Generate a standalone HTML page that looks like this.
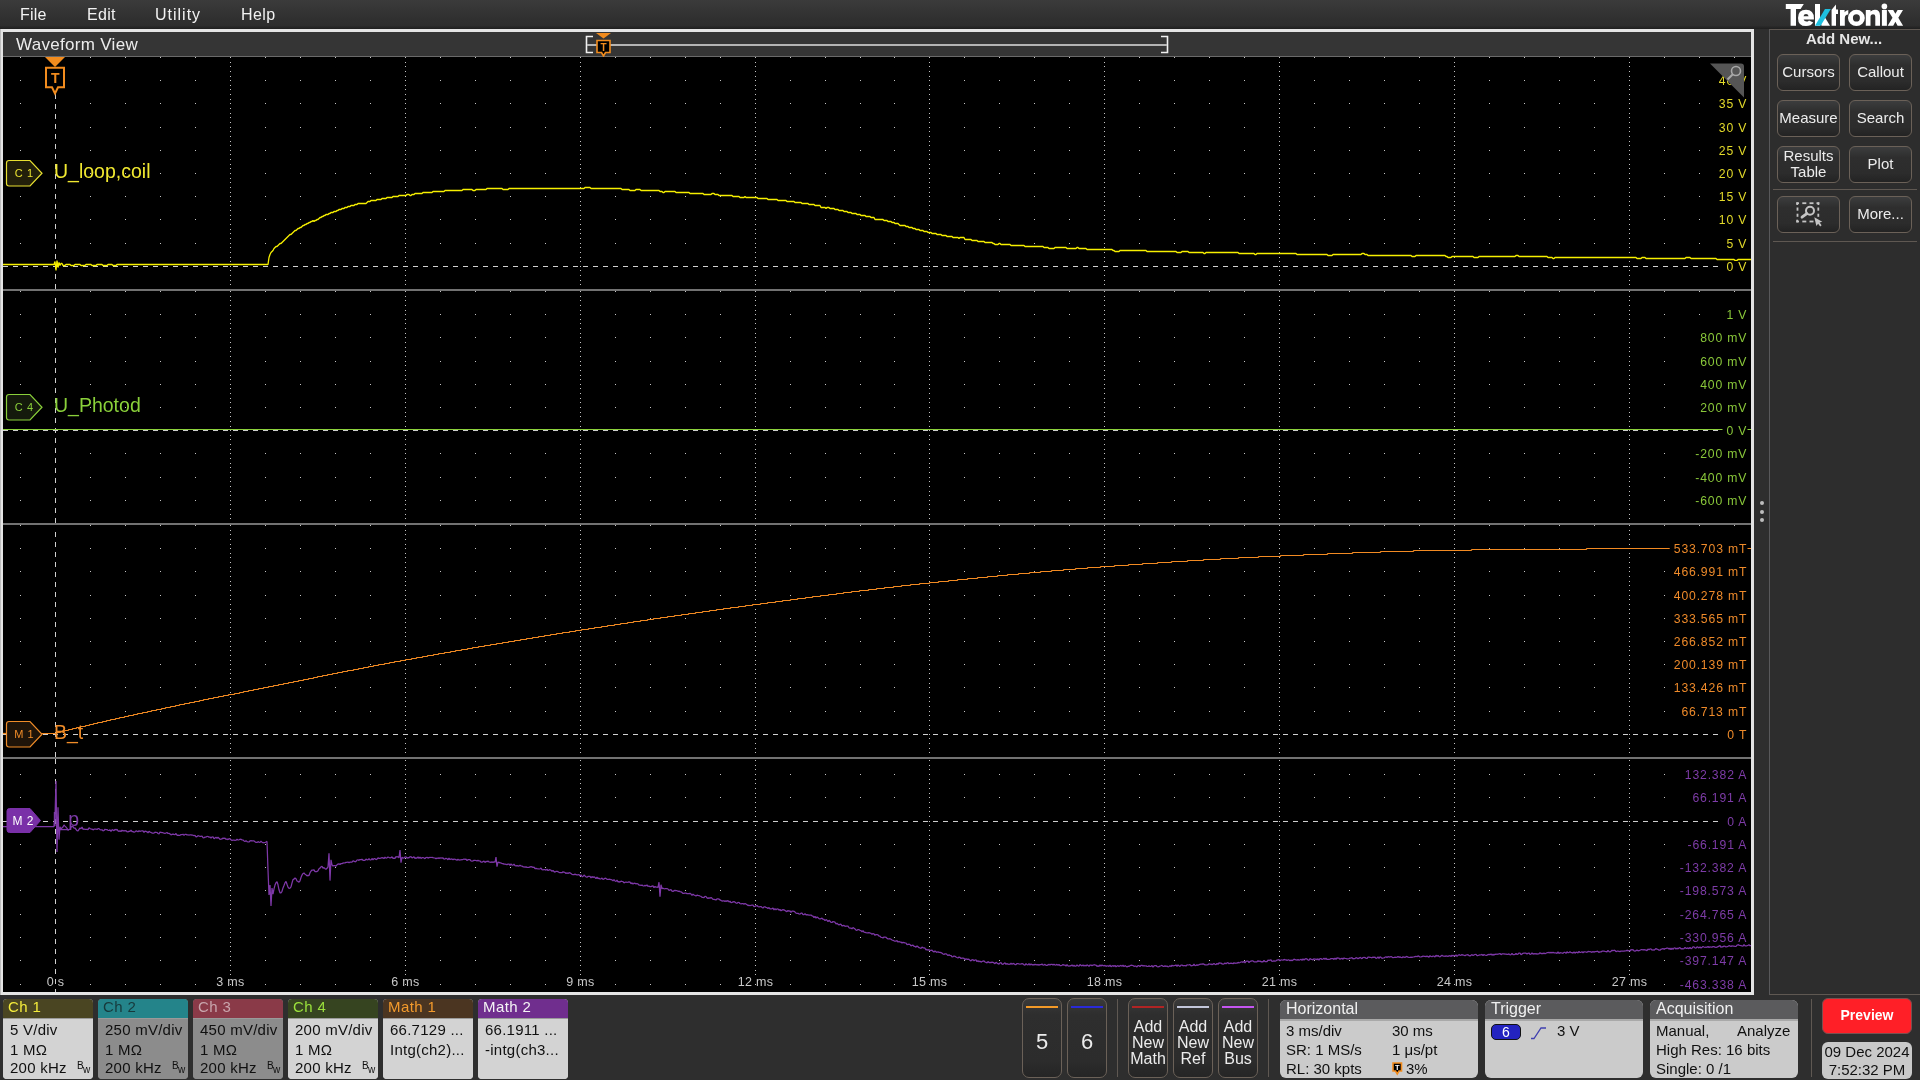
<!DOCTYPE html><html><head><meta charset="utf-8"><title>Waveform View</title><style>
*{margin:0;padding:0;box-sizing:border-box;-webkit-font-smoothing:antialiased}
html,body{width:1920px;height:1080px;overflow:hidden;background:#2e2e2e;font-family:"Liberation Sans", sans-serif;}
#root{position:absolute;left:0;top:0;width:1920px;height:1080px;will-change:transform}
.a{position:absolute;white-space:pre}
#menu{position:absolute;left:0;top:0;width:1920px;height:29px;background:linear-gradient(#3b3b3b,#2f2f2f 70%,#2d2d2d 88%,#1e1e1e);}
#menu span{position:absolute;top:6px;font-size:16px;color:#f2f2f2;}
#frame{position:absolute;left:0;top:29px;width:1754px;height:966px;background:#e4e4e4;border-left:1px solid #bdbdbd}
#hdr{position:absolute;left:3px;top:32px;width:1748px;height:25px;background:#353535;border-bottom:1px solid #6a6a6a}
#hdr .t{position:absolute;left:13px;top:3px;font-size:17px;color:#ececec;letter-spacing:0.3px}
#plot{position:absolute;left:3px;top:57px;width:1748px;height:935px;background:#000;overflow:hidden}
#rp{position:absolute;left:1769px;top:29px;width:151px;height:966px;border:1px solid #5f5852;border-left-color:#58585a;border-right:none;background:#2d2d2d}
.btn{position:absolute;width:63px;height:37px;border:1px solid #6b6158;border-radius:6px;
 background:linear-gradient(#3c3d3e,#2e2e2e 30%,#2c2c2c 75%,#232323);color:#ececec;font-size:15px;text-align:center;}
.btn span{position:absolute;left:0;right:0;}
.sep{position:absolute;height:1px;background:#5f5852}
.bb{position:absolute;top:999px;height:80px;border-radius:4px;overflow:hidden}
.bb .h{position:absolute;left:0;top:0;right:0;height:19px;font-size:15px;padding-left:5px;line-height:15px;letter-spacing:0.4px}
.bb .b{position:absolute;left:0;top:19px;right:0;bottom:0;background:#cfcfcf;border-top:1px solid #9a9a9a}
.bb .l{position:absolute;left:7px;font-size:15px;color:#101010;letter-spacing:0.25px}
.bw{position:absolute;font-size:10px;color:#101010}
.kb{position:absolute;top:998px;width:40px;height:80px;border:1px solid #6b6158;border-radius:7px;
 background:linear-gradient(#3a3a3a,#2e2e2e 20%,#2c2c2c 80%,#252525);color:#ececec;text-align:center}
.kb i{position:absolute;left:3px;right:3px;top:7px;height:2px}
.kb span{position:absolute;left:0;right:0;}
.vsep{position:absolute;width:1px;background:#5f5852}
.ib{position:absolute;top:1000px;height:78px;border-radius:6px;overflow:hidden;background:#cbcbcb}
.ib .h{position:absolute;left:0;top:0;right:0;height:21px;background:#5b5b5d;color:#f0f0f0;font-size:16px;line-height:17px;padding-left:6px;border-bottom:2px solid #a9a9a9}
.ib .l{position:absolute;font-size:15px;color:#101010}
</style></head><body><div id="root"><div id="menu"><span style="left:20px;letter-spacing:0.2px">File</span><span style="left:87px;letter-spacing:0.3px">Edit</span><span style="left:155px;letter-spacing:1.0px">Utility</span><span style="left:241px;letter-spacing:0.4px">Help</span><svg class="a" style="left:1780px;top:0" width="130" height="29" viewBox="1780 0 130 29"><g fill="#fff"><path d="M1785.8 4H1803.8L1800.6 9H1796V25.8H1790.6V9H1785.8z"/><path fill-rule="evenodd" d="M1813.9 19.6H1803.6Q1804.3 21.6 1806.4 21.6Q1808 21.6 1809 20.4L1813.2 22.6Q1811.2 26.1 1806 26.1Q1798 26.1 1798 17.9Q1798 9.7 1806 9.7Q1813.9 9.7 1813.9 18.2zM1803.5 16.2H1808.6Q1808.2 13.9 1806 13.9Q1803.9 13.9 1803.5 16.2z"/><rect x="1815" y="4" width="5" height="21.8"/><path d="M1821.5 25.8H1830L1825 17.6L1820.8 23z"/><path d="M1831.6 25.8H1836V14H1838V9.4H1836V4.6L1831.6 9.8z"/><path d="M1840 25.8V10H1844.6V12.2Q1846 10 1848.3 9.9V14.6Q1844.8 14.6 1844.8 18.2V25.8z"/><path fill-rule="evenodd" d="M1856.4 9.8A8.4 8.1 0 1 1 1856.4 26A8.4 8.1 0 1 1 1856.4 9.8zM1856.4 14.2A3.5 3.7 0 1 0 1856.4 21.6A3.5 3.7 0 1 0 1856.4 14.2z"/><path d="M1865.8 25.8V10H1870.5V11.6Q1872.2 9.7 1874.9 9.7Q1880 9.7 1880 15.5V25.8H1875.3V16.4Q1875.3 14.3 1873.1 14.3Q1870.5 14.3 1870.5 16.8V25.8z"/><rect x="1881.9" y="10" width="5" height="15.8"/><circle cx="1884.4" cy="6.4" r="2.8"/><path d="M1887.7 10H1893.2L1895.4 13.8L1897.6 10H1903L1898.3 17.8L1903.1 25.8H1897.6L1895.4 21.8L1893.2 25.8H1887.7L1892.5 17.8z"/></g><path d="M1815 25.8H1820.6L1830.8 9H1825z" fill="#1ec0e0"/></svg></div><div id="frame"></div><div id="hdr"><span class="t">Waveform View</span></div><svg class="a" style="left:580px;top:29px" width="600" height="30" viewBox="580 29 600 30"><path d="M593 36.5h-6.5v16h6.5" fill="none" stroke="#f0f0f0" stroke-width="1.6"/><path d="M1161 36.5h6.5v16h-6.5" fill="none" stroke="#f0f0f0" stroke-width="1.6"/><rect x="587" y="44" width="580" height="2" fill="#b4b4b4"/><polygon points="596,33 611,33 603.5,38.5" fill="#f28c1e"/><path d="M597 40.5h13v12h-4.5l-2,3.5l-2,-3.5h-4.5z" fill="#000" stroke="#f28c1e" stroke-width="1.6"/><text x="603.5" y="51" font-family="Liberation Sans" font-weight="bold" font-size="10" fill="#f28c1e" text-anchor="middle">T</text></svg><div id="plot"><svg width="1748" height="935" viewBox="3 57 1748 935" style="position:absolute;left:0;top:0" font-family="Liberation Sans"><path d="M20 57h1v1h-1zM90 57h1v1h-1zM125 57h1v1h-1zM160 57h1v1h-1zM195 57h1v1h-1zM265 57h1v1h-1zM300 57h1v1h-1zM335 57h1v1h-1zM370 57h1v1h-1zM440 57h1v1h-1zM475 57h1v1h-1zM510 57h1v1h-1zM545 57h1v1h-1zM615 57h1v1h-1zM650 57h1v1h-1zM685 57h1v1h-1zM720 57h1v1h-1zM790 57h1v1h-1zM825 57h1v1h-1zM860 57h1v1h-1zM894 57h1v1h-1zM964 57h1v1h-1zM999 57h1v1h-1zM1034 57h1v1h-1zM1069 57h1v1h-1zM1139 57h1v1h-1zM1174 57h1v1h-1zM1209 57h1v1h-1zM1244 57h1v1h-1zM1314 57h1v1h-1zM1349 57h1v1h-1zM1384 57h1v1h-1zM1419 57h1v1h-1zM1489 57h1v1h-1zM1524 57h1v1h-1zM1559 57h1v1h-1zM1594 57h1v1h-1zM1664 57h1v1h-1zM1699 57h1v1h-1zM1734 57h1v1h-1zM20 80h1v1h-1zM90 80h1v1h-1zM125 80h1v1h-1zM160 80h1v1h-1zM195 80h1v1h-1zM265 80h1v1h-1zM300 80h1v1h-1zM335 80h1v1h-1zM370 80h1v1h-1zM440 80h1v1h-1zM475 80h1v1h-1zM510 80h1v1h-1zM545 80h1v1h-1zM615 80h1v1h-1zM650 80h1v1h-1zM685 80h1v1h-1zM720 80h1v1h-1zM790 80h1v1h-1zM825 80h1v1h-1zM860 80h1v1h-1zM894 80h1v1h-1zM964 80h1v1h-1zM999 80h1v1h-1zM1034 80h1v1h-1zM1069 80h1v1h-1zM1139 80h1v1h-1zM1174 80h1v1h-1zM1209 80h1v1h-1zM1244 80h1v1h-1zM1314 80h1v1h-1zM1349 80h1v1h-1zM1384 80h1v1h-1zM1419 80h1v1h-1zM1489 80h1v1h-1zM1524 80h1v1h-1zM1559 80h1v1h-1zM1594 80h1v1h-1zM1664 80h1v1h-1zM1699 80h1v1h-1zM1734 80h1v1h-1zM20 103h1v1h-1zM90 103h1v1h-1zM125 103h1v1h-1zM160 103h1v1h-1zM195 103h1v1h-1zM265 103h1v1h-1zM300 103h1v1h-1zM335 103h1v1h-1zM370 103h1v1h-1zM440 103h1v1h-1zM475 103h1v1h-1zM510 103h1v1h-1zM545 103h1v1h-1zM615 103h1v1h-1zM650 103h1v1h-1zM685 103h1v1h-1zM720 103h1v1h-1zM790 103h1v1h-1zM825 103h1v1h-1zM860 103h1v1h-1zM894 103h1v1h-1zM964 103h1v1h-1zM999 103h1v1h-1zM1034 103h1v1h-1zM1069 103h1v1h-1zM1139 103h1v1h-1zM1174 103h1v1h-1zM1209 103h1v1h-1zM1244 103h1v1h-1zM1314 103h1v1h-1zM1349 103h1v1h-1zM1384 103h1v1h-1zM1419 103h1v1h-1zM1489 103h1v1h-1zM1524 103h1v1h-1zM1559 103h1v1h-1zM1594 103h1v1h-1zM1664 103h1v1h-1zM1699 103h1v1h-1zM1734 103h1v1h-1zM20 127h1v1h-1zM90 127h1v1h-1zM125 127h1v1h-1zM160 127h1v1h-1zM195 127h1v1h-1zM265 127h1v1h-1zM300 127h1v1h-1zM335 127h1v1h-1zM370 127h1v1h-1zM440 127h1v1h-1zM475 127h1v1h-1zM510 127h1v1h-1zM545 127h1v1h-1zM615 127h1v1h-1zM650 127h1v1h-1zM685 127h1v1h-1zM720 127h1v1h-1zM790 127h1v1h-1zM825 127h1v1h-1zM860 127h1v1h-1zM894 127h1v1h-1zM964 127h1v1h-1zM999 127h1v1h-1zM1034 127h1v1h-1zM1069 127h1v1h-1zM1139 127h1v1h-1zM1174 127h1v1h-1zM1209 127h1v1h-1zM1244 127h1v1h-1zM1314 127h1v1h-1zM1349 127h1v1h-1zM1384 127h1v1h-1zM1419 127h1v1h-1zM1489 127h1v1h-1zM1524 127h1v1h-1zM1559 127h1v1h-1zM1594 127h1v1h-1zM1664 127h1v1h-1zM1699 127h1v1h-1zM1734 127h1v1h-1zM20 150h1v1h-1zM90 150h1v1h-1zM125 150h1v1h-1zM160 150h1v1h-1zM195 150h1v1h-1zM265 150h1v1h-1zM300 150h1v1h-1zM335 150h1v1h-1zM370 150h1v1h-1zM440 150h1v1h-1zM475 150h1v1h-1zM510 150h1v1h-1zM545 150h1v1h-1zM615 150h1v1h-1zM650 150h1v1h-1zM685 150h1v1h-1zM720 150h1v1h-1zM790 150h1v1h-1zM825 150h1v1h-1zM860 150h1v1h-1zM894 150h1v1h-1zM964 150h1v1h-1zM999 150h1v1h-1zM1034 150h1v1h-1zM1069 150h1v1h-1zM1139 150h1v1h-1zM1174 150h1v1h-1zM1209 150h1v1h-1zM1244 150h1v1h-1zM1314 150h1v1h-1zM1349 150h1v1h-1zM1384 150h1v1h-1zM1419 150h1v1h-1zM1489 150h1v1h-1zM1524 150h1v1h-1zM1559 150h1v1h-1zM1594 150h1v1h-1zM1664 150h1v1h-1zM1699 150h1v1h-1zM1734 150h1v1h-1zM20 173h1v1h-1zM90 173h1v1h-1zM125 173h1v1h-1zM160 173h1v1h-1zM195 173h1v1h-1zM265 173h1v1h-1zM300 173h1v1h-1zM335 173h1v1h-1zM370 173h1v1h-1zM440 173h1v1h-1zM475 173h1v1h-1zM510 173h1v1h-1zM545 173h1v1h-1zM615 173h1v1h-1zM650 173h1v1h-1zM685 173h1v1h-1zM720 173h1v1h-1zM790 173h1v1h-1zM825 173h1v1h-1zM860 173h1v1h-1zM894 173h1v1h-1zM964 173h1v1h-1zM999 173h1v1h-1zM1034 173h1v1h-1zM1069 173h1v1h-1zM1139 173h1v1h-1zM1174 173h1v1h-1zM1209 173h1v1h-1zM1244 173h1v1h-1zM1314 173h1v1h-1zM1349 173h1v1h-1zM1384 173h1v1h-1zM1419 173h1v1h-1zM1489 173h1v1h-1zM1524 173h1v1h-1zM1559 173h1v1h-1zM1594 173h1v1h-1zM1664 173h1v1h-1zM1699 173h1v1h-1zM1734 173h1v1h-1zM20 196h1v1h-1zM90 196h1v1h-1zM125 196h1v1h-1zM160 196h1v1h-1zM195 196h1v1h-1zM265 196h1v1h-1zM300 196h1v1h-1zM335 196h1v1h-1zM370 196h1v1h-1zM440 196h1v1h-1zM475 196h1v1h-1zM510 196h1v1h-1zM545 196h1v1h-1zM615 196h1v1h-1zM650 196h1v1h-1zM685 196h1v1h-1zM720 196h1v1h-1zM790 196h1v1h-1zM825 196h1v1h-1zM860 196h1v1h-1zM894 196h1v1h-1zM964 196h1v1h-1zM999 196h1v1h-1zM1034 196h1v1h-1zM1069 196h1v1h-1zM1139 196h1v1h-1zM1174 196h1v1h-1zM1209 196h1v1h-1zM1244 196h1v1h-1zM1314 196h1v1h-1zM1349 196h1v1h-1zM1384 196h1v1h-1zM1419 196h1v1h-1zM1489 196h1v1h-1zM1524 196h1v1h-1zM1559 196h1v1h-1zM1594 196h1v1h-1zM1664 196h1v1h-1zM1699 196h1v1h-1zM1734 196h1v1h-1zM20 219h1v1h-1zM90 219h1v1h-1zM125 219h1v1h-1zM160 219h1v1h-1zM195 219h1v1h-1zM265 219h1v1h-1zM300 219h1v1h-1zM335 219h1v1h-1zM370 219h1v1h-1zM440 219h1v1h-1zM475 219h1v1h-1zM510 219h1v1h-1zM545 219h1v1h-1zM615 219h1v1h-1zM650 219h1v1h-1zM685 219h1v1h-1zM720 219h1v1h-1zM790 219h1v1h-1zM825 219h1v1h-1zM860 219h1v1h-1zM894 219h1v1h-1zM964 219h1v1h-1zM999 219h1v1h-1zM1034 219h1v1h-1zM1069 219h1v1h-1zM1139 219h1v1h-1zM1174 219h1v1h-1zM1209 219h1v1h-1zM1244 219h1v1h-1zM1314 219h1v1h-1zM1349 219h1v1h-1zM1384 219h1v1h-1zM1419 219h1v1h-1zM1489 219h1v1h-1zM1524 219h1v1h-1zM1559 219h1v1h-1zM1594 219h1v1h-1zM1664 219h1v1h-1zM1699 219h1v1h-1zM1734 219h1v1h-1zM20 243h1v1h-1zM90 243h1v1h-1zM125 243h1v1h-1zM160 243h1v1h-1zM195 243h1v1h-1zM265 243h1v1h-1zM300 243h1v1h-1zM335 243h1v1h-1zM370 243h1v1h-1zM440 243h1v1h-1zM475 243h1v1h-1zM510 243h1v1h-1zM545 243h1v1h-1zM615 243h1v1h-1zM650 243h1v1h-1zM685 243h1v1h-1zM720 243h1v1h-1zM790 243h1v1h-1zM825 243h1v1h-1zM860 243h1v1h-1zM894 243h1v1h-1zM964 243h1v1h-1zM999 243h1v1h-1zM1034 243h1v1h-1zM1069 243h1v1h-1zM1139 243h1v1h-1zM1174 243h1v1h-1zM1209 243h1v1h-1zM1244 243h1v1h-1zM1314 243h1v1h-1zM1349 243h1v1h-1zM1384 243h1v1h-1zM1419 243h1v1h-1zM1489 243h1v1h-1zM1524 243h1v1h-1zM1559 243h1v1h-1zM1594 243h1v1h-1zM1664 243h1v1h-1zM1699 243h1v1h-1zM1734 243h1v1h-1zM230 57h1v1h-1zM230 62h1v1h-1zM230 66h1v1h-1zM230 71h1v1h-1zM230 76h1v1h-1zM230 80h1v1h-1zM230 85h1v1h-1zM230 89h1v1h-1zM230 94h1v1h-1zM230 99h1v1h-1zM230 103h1v1h-1zM230 108h1v1h-1zM230 113h1v1h-1zM230 117h1v1h-1zM230 122h1v1h-1zM230 127h1v1h-1zM230 131h1v1h-1zM230 136h1v1h-1zM230 141h1v1h-1zM230 145h1v1h-1zM230 150h1v1h-1zM230 154h1v1h-1zM230 159h1v1h-1zM230 164h1v1h-1zM230 168h1v1h-1zM230 173h1v1h-1zM230 178h1v1h-1zM230 182h1v1h-1zM230 187h1v1h-1zM230 192h1v1h-1zM230 196h1v1h-1zM230 201h1v1h-1zM230 205h1v1h-1zM230 210h1v1h-1zM230 215h1v1h-1zM230 219h1v1h-1zM230 224h1v1h-1zM230 229h1v1h-1zM230 233h1v1h-1zM230 238h1v1h-1zM230 243h1v1h-1zM230 247h1v1h-1zM230 252h1v1h-1zM230 257h1v1h-1zM230 261h1v1h-1zM230 266h1v1h-1zM230 270h1v1h-1zM230 275h1v1h-1zM230 280h1v1h-1zM230 284h1v1h-1zM405 57h1v1h-1zM405 62h1v1h-1zM405 66h1v1h-1zM405 71h1v1h-1zM405 76h1v1h-1zM405 80h1v1h-1zM405 85h1v1h-1zM405 89h1v1h-1zM405 94h1v1h-1zM405 99h1v1h-1zM405 103h1v1h-1zM405 108h1v1h-1zM405 113h1v1h-1zM405 117h1v1h-1zM405 122h1v1h-1zM405 127h1v1h-1zM405 131h1v1h-1zM405 136h1v1h-1zM405 141h1v1h-1zM405 145h1v1h-1zM405 150h1v1h-1zM405 154h1v1h-1zM405 159h1v1h-1zM405 164h1v1h-1zM405 168h1v1h-1zM405 173h1v1h-1zM405 178h1v1h-1zM405 182h1v1h-1zM405 187h1v1h-1zM405 192h1v1h-1zM405 196h1v1h-1zM405 201h1v1h-1zM405 205h1v1h-1zM405 210h1v1h-1zM405 215h1v1h-1zM405 219h1v1h-1zM405 224h1v1h-1zM405 229h1v1h-1zM405 233h1v1h-1zM405 238h1v1h-1zM405 243h1v1h-1zM405 247h1v1h-1zM405 252h1v1h-1zM405 257h1v1h-1zM405 261h1v1h-1zM405 266h1v1h-1zM405 270h1v1h-1zM405 275h1v1h-1zM405 280h1v1h-1zM405 284h1v1h-1zM580 57h1v1h-1zM580 62h1v1h-1zM580 66h1v1h-1zM580 71h1v1h-1zM580 76h1v1h-1zM580 80h1v1h-1zM580 85h1v1h-1zM580 89h1v1h-1zM580 94h1v1h-1zM580 99h1v1h-1zM580 103h1v1h-1zM580 108h1v1h-1zM580 113h1v1h-1zM580 117h1v1h-1zM580 122h1v1h-1zM580 127h1v1h-1zM580 131h1v1h-1zM580 136h1v1h-1zM580 141h1v1h-1zM580 145h1v1h-1zM580 150h1v1h-1zM580 154h1v1h-1zM580 159h1v1h-1zM580 164h1v1h-1zM580 168h1v1h-1zM580 173h1v1h-1zM580 178h1v1h-1zM580 182h1v1h-1zM580 187h1v1h-1zM580 192h1v1h-1zM580 196h1v1h-1zM580 201h1v1h-1zM580 205h1v1h-1zM580 210h1v1h-1zM580 215h1v1h-1zM580 219h1v1h-1zM580 224h1v1h-1zM580 229h1v1h-1zM580 233h1v1h-1zM580 238h1v1h-1zM580 243h1v1h-1zM580 247h1v1h-1zM580 252h1v1h-1zM580 257h1v1h-1zM580 261h1v1h-1zM580 266h1v1h-1zM580 270h1v1h-1zM580 275h1v1h-1zM580 280h1v1h-1zM580 284h1v1h-1zM755 57h1v1h-1zM755 62h1v1h-1zM755 66h1v1h-1zM755 71h1v1h-1zM755 76h1v1h-1zM755 80h1v1h-1zM755 85h1v1h-1zM755 89h1v1h-1zM755 94h1v1h-1zM755 99h1v1h-1zM755 103h1v1h-1zM755 108h1v1h-1zM755 113h1v1h-1zM755 117h1v1h-1zM755 122h1v1h-1zM755 127h1v1h-1zM755 131h1v1h-1zM755 136h1v1h-1zM755 141h1v1h-1zM755 145h1v1h-1zM755 150h1v1h-1zM755 154h1v1h-1zM755 159h1v1h-1zM755 164h1v1h-1zM755 168h1v1h-1zM755 173h1v1h-1zM755 178h1v1h-1zM755 182h1v1h-1zM755 187h1v1h-1zM755 192h1v1h-1zM755 196h1v1h-1zM755 201h1v1h-1zM755 205h1v1h-1zM755 210h1v1h-1zM755 215h1v1h-1zM755 219h1v1h-1zM755 224h1v1h-1zM755 229h1v1h-1zM755 233h1v1h-1zM755 238h1v1h-1zM755 243h1v1h-1zM755 247h1v1h-1zM755 252h1v1h-1zM755 257h1v1h-1zM755 261h1v1h-1zM755 266h1v1h-1zM755 270h1v1h-1zM755 275h1v1h-1zM755 280h1v1h-1zM755 284h1v1h-1zM929 57h1v1h-1zM929 62h1v1h-1zM929 66h1v1h-1zM929 71h1v1h-1zM929 76h1v1h-1zM929 80h1v1h-1zM929 85h1v1h-1zM929 89h1v1h-1zM929 94h1v1h-1zM929 99h1v1h-1zM929 103h1v1h-1zM929 108h1v1h-1zM929 113h1v1h-1zM929 117h1v1h-1zM929 122h1v1h-1zM929 127h1v1h-1zM929 131h1v1h-1zM929 136h1v1h-1zM929 141h1v1h-1zM929 145h1v1h-1zM929 150h1v1h-1zM929 154h1v1h-1zM929 159h1v1h-1zM929 164h1v1h-1zM929 168h1v1h-1zM929 173h1v1h-1zM929 178h1v1h-1zM929 182h1v1h-1zM929 187h1v1h-1zM929 192h1v1h-1zM929 196h1v1h-1zM929 201h1v1h-1zM929 205h1v1h-1zM929 210h1v1h-1zM929 215h1v1h-1zM929 219h1v1h-1zM929 224h1v1h-1zM929 229h1v1h-1zM929 233h1v1h-1zM929 238h1v1h-1zM929 243h1v1h-1zM929 247h1v1h-1zM929 252h1v1h-1zM929 257h1v1h-1zM929 261h1v1h-1zM929 266h1v1h-1zM929 270h1v1h-1zM929 275h1v1h-1zM929 280h1v1h-1zM929 284h1v1h-1zM1104 57h1v1h-1zM1104 62h1v1h-1zM1104 66h1v1h-1zM1104 71h1v1h-1zM1104 76h1v1h-1zM1104 80h1v1h-1zM1104 85h1v1h-1zM1104 89h1v1h-1zM1104 94h1v1h-1zM1104 99h1v1h-1zM1104 103h1v1h-1zM1104 108h1v1h-1zM1104 113h1v1h-1zM1104 117h1v1h-1zM1104 122h1v1h-1zM1104 127h1v1h-1zM1104 131h1v1h-1zM1104 136h1v1h-1zM1104 141h1v1h-1zM1104 145h1v1h-1zM1104 150h1v1h-1zM1104 154h1v1h-1zM1104 159h1v1h-1zM1104 164h1v1h-1zM1104 168h1v1h-1zM1104 173h1v1h-1zM1104 178h1v1h-1zM1104 182h1v1h-1zM1104 187h1v1h-1zM1104 192h1v1h-1zM1104 196h1v1h-1zM1104 201h1v1h-1zM1104 205h1v1h-1zM1104 210h1v1h-1zM1104 215h1v1h-1zM1104 219h1v1h-1zM1104 224h1v1h-1zM1104 229h1v1h-1zM1104 233h1v1h-1zM1104 238h1v1h-1zM1104 243h1v1h-1zM1104 247h1v1h-1zM1104 252h1v1h-1zM1104 257h1v1h-1zM1104 261h1v1h-1zM1104 266h1v1h-1zM1104 270h1v1h-1zM1104 275h1v1h-1zM1104 280h1v1h-1zM1104 284h1v1h-1zM1279 57h1v1h-1zM1279 62h1v1h-1zM1279 66h1v1h-1zM1279 71h1v1h-1zM1279 76h1v1h-1zM1279 80h1v1h-1zM1279 85h1v1h-1zM1279 89h1v1h-1zM1279 94h1v1h-1zM1279 99h1v1h-1zM1279 103h1v1h-1zM1279 108h1v1h-1zM1279 113h1v1h-1zM1279 117h1v1h-1zM1279 122h1v1h-1zM1279 127h1v1h-1zM1279 131h1v1h-1zM1279 136h1v1h-1zM1279 141h1v1h-1zM1279 145h1v1h-1zM1279 150h1v1h-1zM1279 154h1v1h-1zM1279 159h1v1h-1zM1279 164h1v1h-1zM1279 168h1v1h-1zM1279 173h1v1h-1zM1279 178h1v1h-1zM1279 182h1v1h-1zM1279 187h1v1h-1zM1279 192h1v1h-1zM1279 196h1v1h-1zM1279 201h1v1h-1zM1279 205h1v1h-1zM1279 210h1v1h-1zM1279 215h1v1h-1zM1279 219h1v1h-1zM1279 224h1v1h-1zM1279 229h1v1h-1zM1279 233h1v1h-1zM1279 238h1v1h-1zM1279 243h1v1h-1zM1279 247h1v1h-1zM1279 252h1v1h-1zM1279 257h1v1h-1zM1279 261h1v1h-1zM1279 266h1v1h-1zM1279 270h1v1h-1zM1279 275h1v1h-1zM1279 280h1v1h-1zM1279 284h1v1h-1zM1454 57h1v1h-1zM1454 62h1v1h-1zM1454 66h1v1h-1zM1454 71h1v1h-1zM1454 76h1v1h-1zM1454 80h1v1h-1zM1454 85h1v1h-1zM1454 89h1v1h-1zM1454 94h1v1h-1zM1454 99h1v1h-1zM1454 103h1v1h-1zM1454 108h1v1h-1zM1454 113h1v1h-1zM1454 117h1v1h-1zM1454 122h1v1h-1zM1454 127h1v1h-1zM1454 131h1v1h-1zM1454 136h1v1h-1zM1454 141h1v1h-1zM1454 145h1v1h-1zM1454 150h1v1h-1zM1454 154h1v1h-1zM1454 159h1v1h-1zM1454 164h1v1h-1zM1454 168h1v1h-1zM1454 173h1v1h-1zM1454 178h1v1h-1zM1454 182h1v1h-1zM1454 187h1v1h-1zM1454 192h1v1h-1zM1454 196h1v1h-1zM1454 201h1v1h-1zM1454 205h1v1h-1zM1454 210h1v1h-1zM1454 215h1v1h-1zM1454 219h1v1h-1zM1454 224h1v1h-1zM1454 229h1v1h-1zM1454 233h1v1h-1zM1454 238h1v1h-1zM1454 243h1v1h-1zM1454 247h1v1h-1zM1454 252h1v1h-1zM1454 257h1v1h-1zM1454 261h1v1h-1zM1454 266h1v1h-1zM1454 270h1v1h-1zM1454 275h1v1h-1zM1454 280h1v1h-1zM1454 284h1v1h-1zM1629 57h1v1h-1zM1629 62h1v1h-1zM1629 66h1v1h-1zM1629 71h1v1h-1zM1629 76h1v1h-1zM1629 80h1v1h-1zM1629 85h1v1h-1zM1629 89h1v1h-1zM1629 94h1v1h-1zM1629 99h1v1h-1zM1629 103h1v1h-1zM1629 108h1v1h-1zM1629 113h1v1h-1zM1629 117h1v1h-1zM1629 122h1v1h-1zM1629 127h1v1h-1zM1629 131h1v1h-1zM1629 136h1v1h-1zM1629 141h1v1h-1zM1629 145h1v1h-1zM1629 150h1v1h-1zM1629 154h1v1h-1zM1629 159h1v1h-1zM1629 164h1v1h-1zM1629 168h1v1h-1zM1629 173h1v1h-1zM1629 178h1v1h-1zM1629 182h1v1h-1zM1629 187h1v1h-1zM1629 192h1v1h-1zM1629 196h1v1h-1zM1629 201h1v1h-1zM1629 205h1v1h-1zM1629 210h1v1h-1zM1629 215h1v1h-1zM1629 219h1v1h-1zM1629 224h1v1h-1zM1629 229h1v1h-1zM1629 233h1v1h-1zM1629 238h1v1h-1zM1629 243h1v1h-1zM1629 247h1v1h-1zM1629 252h1v1h-1zM1629 257h1v1h-1zM1629 261h1v1h-1zM1629 266h1v1h-1zM1629 270h1v1h-1zM1629 275h1v1h-1zM1629 280h1v1h-1zM1629 284h1v1h-1zM20 291h1v1h-1zM90 291h1v1h-1zM125 291h1v1h-1zM160 291h1v1h-1zM195 291h1v1h-1zM265 291h1v1h-1zM300 291h1v1h-1zM335 291h1v1h-1zM370 291h1v1h-1zM440 291h1v1h-1zM475 291h1v1h-1zM510 291h1v1h-1zM545 291h1v1h-1zM615 291h1v1h-1zM650 291h1v1h-1zM685 291h1v1h-1zM720 291h1v1h-1zM790 291h1v1h-1zM825 291h1v1h-1zM860 291h1v1h-1zM894 291h1v1h-1zM964 291h1v1h-1zM999 291h1v1h-1zM1034 291h1v1h-1zM1069 291h1v1h-1zM1139 291h1v1h-1zM1174 291h1v1h-1zM1209 291h1v1h-1zM1244 291h1v1h-1zM1314 291h1v1h-1zM1349 291h1v1h-1zM1384 291h1v1h-1zM1419 291h1v1h-1zM1489 291h1v1h-1zM1524 291h1v1h-1zM1559 291h1v1h-1zM1594 291h1v1h-1zM1664 291h1v1h-1zM1699 291h1v1h-1zM1734 291h1v1h-1zM20 314h1v1h-1zM90 314h1v1h-1zM125 314h1v1h-1zM160 314h1v1h-1zM195 314h1v1h-1zM265 314h1v1h-1zM300 314h1v1h-1zM335 314h1v1h-1zM370 314h1v1h-1zM440 314h1v1h-1zM475 314h1v1h-1zM510 314h1v1h-1zM545 314h1v1h-1zM615 314h1v1h-1zM650 314h1v1h-1zM685 314h1v1h-1zM720 314h1v1h-1zM790 314h1v1h-1zM825 314h1v1h-1zM860 314h1v1h-1zM894 314h1v1h-1zM964 314h1v1h-1zM999 314h1v1h-1zM1034 314h1v1h-1zM1069 314h1v1h-1zM1139 314h1v1h-1zM1174 314h1v1h-1zM1209 314h1v1h-1zM1244 314h1v1h-1zM1314 314h1v1h-1zM1349 314h1v1h-1zM1384 314h1v1h-1zM1419 314h1v1h-1zM1489 314h1v1h-1zM1524 314h1v1h-1zM1559 314h1v1h-1zM1594 314h1v1h-1zM1664 314h1v1h-1zM1699 314h1v1h-1zM1734 314h1v1h-1zM20 337h1v1h-1zM90 337h1v1h-1zM125 337h1v1h-1zM160 337h1v1h-1zM195 337h1v1h-1zM265 337h1v1h-1zM300 337h1v1h-1zM335 337h1v1h-1zM370 337h1v1h-1zM440 337h1v1h-1zM475 337h1v1h-1zM510 337h1v1h-1zM545 337h1v1h-1zM615 337h1v1h-1zM650 337h1v1h-1zM685 337h1v1h-1zM720 337h1v1h-1zM790 337h1v1h-1zM825 337h1v1h-1zM860 337h1v1h-1zM894 337h1v1h-1zM964 337h1v1h-1zM999 337h1v1h-1zM1034 337h1v1h-1zM1069 337h1v1h-1zM1139 337h1v1h-1zM1174 337h1v1h-1zM1209 337h1v1h-1zM1244 337h1v1h-1zM1314 337h1v1h-1zM1349 337h1v1h-1zM1384 337h1v1h-1zM1419 337h1v1h-1zM1489 337h1v1h-1zM1524 337h1v1h-1zM1559 337h1v1h-1zM1594 337h1v1h-1zM1664 337h1v1h-1zM1699 337h1v1h-1zM1734 337h1v1h-1zM20 361h1v1h-1zM90 361h1v1h-1zM125 361h1v1h-1zM160 361h1v1h-1zM195 361h1v1h-1zM265 361h1v1h-1zM300 361h1v1h-1zM335 361h1v1h-1zM370 361h1v1h-1zM440 361h1v1h-1zM475 361h1v1h-1zM510 361h1v1h-1zM545 361h1v1h-1zM615 361h1v1h-1zM650 361h1v1h-1zM685 361h1v1h-1zM720 361h1v1h-1zM790 361h1v1h-1zM825 361h1v1h-1zM860 361h1v1h-1zM894 361h1v1h-1zM964 361h1v1h-1zM999 361h1v1h-1zM1034 361h1v1h-1zM1069 361h1v1h-1zM1139 361h1v1h-1zM1174 361h1v1h-1zM1209 361h1v1h-1zM1244 361h1v1h-1zM1314 361h1v1h-1zM1349 361h1v1h-1zM1384 361h1v1h-1zM1419 361h1v1h-1zM1489 361h1v1h-1zM1524 361h1v1h-1zM1559 361h1v1h-1zM1594 361h1v1h-1zM1664 361h1v1h-1zM1699 361h1v1h-1zM1734 361h1v1h-1zM20 384h1v1h-1zM90 384h1v1h-1zM125 384h1v1h-1zM160 384h1v1h-1zM195 384h1v1h-1zM265 384h1v1h-1zM300 384h1v1h-1zM335 384h1v1h-1zM370 384h1v1h-1zM440 384h1v1h-1zM475 384h1v1h-1zM510 384h1v1h-1zM545 384h1v1h-1zM615 384h1v1h-1zM650 384h1v1h-1zM685 384h1v1h-1zM720 384h1v1h-1zM790 384h1v1h-1zM825 384h1v1h-1zM860 384h1v1h-1zM894 384h1v1h-1zM964 384h1v1h-1zM999 384h1v1h-1zM1034 384h1v1h-1zM1069 384h1v1h-1zM1139 384h1v1h-1zM1174 384h1v1h-1zM1209 384h1v1h-1zM1244 384h1v1h-1zM1314 384h1v1h-1zM1349 384h1v1h-1zM1384 384h1v1h-1zM1419 384h1v1h-1zM1489 384h1v1h-1zM1524 384h1v1h-1zM1559 384h1v1h-1zM1594 384h1v1h-1zM1664 384h1v1h-1zM1699 384h1v1h-1zM1734 384h1v1h-1zM20 407h1v1h-1zM90 407h1v1h-1zM125 407h1v1h-1zM160 407h1v1h-1zM195 407h1v1h-1zM265 407h1v1h-1zM300 407h1v1h-1zM335 407h1v1h-1zM370 407h1v1h-1zM440 407h1v1h-1zM475 407h1v1h-1zM510 407h1v1h-1zM545 407h1v1h-1zM615 407h1v1h-1zM650 407h1v1h-1zM685 407h1v1h-1zM720 407h1v1h-1zM790 407h1v1h-1zM825 407h1v1h-1zM860 407h1v1h-1zM894 407h1v1h-1zM964 407h1v1h-1zM999 407h1v1h-1zM1034 407h1v1h-1zM1069 407h1v1h-1zM1139 407h1v1h-1zM1174 407h1v1h-1zM1209 407h1v1h-1zM1244 407h1v1h-1zM1314 407h1v1h-1zM1349 407h1v1h-1zM1384 407h1v1h-1zM1419 407h1v1h-1zM1489 407h1v1h-1zM1524 407h1v1h-1zM1559 407h1v1h-1zM1594 407h1v1h-1zM1664 407h1v1h-1zM1699 407h1v1h-1zM1734 407h1v1h-1zM20 453h1v1h-1zM90 453h1v1h-1zM125 453h1v1h-1zM160 453h1v1h-1zM195 453h1v1h-1zM265 453h1v1h-1zM300 453h1v1h-1zM335 453h1v1h-1zM370 453h1v1h-1zM440 453h1v1h-1zM475 453h1v1h-1zM510 453h1v1h-1zM545 453h1v1h-1zM615 453h1v1h-1zM650 453h1v1h-1zM685 453h1v1h-1zM720 453h1v1h-1zM790 453h1v1h-1zM825 453h1v1h-1zM860 453h1v1h-1zM894 453h1v1h-1zM964 453h1v1h-1zM999 453h1v1h-1zM1034 453h1v1h-1zM1069 453h1v1h-1zM1139 453h1v1h-1zM1174 453h1v1h-1zM1209 453h1v1h-1zM1244 453h1v1h-1zM1314 453h1v1h-1zM1349 453h1v1h-1zM1384 453h1v1h-1zM1419 453h1v1h-1zM1489 453h1v1h-1zM1524 453h1v1h-1zM1559 453h1v1h-1zM1594 453h1v1h-1zM1664 453h1v1h-1zM1699 453h1v1h-1zM1734 453h1v1h-1zM20 477h1v1h-1zM90 477h1v1h-1zM125 477h1v1h-1zM160 477h1v1h-1zM195 477h1v1h-1zM265 477h1v1h-1zM300 477h1v1h-1zM335 477h1v1h-1zM370 477h1v1h-1zM440 477h1v1h-1zM475 477h1v1h-1zM510 477h1v1h-1zM545 477h1v1h-1zM615 477h1v1h-1zM650 477h1v1h-1zM685 477h1v1h-1zM720 477h1v1h-1zM790 477h1v1h-1zM825 477h1v1h-1zM860 477h1v1h-1zM894 477h1v1h-1zM964 477h1v1h-1zM999 477h1v1h-1zM1034 477h1v1h-1zM1069 477h1v1h-1zM1139 477h1v1h-1zM1174 477h1v1h-1zM1209 477h1v1h-1zM1244 477h1v1h-1zM1314 477h1v1h-1zM1349 477h1v1h-1zM1384 477h1v1h-1zM1419 477h1v1h-1zM1489 477h1v1h-1zM1524 477h1v1h-1zM1559 477h1v1h-1zM1594 477h1v1h-1zM1664 477h1v1h-1zM1699 477h1v1h-1zM1734 477h1v1h-1zM20 500h1v1h-1zM90 500h1v1h-1zM125 500h1v1h-1zM160 500h1v1h-1zM195 500h1v1h-1zM265 500h1v1h-1zM300 500h1v1h-1zM335 500h1v1h-1zM370 500h1v1h-1zM440 500h1v1h-1zM475 500h1v1h-1zM510 500h1v1h-1zM545 500h1v1h-1zM615 500h1v1h-1zM650 500h1v1h-1zM685 500h1v1h-1zM720 500h1v1h-1zM790 500h1v1h-1zM825 500h1v1h-1zM860 500h1v1h-1zM894 500h1v1h-1zM964 500h1v1h-1zM999 500h1v1h-1zM1034 500h1v1h-1zM1069 500h1v1h-1zM1139 500h1v1h-1zM1174 500h1v1h-1zM1209 500h1v1h-1zM1244 500h1v1h-1zM1314 500h1v1h-1zM1349 500h1v1h-1zM1384 500h1v1h-1zM1419 500h1v1h-1zM1489 500h1v1h-1zM1524 500h1v1h-1zM1559 500h1v1h-1zM1594 500h1v1h-1zM1664 500h1v1h-1zM1699 500h1v1h-1zM1734 500h1v1h-1zM230 291h1v1h-1zM230 296h1v1h-1zM230 300h1v1h-1zM230 305h1v1h-1zM230 310h1v1h-1zM230 314h1v1h-1zM230 319h1v1h-1zM230 323h1v1h-1zM230 328h1v1h-1zM230 333h1v1h-1zM230 337h1v1h-1zM230 342h1v1h-1zM230 347h1v1h-1zM230 351h1v1h-1zM230 356h1v1h-1zM230 361h1v1h-1zM230 365h1v1h-1zM230 370h1v1h-1zM230 375h1v1h-1zM230 379h1v1h-1zM230 384h1v1h-1zM230 388h1v1h-1zM230 393h1v1h-1zM230 398h1v1h-1zM230 402h1v1h-1zM230 407h1v1h-1zM230 412h1v1h-1zM230 416h1v1h-1zM230 421h1v1h-1zM230 426h1v1h-1zM230 430h1v1h-1zM230 435h1v1h-1zM230 439h1v1h-1zM230 444h1v1h-1zM230 449h1v1h-1zM230 453h1v1h-1zM230 458h1v1h-1zM230 463h1v1h-1zM230 467h1v1h-1zM230 472h1v1h-1zM230 477h1v1h-1zM230 481h1v1h-1zM230 486h1v1h-1zM230 491h1v1h-1zM230 495h1v1h-1zM230 500h1v1h-1zM230 504h1v1h-1zM230 509h1v1h-1zM230 514h1v1h-1zM230 518h1v1h-1zM405 291h1v1h-1zM405 296h1v1h-1zM405 300h1v1h-1zM405 305h1v1h-1zM405 310h1v1h-1zM405 314h1v1h-1zM405 319h1v1h-1zM405 323h1v1h-1zM405 328h1v1h-1zM405 333h1v1h-1zM405 337h1v1h-1zM405 342h1v1h-1zM405 347h1v1h-1zM405 351h1v1h-1zM405 356h1v1h-1zM405 361h1v1h-1zM405 365h1v1h-1zM405 370h1v1h-1zM405 375h1v1h-1zM405 379h1v1h-1zM405 384h1v1h-1zM405 388h1v1h-1zM405 393h1v1h-1zM405 398h1v1h-1zM405 402h1v1h-1zM405 407h1v1h-1zM405 412h1v1h-1zM405 416h1v1h-1zM405 421h1v1h-1zM405 426h1v1h-1zM405 430h1v1h-1zM405 435h1v1h-1zM405 439h1v1h-1zM405 444h1v1h-1zM405 449h1v1h-1zM405 453h1v1h-1zM405 458h1v1h-1zM405 463h1v1h-1zM405 467h1v1h-1zM405 472h1v1h-1zM405 477h1v1h-1zM405 481h1v1h-1zM405 486h1v1h-1zM405 491h1v1h-1zM405 495h1v1h-1zM405 500h1v1h-1zM405 504h1v1h-1zM405 509h1v1h-1zM405 514h1v1h-1zM405 518h1v1h-1zM580 291h1v1h-1zM580 296h1v1h-1zM580 300h1v1h-1zM580 305h1v1h-1zM580 310h1v1h-1zM580 314h1v1h-1zM580 319h1v1h-1zM580 323h1v1h-1zM580 328h1v1h-1zM580 333h1v1h-1zM580 337h1v1h-1zM580 342h1v1h-1zM580 347h1v1h-1zM580 351h1v1h-1zM580 356h1v1h-1zM580 361h1v1h-1zM580 365h1v1h-1zM580 370h1v1h-1zM580 375h1v1h-1zM580 379h1v1h-1zM580 384h1v1h-1zM580 388h1v1h-1zM580 393h1v1h-1zM580 398h1v1h-1zM580 402h1v1h-1zM580 407h1v1h-1zM580 412h1v1h-1zM580 416h1v1h-1zM580 421h1v1h-1zM580 426h1v1h-1zM580 430h1v1h-1zM580 435h1v1h-1zM580 439h1v1h-1zM580 444h1v1h-1zM580 449h1v1h-1zM580 453h1v1h-1zM580 458h1v1h-1zM580 463h1v1h-1zM580 467h1v1h-1zM580 472h1v1h-1zM580 477h1v1h-1zM580 481h1v1h-1zM580 486h1v1h-1zM580 491h1v1h-1zM580 495h1v1h-1zM580 500h1v1h-1zM580 504h1v1h-1zM580 509h1v1h-1zM580 514h1v1h-1zM580 518h1v1h-1zM755 291h1v1h-1zM755 296h1v1h-1zM755 300h1v1h-1zM755 305h1v1h-1zM755 310h1v1h-1zM755 314h1v1h-1zM755 319h1v1h-1zM755 323h1v1h-1zM755 328h1v1h-1zM755 333h1v1h-1zM755 337h1v1h-1zM755 342h1v1h-1zM755 347h1v1h-1zM755 351h1v1h-1zM755 356h1v1h-1zM755 361h1v1h-1zM755 365h1v1h-1zM755 370h1v1h-1zM755 375h1v1h-1zM755 379h1v1h-1zM755 384h1v1h-1zM755 388h1v1h-1zM755 393h1v1h-1zM755 398h1v1h-1zM755 402h1v1h-1zM755 407h1v1h-1zM755 412h1v1h-1zM755 416h1v1h-1zM755 421h1v1h-1zM755 426h1v1h-1zM755 430h1v1h-1zM755 435h1v1h-1zM755 439h1v1h-1zM755 444h1v1h-1zM755 449h1v1h-1zM755 453h1v1h-1zM755 458h1v1h-1zM755 463h1v1h-1zM755 467h1v1h-1zM755 472h1v1h-1zM755 477h1v1h-1zM755 481h1v1h-1zM755 486h1v1h-1zM755 491h1v1h-1zM755 495h1v1h-1zM755 500h1v1h-1zM755 504h1v1h-1zM755 509h1v1h-1zM755 514h1v1h-1zM755 518h1v1h-1zM929 291h1v1h-1zM929 296h1v1h-1zM929 300h1v1h-1zM929 305h1v1h-1zM929 310h1v1h-1zM929 314h1v1h-1zM929 319h1v1h-1zM929 323h1v1h-1zM929 328h1v1h-1zM929 333h1v1h-1zM929 337h1v1h-1zM929 342h1v1h-1zM929 347h1v1h-1zM929 351h1v1h-1zM929 356h1v1h-1zM929 361h1v1h-1zM929 365h1v1h-1zM929 370h1v1h-1zM929 375h1v1h-1zM929 379h1v1h-1zM929 384h1v1h-1zM929 388h1v1h-1zM929 393h1v1h-1zM929 398h1v1h-1zM929 402h1v1h-1zM929 407h1v1h-1zM929 412h1v1h-1zM929 416h1v1h-1zM929 421h1v1h-1zM929 426h1v1h-1zM929 430h1v1h-1zM929 435h1v1h-1zM929 439h1v1h-1zM929 444h1v1h-1zM929 449h1v1h-1zM929 453h1v1h-1zM929 458h1v1h-1zM929 463h1v1h-1zM929 467h1v1h-1zM929 472h1v1h-1zM929 477h1v1h-1zM929 481h1v1h-1zM929 486h1v1h-1zM929 491h1v1h-1zM929 495h1v1h-1zM929 500h1v1h-1zM929 504h1v1h-1zM929 509h1v1h-1zM929 514h1v1h-1zM929 518h1v1h-1zM1104 291h1v1h-1zM1104 296h1v1h-1zM1104 300h1v1h-1zM1104 305h1v1h-1zM1104 310h1v1h-1zM1104 314h1v1h-1zM1104 319h1v1h-1zM1104 323h1v1h-1zM1104 328h1v1h-1zM1104 333h1v1h-1zM1104 337h1v1h-1zM1104 342h1v1h-1zM1104 347h1v1h-1zM1104 351h1v1h-1zM1104 356h1v1h-1zM1104 361h1v1h-1zM1104 365h1v1h-1zM1104 370h1v1h-1zM1104 375h1v1h-1zM1104 379h1v1h-1zM1104 384h1v1h-1zM1104 388h1v1h-1zM1104 393h1v1h-1zM1104 398h1v1h-1zM1104 402h1v1h-1zM1104 407h1v1h-1zM1104 412h1v1h-1zM1104 416h1v1h-1zM1104 421h1v1h-1zM1104 426h1v1h-1zM1104 430h1v1h-1zM1104 435h1v1h-1zM1104 439h1v1h-1zM1104 444h1v1h-1zM1104 449h1v1h-1zM1104 453h1v1h-1zM1104 458h1v1h-1zM1104 463h1v1h-1zM1104 467h1v1h-1zM1104 472h1v1h-1zM1104 477h1v1h-1zM1104 481h1v1h-1zM1104 486h1v1h-1zM1104 491h1v1h-1zM1104 495h1v1h-1zM1104 500h1v1h-1zM1104 504h1v1h-1zM1104 509h1v1h-1zM1104 514h1v1h-1zM1104 518h1v1h-1zM1279 291h1v1h-1zM1279 296h1v1h-1zM1279 300h1v1h-1zM1279 305h1v1h-1zM1279 310h1v1h-1zM1279 314h1v1h-1zM1279 319h1v1h-1zM1279 323h1v1h-1zM1279 328h1v1h-1zM1279 333h1v1h-1zM1279 337h1v1h-1zM1279 342h1v1h-1zM1279 347h1v1h-1zM1279 351h1v1h-1zM1279 356h1v1h-1zM1279 361h1v1h-1zM1279 365h1v1h-1zM1279 370h1v1h-1zM1279 375h1v1h-1zM1279 379h1v1h-1zM1279 384h1v1h-1zM1279 388h1v1h-1zM1279 393h1v1h-1zM1279 398h1v1h-1zM1279 402h1v1h-1zM1279 407h1v1h-1zM1279 412h1v1h-1zM1279 416h1v1h-1zM1279 421h1v1h-1zM1279 426h1v1h-1zM1279 430h1v1h-1zM1279 435h1v1h-1zM1279 439h1v1h-1zM1279 444h1v1h-1zM1279 449h1v1h-1zM1279 453h1v1h-1zM1279 458h1v1h-1zM1279 463h1v1h-1zM1279 467h1v1h-1zM1279 472h1v1h-1zM1279 477h1v1h-1zM1279 481h1v1h-1zM1279 486h1v1h-1zM1279 491h1v1h-1zM1279 495h1v1h-1zM1279 500h1v1h-1zM1279 504h1v1h-1zM1279 509h1v1h-1zM1279 514h1v1h-1zM1279 518h1v1h-1zM1454 291h1v1h-1zM1454 296h1v1h-1zM1454 300h1v1h-1zM1454 305h1v1h-1zM1454 310h1v1h-1zM1454 314h1v1h-1zM1454 319h1v1h-1zM1454 323h1v1h-1zM1454 328h1v1h-1zM1454 333h1v1h-1zM1454 337h1v1h-1zM1454 342h1v1h-1zM1454 347h1v1h-1zM1454 351h1v1h-1zM1454 356h1v1h-1zM1454 361h1v1h-1zM1454 365h1v1h-1zM1454 370h1v1h-1zM1454 375h1v1h-1zM1454 379h1v1h-1zM1454 384h1v1h-1zM1454 388h1v1h-1zM1454 393h1v1h-1zM1454 398h1v1h-1zM1454 402h1v1h-1zM1454 407h1v1h-1zM1454 412h1v1h-1zM1454 416h1v1h-1zM1454 421h1v1h-1zM1454 426h1v1h-1zM1454 430h1v1h-1zM1454 435h1v1h-1zM1454 439h1v1h-1zM1454 444h1v1h-1zM1454 449h1v1h-1zM1454 453h1v1h-1zM1454 458h1v1h-1zM1454 463h1v1h-1zM1454 467h1v1h-1zM1454 472h1v1h-1zM1454 477h1v1h-1zM1454 481h1v1h-1zM1454 486h1v1h-1zM1454 491h1v1h-1zM1454 495h1v1h-1zM1454 500h1v1h-1zM1454 504h1v1h-1zM1454 509h1v1h-1zM1454 514h1v1h-1zM1454 518h1v1h-1zM1629 291h1v1h-1zM1629 296h1v1h-1zM1629 300h1v1h-1zM1629 305h1v1h-1zM1629 310h1v1h-1zM1629 314h1v1h-1zM1629 319h1v1h-1zM1629 323h1v1h-1zM1629 328h1v1h-1zM1629 333h1v1h-1zM1629 337h1v1h-1zM1629 342h1v1h-1zM1629 347h1v1h-1zM1629 351h1v1h-1zM1629 356h1v1h-1zM1629 361h1v1h-1zM1629 365h1v1h-1zM1629 370h1v1h-1zM1629 375h1v1h-1zM1629 379h1v1h-1zM1629 384h1v1h-1zM1629 388h1v1h-1zM1629 393h1v1h-1zM1629 398h1v1h-1zM1629 402h1v1h-1zM1629 407h1v1h-1zM1629 412h1v1h-1zM1629 416h1v1h-1zM1629 421h1v1h-1zM1629 426h1v1h-1zM1629 430h1v1h-1zM1629 435h1v1h-1zM1629 439h1v1h-1zM1629 444h1v1h-1zM1629 449h1v1h-1zM1629 453h1v1h-1zM1629 458h1v1h-1zM1629 463h1v1h-1zM1629 467h1v1h-1zM1629 472h1v1h-1zM1629 477h1v1h-1zM1629 481h1v1h-1zM1629 486h1v1h-1zM1629 491h1v1h-1zM1629 495h1v1h-1zM1629 500h1v1h-1zM1629 504h1v1h-1zM1629 509h1v1h-1zM1629 514h1v1h-1zM1629 518h1v1h-1zM20 525h1v1h-1zM90 525h1v1h-1zM125 525h1v1h-1zM160 525h1v1h-1zM195 525h1v1h-1zM265 525h1v1h-1zM300 525h1v1h-1zM335 525h1v1h-1zM370 525h1v1h-1zM440 525h1v1h-1zM475 525h1v1h-1zM510 525h1v1h-1zM545 525h1v1h-1zM615 525h1v1h-1zM650 525h1v1h-1zM685 525h1v1h-1zM720 525h1v1h-1zM790 525h1v1h-1zM825 525h1v1h-1zM860 525h1v1h-1zM894 525h1v1h-1zM964 525h1v1h-1zM999 525h1v1h-1zM1034 525h1v1h-1zM1069 525h1v1h-1zM1139 525h1v1h-1zM1174 525h1v1h-1zM1209 525h1v1h-1zM1244 525h1v1h-1zM1314 525h1v1h-1zM1349 525h1v1h-1zM1384 525h1v1h-1zM1419 525h1v1h-1zM1489 525h1v1h-1zM1524 525h1v1h-1zM1559 525h1v1h-1zM1594 525h1v1h-1zM1664 525h1v1h-1zM1699 525h1v1h-1zM1734 525h1v1h-1zM20 548h1v1h-1zM90 548h1v1h-1zM125 548h1v1h-1zM160 548h1v1h-1zM195 548h1v1h-1zM265 548h1v1h-1zM300 548h1v1h-1zM335 548h1v1h-1zM370 548h1v1h-1zM440 548h1v1h-1zM475 548h1v1h-1zM510 548h1v1h-1zM545 548h1v1h-1zM615 548h1v1h-1zM650 548h1v1h-1zM685 548h1v1h-1zM720 548h1v1h-1zM790 548h1v1h-1zM825 548h1v1h-1zM860 548h1v1h-1zM894 548h1v1h-1zM964 548h1v1h-1zM999 548h1v1h-1zM1034 548h1v1h-1zM1069 548h1v1h-1zM1139 548h1v1h-1zM1174 548h1v1h-1zM1209 548h1v1h-1zM1244 548h1v1h-1zM1314 548h1v1h-1zM1349 548h1v1h-1zM1384 548h1v1h-1zM1419 548h1v1h-1zM1489 548h1v1h-1zM1524 548h1v1h-1zM1559 548h1v1h-1zM1594 548h1v1h-1zM1664 548h1v1h-1zM1699 548h1v1h-1zM1734 548h1v1h-1zM20 571h1v1h-1zM90 571h1v1h-1zM125 571h1v1h-1zM160 571h1v1h-1zM195 571h1v1h-1zM265 571h1v1h-1zM300 571h1v1h-1zM335 571h1v1h-1zM370 571h1v1h-1zM440 571h1v1h-1zM475 571h1v1h-1zM510 571h1v1h-1zM545 571h1v1h-1zM615 571h1v1h-1zM650 571h1v1h-1zM685 571h1v1h-1zM720 571h1v1h-1zM790 571h1v1h-1zM825 571h1v1h-1zM860 571h1v1h-1zM894 571h1v1h-1zM964 571h1v1h-1zM999 571h1v1h-1zM1034 571h1v1h-1zM1069 571h1v1h-1zM1139 571h1v1h-1zM1174 571h1v1h-1zM1209 571h1v1h-1zM1244 571h1v1h-1zM1314 571h1v1h-1zM1349 571h1v1h-1zM1384 571h1v1h-1zM1419 571h1v1h-1zM1489 571h1v1h-1zM1524 571h1v1h-1zM1559 571h1v1h-1zM1594 571h1v1h-1zM1664 571h1v1h-1zM1699 571h1v1h-1zM1734 571h1v1h-1zM20 595h1v1h-1zM90 595h1v1h-1zM125 595h1v1h-1zM160 595h1v1h-1zM195 595h1v1h-1zM265 595h1v1h-1zM300 595h1v1h-1zM335 595h1v1h-1zM370 595h1v1h-1zM440 595h1v1h-1zM475 595h1v1h-1zM510 595h1v1h-1zM545 595h1v1h-1zM615 595h1v1h-1zM650 595h1v1h-1zM685 595h1v1h-1zM720 595h1v1h-1zM790 595h1v1h-1zM825 595h1v1h-1zM860 595h1v1h-1zM894 595h1v1h-1zM964 595h1v1h-1zM999 595h1v1h-1zM1034 595h1v1h-1zM1069 595h1v1h-1zM1139 595h1v1h-1zM1174 595h1v1h-1zM1209 595h1v1h-1zM1244 595h1v1h-1zM1314 595h1v1h-1zM1349 595h1v1h-1zM1384 595h1v1h-1zM1419 595h1v1h-1zM1489 595h1v1h-1zM1524 595h1v1h-1zM1559 595h1v1h-1zM1594 595h1v1h-1zM1664 595h1v1h-1zM1699 595h1v1h-1zM1734 595h1v1h-1zM20 618h1v1h-1zM90 618h1v1h-1zM125 618h1v1h-1zM160 618h1v1h-1zM195 618h1v1h-1zM265 618h1v1h-1zM300 618h1v1h-1zM335 618h1v1h-1zM370 618h1v1h-1zM440 618h1v1h-1zM475 618h1v1h-1zM510 618h1v1h-1zM545 618h1v1h-1zM615 618h1v1h-1zM650 618h1v1h-1zM685 618h1v1h-1zM720 618h1v1h-1zM790 618h1v1h-1zM825 618h1v1h-1zM860 618h1v1h-1zM894 618h1v1h-1zM964 618h1v1h-1zM999 618h1v1h-1zM1034 618h1v1h-1zM1069 618h1v1h-1zM1139 618h1v1h-1zM1174 618h1v1h-1zM1209 618h1v1h-1zM1244 618h1v1h-1zM1314 618h1v1h-1zM1349 618h1v1h-1zM1384 618h1v1h-1zM1419 618h1v1h-1zM1489 618h1v1h-1zM1524 618h1v1h-1zM1559 618h1v1h-1zM1594 618h1v1h-1zM1664 618h1v1h-1zM1699 618h1v1h-1zM1734 618h1v1h-1zM20 641h1v1h-1zM90 641h1v1h-1zM125 641h1v1h-1zM160 641h1v1h-1zM195 641h1v1h-1zM265 641h1v1h-1zM300 641h1v1h-1zM335 641h1v1h-1zM370 641h1v1h-1zM440 641h1v1h-1zM475 641h1v1h-1zM510 641h1v1h-1zM545 641h1v1h-1zM615 641h1v1h-1zM650 641h1v1h-1zM685 641h1v1h-1zM720 641h1v1h-1zM790 641h1v1h-1zM825 641h1v1h-1zM860 641h1v1h-1zM894 641h1v1h-1zM964 641h1v1h-1zM999 641h1v1h-1zM1034 641h1v1h-1zM1069 641h1v1h-1zM1139 641h1v1h-1zM1174 641h1v1h-1zM1209 641h1v1h-1zM1244 641h1v1h-1zM1314 641h1v1h-1zM1349 641h1v1h-1zM1384 641h1v1h-1zM1419 641h1v1h-1zM1489 641h1v1h-1zM1524 641h1v1h-1zM1559 641h1v1h-1zM1594 641h1v1h-1zM1664 641h1v1h-1zM1699 641h1v1h-1zM1734 641h1v1h-1zM20 664h1v1h-1zM90 664h1v1h-1zM125 664h1v1h-1zM160 664h1v1h-1zM195 664h1v1h-1zM265 664h1v1h-1zM300 664h1v1h-1zM335 664h1v1h-1zM370 664h1v1h-1zM440 664h1v1h-1zM475 664h1v1h-1zM510 664h1v1h-1zM545 664h1v1h-1zM615 664h1v1h-1zM650 664h1v1h-1zM685 664h1v1h-1zM720 664h1v1h-1zM790 664h1v1h-1zM825 664h1v1h-1zM860 664h1v1h-1zM894 664h1v1h-1zM964 664h1v1h-1zM999 664h1v1h-1zM1034 664h1v1h-1zM1069 664h1v1h-1zM1139 664h1v1h-1zM1174 664h1v1h-1zM1209 664h1v1h-1zM1244 664h1v1h-1zM1314 664h1v1h-1zM1349 664h1v1h-1zM1384 664h1v1h-1zM1419 664h1v1h-1zM1489 664h1v1h-1zM1524 664h1v1h-1zM1559 664h1v1h-1zM1594 664h1v1h-1zM1664 664h1v1h-1zM1699 664h1v1h-1zM1734 664h1v1h-1zM20 687h1v1h-1zM90 687h1v1h-1zM125 687h1v1h-1zM160 687h1v1h-1zM195 687h1v1h-1zM265 687h1v1h-1zM300 687h1v1h-1zM335 687h1v1h-1zM370 687h1v1h-1zM440 687h1v1h-1zM475 687h1v1h-1zM510 687h1v1h-1zM545 687h1v1h-1zM615 687h1v1h-1zM650 687h1v1h-1zM685 687h1v1h-1zM720 687h1v1h-1zM790 687h1v1h-1zM825 687h1v1h-1zM860 687h1v1h-1zM894 687h1v1h-1zM964 687h1v1h-1zM999 687h1v1h-1zM1034 687h1v1h-1zM1069 687h1v1h-1zM1139 687h1v1h-1zM1174 687h1v1h-1zM1209 687h1v1h-1zM1244 687h1v1h-1zM1314 687h1v1h-1zM1349 687h1v1h-1zM1384 687h1v1h-1zM1419 687h1v1h-1zM1489 687h1v1h-1zM1524 687h1v1h-1zM1559 687h1v1h-1zM1594 687h1v1h-1zM1664 687h1v1h-1zM1699 687h1v1h-1zM1734 687h1v1h-1zM20 711h1v1h-1zM90 711h1v1h-1zM125 711h1v1h-1zM160 711h1v1h-1zM195 711h1v1h-1zM265 711h1v1h-1zM300 711h1v1h-1zM335 711h1v1h-1zM370 711h1v1h-1zM440 711h1v1h-1zM475 711h1v1h-1zM510 711h1v1h-1zM545 711h1v1h-1zM615 711h1v1h-1zM650 711h1v1h-1zM685 711h1v1h-1zM720 711h1v1h-1zM790 711h1v1h-1zM825 711h1v1h-1zM860 711h1v1h-1zM894 711h1v1h-1zM964 711h1v1h-1zM999 711h1v1h-1zM1034 711h1v1h-1zM1069 711h1v1h-1zM1139 711h1v1h-1zM1174 711h1v1h-1zM1209 711h1v1h-1zM1244 711h1v1h-1zM1314 711h1v1h-1zM1349 711h1v1h-1zM1384 711h1v1h-1zM1419 711h1v1h-1zM1489 711h1v1h-1zM1524 711h1v1h-1zM1559 711h1v1h-1zM1594 711h1v1h-1zM1664 711h1v1h-1zM1699 711h1v1h-1zM1734 711h1v1h-1zM230 525h1v1h-1zM230 530h1v1h-1zM230 534h1v1h-1zM230 539h1v1h-1zM230 544h1v1h-1zM230 548h1v1h-1zM230 553h1v1h-1zM230 557h1v1h-1zM230 562h1v1h-1zM230 567h1v1h-1zM230 571h1v1h-1zM230 576h1v1h-1zM230 581h1v1h-1zM230 585h1v1h-1zM230 590h1v1h-1zM230 595h1v1h-1zM230 599h1v1h-1zM230 604h1v1h-1zM230 609h1v1h-1zM230 613h1v1h-1zM230 618h1v1h-1zM230 622h1v1h-1zM230 627h1v1h-1zM230 632h1v1h-1zM230 636h1v1h-1zM230 641h1v1h-1zM230 646h1v1h-1zM230 650h1v1h-1zM230 655h1v1h-1zM230 660h1v1h-1zM230 664h1v1h-1zM230 669h1v1h-1zM230 673h1v1h-1zM230 678h1v1h-1zM230 683h1v1h-1zM230 687h1v1h-1zM230 692h1v1h-1zM230 697h1v1h-1zM230 701h1v1h-1zM230 706h1v1h-1zM230 711h1v1h-1zM230 715h1v1h-1zM230 720h1v1h-1zM230 725h1v1h-1zM230 729h1v1h-1zM230 734h1v1h-1zM230 738h1v1h-1zM230 743h1v1h-1zM230 748h1v1h-1zM230 752h1v1h-1zM405 525h1v1h-1zM405 530h1v1h-1zM405 534h1v1h-1zM405 539h1v1h-1zM405 544h1v1h-1zM405 548h1v1h-1zM405 553h1v1h-1zM405 557h1v1h-1zM405 562h1v1h-1zM405 567h1v1h-1zM405 571h1v1h-1zM405 576h1v1h-1zM405 581h1v1h-1zM405 585h1v1h-1zM405 590h1v1h-1zM405 595h1v1h-1zM405 599h1v1h-1zM405 604h1v1h-1zM405 609h1v1h-1zM405 613h1v1h-1zM405 618h1v1h-1zM405 622h1v1h-1zM405 627h1v1h-1zM405 632h1v1h-1zM405 636h1v1h-1zM405 641h1v1h-1zM405 646h1v1h-1zM405 650h1v1h-1zM405 655h1v1h-1zM405 660h1v1h-1zM405 664h1v1h-1zM405 669h1v1h-1zM405 673h1v1h-1zM405 678h1v1h-1zM405 683h1v1h-1zM405 687h1v1h-1zM405 692h1v1h-1zM405 697h1v1h-1zM405 701h1v1h-1zM405 706h1v1h-1zM405 711h1v1h-1zM405 715h1v1h-1zM405 720h1v1h-1zM405 725h1v1h-1zM405 729h1v1h-1zM405 734h1v1h-1zM405 738h1v1h-1zM405 743h1v1h-1zM405 748h1v1h-1zM405 752h1v1h-1zM580 525h1v1h-1zM580 530h1v1h-1zM580 534h1v1h-1zM580 539h1v1h-1zM580 544h1v1h-1zM580 548h1v1h-1zM580 553h1v1h-1zM580 557h1v1h-1zM580 562h1v1h-1zM580 567h1v1h-1zM580 571h1v1h-1zM580 576h1v1h-1zM580 581h1v1h-1zM580 585h1v1h-1zM580 590h1v1h-1zM580 595h1v1h-1zM580 599h1v1h-1zM580 604h1v1h-1zM580 609h1v1h-1zM580 613h1v1h-1zM580 618h1v1h-1zM580 622h1v1h-1zM580 627h1v1h-1zM580 632h1v1h-1zM580 636h1v1h-1zM580 641h1v1h-1zM580 646h1v1h-1zM580 650h1v1h-1zM580 655h1v1h-1zM580 660h1v1h-1zM580 664h1v1h-1zM580 669h1v1h-1zM580 673h1v1h-1zM580 678h1v1h-1zM580 683h1v1h-1zM580 687h1v1h-1zM580 692h1v1h-1zM580 697h1v1h-1zM580 701h1v1h-1zM580 706h1v1h-1zM580 711h1v1h-1zM580 715h1v1h-1zM580 720h1v1h-1zM580 725h1v1h-1zM580 729h1v1h-1zM580 734h1v1h-1zM580 738h1v1h-1zM580 743h1v1h-1zM580 748h1v1h-1zM580 752h1v1h-1zM755 525h1v1h-1zM755 530h1v1h-1zM755 534h1v1h-1zM755 539h1v1h-1zM755 544h1v1h-1zM755 548h1v1h-1zM755 553h1v1h-1zM755 557h1v1h-1zM755 562h1v1h-1zM755 567h1v1h-1zM755 571h1v1h-1zM755 576h1v1h-1zM755 581h1v1h-1zM755 585h1v1h-1zM755 590h1v1h-1zM755 595h1v1h-1zM755 599h1v1h-1zM755 604h1v1h-1zM755 609h1v1h-1zM755 613h1v1h-1zM755 618h1v1h-1zM755 622h1v1h-1zM755 627h1v1h-1zM755 632h1v1h-1zM755 636h1v1h-1zM755 641h1v1h-1zM755 646h1v1h-1zM755 650h1v1h-1zM755 655h1v1h-1zM755 660h1v1h-1zM755 664h1v1h-1zM755 669h1v1h-1zM755 673h1v1h-1zM755 678h1v1h-1zM755 683h1v1h-1zM755 687h1v1h-1zM755 692h1v1h-1zM755 697h1v1h-1zM755 701h1v1h-1zM755 706h1v1h-1zM755 711h1v1h-1zM755 715h1v1h-1zM755 720h1v1h-1zM755 725h1v1h-1zM755 729h1v1h-1zM755 734h1v1h-1zM755 738h1v1h-1zM755 743h1v1h-1zM755 748h1v1h-1zM755 752h1v1h-1zM929 525h1v1h-1zM929 530h1v1h-1zM929 534h1v1h-1zM929 539h1v1h-1zM929 544h1v1h-1zM929 548h1v1h-1zM929 553h1v1h-1zM929 557h1v1h-1zM929 562h1v1h-1zM929 567h1v1h-1zM929 571h1v1h-1zM929 576h1v1h-1zM929 581h1v1h-1zM929 585h1v1h-1zM929 590h1v1h-1zM929 595h1v1h-1zM929 599h1v1h-1zM929 604h1v1h-1zM929 609h1v1h-1zM929 613h1v1h-1zM929 618h1v1h-1zM929 622h1v1h-1zM929 627h1v1h-1zM929 632h1v1h-1zM929 636h1v1h-1zM929 641h1v1h-1zM929 646h1v1h-1zM929 650h1v1h-1zM929 655h1v1h-1zM929 660h1v1h-1zM929 664h1v1h-1zM929 669h1v1h-1zM929 673h1v1h-1zM929 678h1v1h-1zM929 683h1v1h-1zM929 687h1v1h-1zM929 692h1v1h-1zM929 697h1v1h-1zM929 701h1v1h-1zM929 706h1v1h-1zM929 711h1v1h-1zM929 715h1v1h-1zM929 720h1v1h-1zM929 725h1v1h-1zM929 729h1v1h-1zM929 734h1v1h-1zM929 738h1v1h-1zM929 743h1v1h-1zM929 748h1v1h-1zM929 752h1v1h-1zM1104 525h1v1h-1zM1104 530h1v1h-1zM1104 534h1v1h-1zM1104 539h1v1h-1zM1104 544h1v1h-1zM1104 548h1v1h-1zM1104 553h1v1h-1zM1104 557h1v1h-1zM1104 562h1v1h-1zM1104 567h1v1h-1zM1104 571h1v1h-1zM1104 576h1v1h-1zM1104 581h1v1h-1zM1104 585h1v1h-1zM1104 590h1v1h-1zM1104 595h1v1h-1zM1104 599h1v1h-1zM1104 604h1v1h-1zM1104 609h1v1h-1zM1104 613h1v1h-1zM1104 618h1v1h-1zM1104 622h1v1h-1zM1104 627h1v1h-1zM1104 632h1v1h-1zM1104 636h1v1h-1zM1104 641h1v1h-1zM1104 646h1v1h-1zM1104 650h1v1h-1zM1104 655h1v1h-1zM1104 660h1v1h-1zM1104 664h1v1h-1zM1104 669h1v1h-1zM1104 673h1v1h-1zM1104 678h1v1h-1zM1104 683h1v1h-1zM1104 687h1v1h-1zM1104 692h1v1h-1zM1104 697h1v1h-1zM1104 701h1v1h-1zM1104 706h1v1h-1zM1104 711h1v1h-1zM1104 715h1v1h-1zM1104 720h1v1h-1zM1104 725h1v1h-1zM1104 729h1v1h-1zM1104 734h1v1h-1zM1104 738h1v1h-1zM1104 743h1v1h-1zM1104 748h1v1h-1zM1104 752h1v1h-1zM1279 525h1v1h-1zM1279 530h1v1h-1zM1279 534h1v1h-1zM1279 539h1v1h-1zM1279 544h1v1h-1zM1279 548h1v1h-1zM1279 553h1v1h-1zM1279 557h1v1h-1zM1279 562h1v1h-1zM1279 567h1v1h-1zM1279 571h1v1h-1zM1279 576h1v1h-1zM1279 581h1v1h-1zM1279 585h1v1h-1zM1279 590h1v1h-1zM1279 595h1v1h-1zM1279 599h1v1h-1zM1279 604h1v1h-1zM1279 609h1v1h-1zM1279 613h1v1h-1zM1279 618h1v1h-1zM1279 622h1v1h-1zM1279 627h1v1h-1zM1279 632h1v1h-1zM1279 636h1v1h-1zM1279 641h1v1h-1zM1279 646h1v1h-1zM1279 650h1v1h-1zM1279 655h1v1h-1zM1279 660h1v1h-1zM1279 664h1v1h-1zM1279 669h1v1h-1zM1279 673h1v1h-1zM1279 678h1v1h-1zM1279 683h1v1h-1zM1279 687h1v1h-1zM1279 692h1v1h-1zM1279 697h1v1h-1zM1279 701h1v1h-1zM1279 706h1v1h-1zM1279 711h1v1h-1zM1279 715h1v1h-1zM1279 720h1v1h-1zM1279 725h1v1h-1zM1279 729h1v1h-1zM1279 734h1v1h-1zM1279 738h1v1h-1zM1279 743h1v1h-1zM1279 748h1v1h-1zM1279 752h1v1h-1zM1454 525h1v1h-1zM1454 530h1v1h-1zM1454 534h1v1h-1zM1454 539h1v1h-1zM1454 544h1v1h-1zM1454 548h1v1h-1zM1454 553h1v1h-1zM1454 557h1v1h-1zM1454 562h1v1h-1zM1454 567h1v1h-1zM1454 571h1v1h-1zM1454 576h1v1h-1zM1454 581h1v1h-1zM1454 585h1v1h-1zM1454 590h1v1h-1zM1454 595h1v1h-1zM1454 599h1v1h-1zM1454 604h1v1h-1zM1454 609h1v1h-1zM1454 613h1v1h-1zM1454 618h1v1h-1zM1454 622h1v1h-1zM1454 627h1v1h-1zM1454 632h1v1h-1zM1454 636h1v1h-1zM1454 641h1v1h-1zM1454 646h1v1h-1zM1454 650h1v1h-1zM1454 655h1v1h-1zM1454 660h1v1h-1zM1454 664h1v1h-1zM1454 669h1v1h-1zM1454 673h1v1h-1zM1454 678h1v1h-1zM1454 683h1v1h-1zM1454 687h1v1h-1zM1454 692h1v1h-1zM1454 697h1v1h-1zM1454 701h1v1h-1zM1454 706h1v1h-1zM1454 711h1v1h-1zM1454 715h1v1h-1zM1454 720h1v1h-1zM1454 725h1v1h-1zM1454 729h1v1h-1zM1454 734h1v1h-1zM1454 738h1v1h-1zM1454 743h1v1h-1zM1454 748h1v1h-1zM1454 752h1v1h-1zM1629 525h1v1h-1zM1629 530h1v1h-1zM1629 534h1v1h-1zM1629 539h1v1h-1zM1629 544h1v1h-1zM1629 548h1v1h-1zM1629 553h1v1h-1zM1629 557h1v1h-1zM1629 562h1v1h-1zM1629 567h1v1h-1zM1629 571h1v1h-1zM1629 576h1v1h-1zM1629 581h1v1h-1zM1629 585h1v1h-1zM1629 590h1v1h-1zM1629 595h1v1h-1zM1629 599h1v1h-1zM1629 604h1v1h-1zM1629 609h1v1h-1zM1629 613h1v1h-1zM1629 618h1v1h-1zM1629 622h1v1h-1zM1629 627h1v1h-1zM1629 632h1v1h-1zM1629 636h1v1h-1zM1629 641h1v1h-1zM1629 646h1v1h-1zM1629 650h1v1h-1zM1629 655h1v1h-1zM1629 660h1v1h-1zM1629 664h1v1h-1zM1629 669h1v1h-1zM1629 673h1v1h-1zM1629 678h1v1h-1zM1629 683h1v1h-1zM1629 687h1v1h-1zM1629 692h1v1h-1zM1629 697h1v1h-1zM1629 701h1v1h-1zM1629 706h1v1h-1zM1629 711h1v1h-1zM1629 715h1v1h-1zM1629 720h1v1h-1zM1629 725h1v1h-1zM1629 729h1v1h-1zM1629 734h1v1h-1zM1629 738h1v1h-1zM1629 743h1v1h-1zM1629 748h1v1h-1zM1629 752h1v1h-1zM20 774h1v1h-1zM90 774h1v1h-1zM125 774h1v1h-1zM160 774h1v1h-1zM195 774h1v1h-1zM265 774h1v1h-1zM300 774h1v1h-1zM335 774h1v1h-1zM370 774h1v1h-1zM440 774h1v1h-1zM475 774h1v1h-1zM510 774h1v1h-1zM545 774h1v1h-1zM615 774h1v1h-1zM650 774h1v1h-1zM685 774h1v1h-1zM720 774h1v1h-1zM790 774h1v1h-1zM825 774h1v1h-1zM860 774h1v1h-1zM894 774h1v1h-1zM964 774h1v1h-1zM999 774h1v1h-1zM1034 774h1v1h-1zM1069 774h1v1h-1zM1139 774h1v1h-1zM1174 774h1v1h-1zM1209 774h1v1h-1zM1244 774h1v1h-1zM1314 774h1v1h-1zM1349 774h1v1h-1zM1384 774h1v1h-1zM1419 774h1v1h-1zM1489 774h1v1h-1zM1524 774h1v1h-1zM1559 774h1v1h-1zM1594 774h1v1h-1zM1664 774h1v1h-1zM1699 774h1v1h-1zM1734 774h1v1h-1zM20 797h1v1h-1zM90 797h1v1h-1zM125 797h1v1h-1zM160 797h1v1h-1zM195 797h1v1h-1zM265 797h1v1h-1zM300 797h1v1h-1zM335 797h1v1h-1zM370 797h1v1h-1zM440 797h1v1h-1zM475 797h1v1h-1zM510 797h1v1h-1zM545 797h1v1h-1zM615 797h1v1h-1zM650 797h1v1h-1zM685 797h1v1h-1zM720 797h1v1h-1zM790 797h1v1h-1zM825 797h1v1h-1zM860 797h1v1h-1zM894 797h1v1h-1zM964 797h1v1h-1zM999 797h1v1h-1zM1034 797h1v1h-1zM1069 797h1v1h-1zM1139 797h1v1h-1zM1174 797h1v1h-1zM1209 797h1v1h-1zM1244 797h1v1h-1zM1314 797h1v1h-1zM1349 797h1v1h-1zM1384 797h1v1h-1zM1419 797h1v1h-1zM1489 797h1v1h-1zM1524 797h1v1h-1zM1559 797h1v1h-1zM1594 797h1v1h-1zM1664 797h1v1h-1zM1699 797h1v1h-1zM1734 797h1v1h-1zM20 844h1v1h-1zM90 844h1v1h-1zM125 844h1v1h-1zM160 844h1v1h-1zM195 844h1v1h-1zM265 844h1v1h-1zM300 844h1v1h-1zM335 844h1v1h-1zM370 844h1v1h-1zM440 844h1v1h-1zM475 844h1v1h-1zM510 844h1v1h-1zM545 844h1v1h-1zM615 844h1v1h-1zM650 844h1v1h-1zM685 844h1v1h-1zM720 844h1v1h-1zM790 844h1v1h-1zM825 844h1v1h-1zM860 844h1v1h-1zM894 844h1v1h-1zM964 844h1v1h-1zM999 844h1v1h-1zM1034 844h1v1h-1zM1069 844h1v1h-1zM1139 844h1v1h-1zM1174 844h1v1h-1zM1209 844h1v1h-1zM1244 844h1v1h-1zM1314 844h1v1h-1zM1349 844h1v1h-1zM1384 844h1v1h-1zM1419 844h1v1h-1zM1489 844h1v1h-1zM1524 844h1v1h-1zM1559 844h1v1h-1zM1594 844h1v1h-1zM1664 844h1v1h-1zM1699 844h1v1h-1zM1734 844h1v1h-1zM20 867h1v1h-1zM90 867h1v1h-1zM125 867h1v1h-1zM160 867h1v1h-1zM195 867h1v1h-1zM265 867h1v1h-1zM300 867h1v1h-1zM335 867h1v1h-1zM370 867h1v1h-1zM440 867h1v1h-1zM475 867h1v1h-1zM510 867h1v1h-1zM545 867h1v1h-1zM615 867h1v1h-1zM650 867h1v1h-1zM685 867h1v1h-1zM720 867h1v1h-1zM790 867h1v1h-1zM825 867h1v1h-1zM860 867h1v1h-1zM894 867h1v1h-1zM964 867h1v1h-1zM999 867h1v1h-1zM1034 867h1v1h-1zM1069 867h1v1h-1zM1139 867h1v1h-1zM1174 867h1v1h-1zM1209 867h1v1h-1zM1244 867h1v1h-1zM1314 867h1v1h-1zM1349 867h1v1h-1zM1384 867h1v1h-1zM1419 867h1v1h-1zM1489 867h1v1h-1zM1524 867h1v1h-1zM1559 867h1v1h-1zM1594 867h1v1h-1zM1664 867h1v1h-1zM1699 867h1v1h-1zM1734 867h1v1h-1zM20 890h1v1h-1zM90 890h1v1h-1zM125 890h1v1h-1zM160 890h1v1h-1zM195 890h1v1h-1zM265 890h1v1h-1zM300 890h1v1h-1zM335 890h1v1h-1zM370 890h1v1h-1zM440 890h1v1h-1zM475 890h1v1h-1zM510 890h1v1h-1zM545 890h1v1h-1zM615 890h1v1h-1zM650 890h1v1h-1zM685 890h1v1h-1zM720 890h1v1h-1zM790 890h1v1h-1zM825 890h1v1h-1zM860 890h1v1h-1zM894 890h1v1h-1zM964 890h1v1h-1zM999 890h1v1h-1zM1034 890h1v1h-1zM1069 890h1v1h-1zM1139 890h1v1h-1zM1174 890h1v1h-1zM1209 890h1v1h-1zM1244 890h1v1h-1zM1314 890h1v1h-1zM1349 890h1v1h-1zM1384 890h1v1h-1zM1419 890h1v1h-1zM1489 890h1v1h-1zM1524 890h1v1h-1zM1559 890h1v1h-1zM1594 890h1v1h-1zM1664 890h1v1h-1zM1699 890h1v1h-1zM1734 890h1v1h-1zM20 914h1v1h-1zM90 914h1v1h-1zM125 914h1v1h-1zM160 914h1v1h-1zM195 914h1v1h-1zM265 914h1v1h-1zM300 914h1v1h-1zM335 914h1v1h-1zM370 914h1v1h-1zM440 914h1v1h-1zM475 914h1v1h-1zM510 914h1v1h-1zM545 914h1v1h-1zM615 914h1v1h-1zM650 914h1v1h-1zM685 914h1v1h-1zM720 914h1v1h-1zM790 914h1v1h-1zM825 914h1v1h-1zM860 914h1v1h-1zM894 914h1v1h-1zM964 914h1v1h-1zM999 914h1v1h-1zM1034 914h1v1h-1zM1069 914h1v1h-1zM1139 914h1v1h-1zM1174 914h1v1h-1zM1209 914h1v1h-1zM1244 914h1v1h-1zM1314 914h1v1h-1zM1349 914h1v1h-1zM1384 914h1v1h-1zM1419 914h1v1h-1zM1489 914h1v1h-1zM1524 914h1v1h-1zM1559 914h1v1h-1zM1594 914h1v1h-1zM1664 914h1v1h-1zM1699 914h1v1h-1zM1734 914h1v1h-1zM20 937h1v1h-1zM90 937h1v1h-1zM125 937h1v1h-1zM160 937h1v1h-1zM195 937h1v1h-1zM265 937h1v1h-1zM300 937h1v1h-1zM335 937h1v1h-1zM370 937h1v1h-1zM440 937h1v1h-1zM475 937h1v1h-1zM510 937h1v1h-1zM545 937h1v1h-1zM615 937h1v1h-1zM650 937h1v1h-1zM685 937h1v1h-1zM720 937h1v1h-1zM790 937h1v1h-1zM825 937h1v1h-1zM860 937h1v1h-1zM894 937h1v1h-1zM964 937h1v1h-1zM999 937h1v1h-1zM1034 937h1v1h-1zM1069 937h1v1h-1zM1139 937h1v1h-1zM1174 937h1v1h-1zM1209 937h1v1h-1zM1244 937h1v1h-1zM1314 937h1v1h-1zM1349 937h1v1h-1zM1384 937h1v1h-1zM1419 937h1v1h-1zM1489 937h1v1h-1zM1524 937h1v1h-1zM1559 937h1v1h-1zM1594 937h1v1h-1zM1664 937h1v1h-1zM1699 937h1v1h-1zM1734 937h1v1h-1zM20 960h1v1h-1zM90 960h1v1h-1zM125 960h1v1h-1zM160 960h1v1h-1zM195 960h1v1h-1zM265 960h1v1h-1zM300 960h1v1h-1zM335 960h1v1h-1zM370 960h1v1h-1zM440 960h1v1h-1zM475 960h1v1h-1zM510 960h1v1h-1zM545 960h1v1h-1zM615 960h1v1h-1zM650 960h1v1h-1zM685 960h1v1h-1zM720 960h1v1h-1zM790 960h1v1h-1zM825 960h1v1h-1zM860 960h1v1h-1zM894 960h1v1h-1zM964 960h1v1h-1zM999 960h1v1h-1zM1034 960h1v1h-1zM1069 960h1v1h-1zM1139 960h1v1h-1zM1174 960h1v1h-1zM1209 960h1v1h-1zM1244 960h1v1h-1zM1314 960h1v1h-1zM1349 960h1v1h-1zM1384 960h1v1h-1zM1419 960h1v1h-1zM1489 960h1v1h-1zM1524 960h1v1h-1zM1559 960h1v1h-1zM1594 960h1v1h-1zM1664 960h1v1h-1zM1699 960h1v1h-1zM1734 960h1v1h-1zM20 984h1v1h-1zM90 984h1v1h-1zM125 984h1v1h-1zM160 984h1v1h-1zM195 984h1v1h-1zM265 984h1v1h-1zM300 984h1v1h-1zM335 984h1v1h-1zM370 984h1v1h-1zM440 984h1v1h-1zM475 984h1v1h-1zM510 984h1v1h-1zM545 984h1v1h-1zM615 984h1v1h-1zM650 984h1v1h-1zM685 984h1v1h-1zM720 984h1v1h-1zM790 984h1v1h-1zM825 984h1v1h-1zM860 984h1v1h-1zM894 984h1v1h-1zM964 984h1v1h-1zM999 984h1v1h-1zM1034 984h1v1h-1zM1069 984h1v1h-1zM1139 984h1v1h-1zM1174 984h1v1h-1zM1209 984h1v1h-1zM1244 984h1v1h-1zM1314 984h1v1h-1zM1349 984h1v1h-1zM1384 984h1v1h-1zM1419 984h1v1h-1zM1489 984h1v1h-1zM1524 984h1v1h-1zM1559 984h1v1h-1zM1594 984h1v1h-1zM1664 984h1v1h-1zM1699 984h1v1h-1zM1734 984h1v1h-1zM230 760h1v1h-1zM230 765h1v1h-1zM230 769h1v1h-1zM230 774h1v1h-1zM230 779h1v1h-1zM230 783h1v1h-1zM230 788h1v1h-1zM230 793h1v1h-1zM230 797h1v1h-1zM230 802h1v1h-1zM230 807h1v1h-1zM230 811h1v1h-1zM230 816h1v1h-1zM230 821h1v1h-1zM230 825h1v1h-1zM230 830h1v1h-1zM230 835h1v1h-1zM230 839h1v1h-1zM230 844h1v1h-1zM230 849h1v1h-1zM230 853h1v1h-1zM230 858h1v1h-1zM230 863h1v1h-1zM230 867h1v1h-1zM230 872h1v1h-1zM230 876h1v1h-1zM230 881h1v1h-1zM230 886h1v1h-1zM230 890h1v1h-1zM230 895h1v1h-1zM230 900h1v1h-1zM230 904h1v1h-1zM230 909h1v1h-1zM230 914h1v1h-1zM230 918h1v1h-1zM230 923h1v1h-1zM230 928h1v1h-1zM230 932h1v1h-1zM230 937h1v1h-1zM230 942h1v1h-1zM230 946h1v1h-1zM230 951h1v1h-1zM230 956h1v1h-1zM230 960h1v1h-1zM230 965h1v1h-1zM230 970h1v1h-1zM230 974h1v1h-1zM230 984h1v1h-1zM405 760h1v1h-1zM405 765h1v1h-1zM405 769h1v1h-1zM405 774h1v1h-1zM405 779h1v1h-1zM405 783h1v1h-1zM405 788h1v1h-1zM405 793h1v1h-1zM405 797h1v1h-1zM405 802h1v1h-1zM405 807h1v1h-1zM405 811h1v1h-1zM405 816h1v1h-1zM405 821h1v1h-1zM405 825h1v1h-1zM405 830h1v1h-1zM405 835h1v1h-1zM405 839h1v1h-1zM405 844h1v1h-1zM405 849h1v1h-1zM405 853h1v1h-1zM405 858h1v1h-1zM405 863h1v1h-1zM405 867h1v1h-1zM405 872h1v1h-1zM405 876h1v1h-1zM405 881h1v1h-1zM405 886h1v1h-1zM405 890h1v1h-1zM405 895h1v1h-1zM405 900h1v1h-1zM405 904h1v1h-1zM405 909h1v1h-1zM405 914h1v1h-1zM405 918h1v1h-1zM405 923h1v1h-1zM405 928h1v1h-1zM405 932h1v1h-1zM405 937h1v1h-1zM405 942h1v1h-1zM405 946h1v1h-1zM405 951h1v1h-1zM405 956h1v1h-1zM405 960h1v1h-1zM405 965h1v1h-1zM405 970h1v1h-1zM405 974h1v1h-1zM405 984h1v1h-1zM580 760h1v1h-1zM580 765h1v1h-1zM580 769h1v1h-1zM580 774h1v1h-1zM580 779h1v1h-1zM580 783h1v1h-1zM580 788h1v1h-1zM580 793h1v1h-1zM580 797h1v1h-1zM580 802h1v1h-1zM580 807h1v1h-1zM580 811h1v1h-1zM580 816h1v1h-1zM580 821h1v1h-1zM580 825h1v1h-1zM580 830h1v1h-1zM580 835h1v1h-1zM580 839h1v1h-1zM580 844h1v1h-1zM580 849h1v1h-1zM580 853h1v1h-1zM580 858h1v1h-1zM580 863h1v1h-1zM580 867h1v1h-1zM580 872h1v1h-1zM580 876h1v1h-1zM580 881h1v1h-1zM580 886h1v1h-1zM580 890h1v1h-1zM580 895h1v1h-1zM580 900h1v1h-1zM580 904h1v1h-1zM580 909h1v1h-1zM580 914h1v1h-1zM580 918h1v1h-1zM580 923h1v1h-1zM580 928h1v1h-1zM580 932h1v1h-1zM580 937h1v1h-1zM580 942h1v1h-1zM580 946h1v1h-1zM580 951h1v1h-1zM580 956h1v1h-1zM580 960h1v1h-1zM580 965h1v1h-1zM580 970h1v1h-1zM580 974h1v1h-1zM580 984h1v1h-1zM755 760h1v1h-1zM755 765h1v1h-1zM755 769h1v1h-1zM755 774h1v1h-1zM755 779h1v1h-1zM755 783h1v1h-1zM755 788h1v1h-1zM755 793h1v1h-1zM755 797h1v1h-1zM755 802h1v1h-1zM755 807h1v1h-1zM755 811h1v1h-1zM755 816h1v1h-1zM755 821h1v1h-1zM755 825h1v1h-1zM755 830h1v1h-1zM755 835h1v1h-1zM755 839h1v1h-1zM755 844h1v1h-1zM755 849h1v1h-1zM755 853h1v1h-1zM755 858h1v1h-1zM755 863h1v1h-1zM755 867h1v1h-1zM755 872h1v1h-1zM755 876h1v1h-1zM755 881h1v1h-1zM755 886h1v1h-1zM755 890h1v1h-1zM755 895h1v1h-1zM755 900h1v1h-1zM755 904h1v1h-1zM755 909h1v1h-1zM755 914h1v1h-1zM755 918h1v1h-1zM755 923h1v1h-1zM755 928h1v1h-1zM755 932h1v1h-1zM755 937h1v1h-1zM755 942h1v1h-1zM755 946h1v1h-1zM755 951h1v1h-1zM755 956h1v1h-1zM755 960h1v1h-1zM755 965h1v1h-1zM755 970h1v1h-1zM755 974h1v1h-1zM755 984h1v1h-1zM929 760h1v1h-1zM929 765h1v1h-1zM929 769h1v1h-1zM929 774h1v1h-1zM929 779h1v1h-1zM929 783h1v1h-1zM929 788h1v1h-1zM929 793h1v1h-1zM929 797h1v1h-1zM929 802h1v1h-1zM929 807h1v1h-1zM929 811h1v1h-1zM929 816h1v1h-1zM929 821h1v1h-1zM929 825h1v1h-1zM929 830h1v1h-1zM929 835h1v1h-1zM929 839h1v1h-1zM929 844h1v1h-1zM929 849h1v1h-1zM929 853h1v1h-1zM929 858h1v1h-1zM929 863h1v1h-1zM929 867h1v1h-1zM929 872h1v1h-1zM929 876h1v1h-1zM929 881h1v1h-1zM929 886h1v1h-1zM929 890h1v1h-1zM929 895h1v1h-1zM929 900h1v1h-1zM929 904h1v1h-1zM929 909h1v1h-1zM929 914h1v1h-1zM929 918h1v1h-1zM929 923h1v1h-1zM929 928h1v1h-1zM929 932h1v1h-1zM929 937h1v1h-1zM929 942h1v1h-1zM929 946h1v1h-1zM929 951h1v1h-1zM929 956h1v1h-1zM929 960h1v1h-1zM929 965h1v1h-1zM929 970h1v1h-1zM929 974h1v1h-1zM929 984h1v1h-1zM1104 760h1v1h-1zM1104 765h1v1h-1zM1104 769h1v1h-1zM1104 774h1v1h-1zM1104 779h1v1h-1zM1104 783h1v1h-1zM1104 788h1v1h-1zM1104 793h1v1h-1zM1104 797h1v1h-1zM1104 802h1v1h-1zM1104 807h1v1h-1zM1104 811h1v1h-1zM1104 816h1v1h-1zM1104 821h1v1h-1zM1104 825h1v1h-1zM1104 830h1v1h-1zM1104 835h1v1h-1zM1104 839h1v1h-1zM1104 844h1v1h-1zM1104 849h1v1h-1zM1104 853h1v1h-1zM1104 858h1v1h-1zM1104 863h1v1h-1zM1104 867h1v1h-1zM1104 872h1v1h-1zM1104 876h1v1h-1zM1104 881h1v1h-1zM1104 886h1v1h-1zM1104 890h1v1h-1zM1104 895h1v1h-1zM1104 900h1v1h-1zM1104 904h1v1h-1zM1104 909h1v1h-1zM1104 914h1v1h-1zM1104 918h1v1h-1zM1104 923h1v1h-1zM1104 928h1v1h-1zM1104 932h1v1h-1zM1104 937h1v1h-1zM1104 942h1v1h-1zM1104 946h1v1h-1zM1104 951h1v1h-1zM1104 956h1v1h-1zM1104 960h1v1h-1zM1104 965h1v1h-1zM1104 970h1v1h-1zM1104 974h1v1h-1zM1104 984h1v1h-1zM1279 760h1v1h-1zM1279 765h1v1h-1zM1279 769h1v1h-1zM1279 774h1v1h-1zM1279 779h1v1h-1zM1279 783h1v1h-1zM1279 788h1v1h-1zM1279 793h1v1h-1zM1279 797h1v1h-1zM1279 802h1v1h-1zM1279 807h1v1h-1zM1279 811h1v1h-1zM1279 816h1v1h-1zM1279 821h1v1h-1zM1279 825h1v1h-1zM1279 830h1v1h-1zM1279 835h1v1h-1zM1279 839h1v1h-1zM1279 844h1v1h-1zM1279 849h1v1h-1zM1279 853h1v1h-1zM1279 858h1v1h-1zM1279 863h1v1h-1zM1279 867h1v1h-1zM1279 872h1v1h-1zM1279 876h1v1h-1zM1279 881h1v1h-1zM1279 886h1v1h-1zM1279 890h1v1h-1zM1279 895h1v1h-1zM1279 900h1v1h-1zM1279 904h1v1h-1zM1279 909h1v1h-1zM1279 914h1v1h-1zM1279 918h1v1h-1zM1279 923h1v1h-1zM1279 928h1v1h-1zM1279 932h1v1h-1zM1279 937h1v1h-1zM1279 942h1v1h-1zM1279 946h1v1h-1zM1279 951h1v1h-1zM1279 956h1v1h-1zM1279 960h1v1h-1zM1279 965h1v1h-1zM1279 970h1v1h-1zM1279 974h1v1h-1zM1279 984h1v1h-1zM1454 760h1v1h-1zM1454 765h1v1h-1zM1454 769h1v1h-1zM1454 774h1v1h-1zM1454 779h1v1h-1zM1454 783h1v1h-1zM1454 788h1v1h-1zM1454 793h1v1h-1zM1454 797h1v1h-1zM1454 802h1v1h-1zM1454 807h1v1h-1zM1454 811h1v1h-1zM1454 816h1v1h-1zM1454 821h1v1h-1zM1454 825h1v1h-1zM1454 830h1v1h-1zM1454 835h1v1h-1zM1454 839h1v1h-1zM1454 844h1v1h-1zM1454 849h1v1h-1zM1454 853h1v1h-1zM1454 858h1v1h-1zM1454 863h1v1h-1zM1454 867h1v1h-1zM1454 872h1v1h-1zM1454 876h1v1h-1zM1454 881h1v1h-1zM1454 886h1v1h-1zM1454 890h1v1h-1zM1454 895h1v1h-1zM1454 900h1v1h-1zM1454 904h1v1h-1zM1454 909h1v1h-1zM1454 914h1v1h-1zM1454 918h1v1h-1zM1454 923h1v1h-1zM1454 928h1v1h-1zM1454 932h1v1h-1zM1454 937h1v1h-1zM1454 942h1v1h-1zM1454 946h1v1h-1zM1454 951h1v1h-1zM1454 956h1v1h-1zM1454 960h1v1h-1zM1454 965h1v1h-1zM1454 970h1v1h-1zM1454 974h1v1h-1zM1454 984h1v1h-1zM1629 760h1v1h-1zM1629 765h1v1h-1zM1629 769h1v1h-1zM1629 774h1v1h-1zM1629 779h1v1h-1zM1629 783h1v1h-1zM1629 788h1v1h-1zM1629 793h1v1h-1zM1629 797h1v1h-1zM1629 802h1v1h-1zM1629 807h1v1h-1zM1629 811h1v1h-1zM1629 816h1v1h-1zM1629 821h1v1h-1zM1629 825h1v1h-1zM1629 830h1v1h-1zM1629 835h1v1h-1zM1629 839h1v1h-1zM1629 844h1v1h-1zM1629 849h1v1h-1zM1629 853h1v1h-1zM1629 858h1v1h-1zM1629 863h1v1h-1zM1629 867h1v1h-1zM1629 872h1v1h-1zM1629 876h1v1h-1zM1629 881h1v1h-1zM1629 886h1v1h-1zM1629 890h1v1h-1zM1629 895h1v1h-1zM1629 900h1v1h-1zM1629 904h1v1h-1zM1629 909h1v1h-1zM1629 914h1v1h-1zM1629 918h1v1h-1zM1629 923h1v1h-1zM1629 928h1v1h-1zM1629 932h1v1h-1zM1629 937h1v1h-1zM1629 942h1v1h-1zM1629 946h1v1h-1zM1629 951h1v1h-1zM1629 956h1v1h-1zM1629 960h1v1h-1zM1629 965h1v1h-1zM1629 970h1v1h-1zM1629 974h1v1h-1zM1629 984h1v1h-1z" fill="#c4c4c4"/><rect x="3" y="289" width="1748" height="2" fill="#727272"/><rect x="3" y="523" width="1748" height="2" fill="#727272"/><rect x="3" y="757" width="1748" height="2" fill="#727272"/><g stroke="#d0d0d0" stroke-width="1" stroke-dasharray="5 5" fill="none"><path d="M3 266.5H1718"/><path d="M3 430.5H1718"/><path d="M3 734.5H1718"/><path d="M3 821.5H1718"/><path d="M55.5 94V289M55.5 298V523M55.5 532V757M55.5 759V992"/></g><path d="M3 429.5H1751" stroke="#8ad03a" stroke-width="1.1"/><path d="M3 733.5L4 733.5L5 733.5L6 733.5L7 733.5L8 733.5L9 733.5L10 733.5L11 733.5L12 733.5L13 733.5L14 733.5L15 733.5L16 733.5L17 733.5L18 733.5L19 733.5L20 733.5L21 733.5L22 733.5L23 733.5L24 733.5L25 733.5L26 733.5L27 733.5L28 733.5L29 733.5L30 733.5L31 733.5L32 733.5L33 733.5L34 733.5L35 733.5L36 733.5L37 733.5L38 733.5L39 733.5L40 733.5L41 733.5L42 733.5L43 733.5L44 733.5L45 733.5L46 733.5L47 733.5L48 733.5L49 733.5L50 733.5L51 733.5L52 733.5L53 733.5L54 733.5L55 733.5L56 733.5L57 732.5L58 732.5L59 732.5L60 732.5L61 731.5L62 731.5L63 731.5L64 731.5L65 730.5L66 730.5L67 730.5L68 730.5L69 729.5L70 729.5L71 729.5L72 729.5L73 728.5L74 728.5L75 728.5L76 728.5L77 727.5L78 727.5L79 727.5L80 727.5L81 726.5L82 726.5L83 726.5L84 726.5L85 726.5L86 725.5L87 725.5L88 725.5L89 725.5L90 724.5L91 724.5L92 724.5L93 724.5L94 723.5L95 723.5L96 723.5L97 723.5L98 722.5L99 722.5L100 722.5L101 722.5L102 722.5L103 721.5L104 721.5L105 721.5L106 721.5L107 720.5L108 720.5L109 720.5L110 720.5L111 719.5L112 719.5L113 719.5L114 719.5L115 719.5L116 718.5L117 718.5L118 718.5L119 718.5L120 717.5L121 717.5L122 717.5L123 717.5L124 717.5L125 716.5L126 716.5L127 716.5L128 716.5L129 715.5L130 715.5L131 715.5L132 715.5L133 715.5L134 714.5L135 714.5L136 714.5L137 714.5L138 713.5L139 713.5L140 713.5L141 713.5L142 713.5L143 712.5L144 712.5L145 712.5L146 712.5L147 712.5L148 711.5L149 711.5L150 711.5L151 711.5L152 710.5L153 710.5L154 710.5L155 710.5L156 710.5L157 709.5L158 709.5L159 709.5L160 709.5L161 709.5L162 708.5L163 708.5L164 708.5L165 708.5L166 707.5L167 707.5L168 707.5L169 707.5L170 707.5L171 706.5L172 706.5L173 706.5L174 706.5L175 706.5L176 705.5L177 705.5L178 705.5L179 705.5L180 704.5L181 704.5L182 704.5L183 704.5L184 704.5L185 703.5L186 703.5L187 703.5L188 703.5L189 703.5L190 702.5L191 702.5L192 702.5L193 702.5L194 702.5L195 701.5L196 701.5L197 701.5L198 701.5L199 701.5L200 700.5L201 700.5L202 700.5L203 700.5L204 699.5L205 699.5L206 699.5L207 699.5L208 699.5L209 698.5L210 698.5L211 698.5L212 698.5L213 698.5L214 697.5L215 697.5L216 697.5L217 697.5L218 697.5L219 696.5L220 696.5L221 696.5L222 696.5L223 696.5L224 695.5L225 695.5L226 695.5L227 695.5L228 695.5L229 694.5L230 694.5L231 694.5L232 694.5L233 694.5L234 694.5L235 693.5L236 693.5L237 693.5L238 693.5L239 693.5L240 692.5L241 692.5L242 692.5L243 692.5L244 691.5L245 691.5L246 691.5L247 691.5L248 691.5L249 690.5L250 690.5L251 690.5L252 690.5L253 690.5L254 689.5L255 689.5L256 689.5L257 689.5L258 689.5L259 688.5L260 688.5L261 688.5L262 688.5L263 688.5L264 687.5L265 687.5L266 687.5L267 687.5L268 687.5L269 686.5L270 686.5L271 686.5L272 686.5L273 686.5L274 685.5L275 685.5L276 685.5L277 685.5L278 685.5L279 684.5L280 684.5L281 684.5L282 684.5L283 684.5L284 683.5L285 683.5L286 683.5L287 683.5L288 683.5L289 682.5L290 682.5L291 682.5L292 682.5L293 682.5L294 681.5L295 681.5L296 681.5L297 681.5L298 681.5L299 680.5L300 680.5L301 680.5L302 680.5L303 680.5L304 679.5L305 679.5L306 679.5L307 679.5L308 679.5L309 678.5L310 678.5L311 678.5L312 678.5L313 678.5L314 677.5L315 677.5L316 677.5L317 677.5L318 676.5L319 676.5L320 676.5L321 676.5L322 676.5L323 675.5L324 675.5L325 675.5L326 675.5L327 675.5L328 674.5L329 674.5L330 674.5L331 674.5L332 674.5L333 673.5L334 673.5L335 673.5L336 673.5L337 673.5L338 672.5L339 672.5L340 672.5L341 672.5L342 672.5L343 671.5L344 671.5L345 671.5L346 671.5L347 671.5L348 670.5L349 670.5L350 670.5L351 670.5L352 670.5L353 670.5L354 669.5L355 669.5L356 669.5L357 669.5L358 669.5L359 668.5L360 668.5L361 668.5L362 668.5L363 668.5L364 667.5L365 667.5L366 667.5L367 667.5L368 667.5L369 666.5L370 666.5L371 666.5L372 666.5L373 666.5L374 665.5L375 665.5L376 665.5L377 665.5L378 665.5L379 664.5L380 664.5L381 664.5L382 664.5L383 664.5L384 664.5L385 663.5L386 663.5L387 663.5L388 663.5L389 663.5L390 662.5L391 662.5L392 662.5L393 662.5L394 662.5L395 661.5L396 661.5L397 661.5L398 661.5L399 661.5L400 661.5L401 660.5L402 660.5L403 660.5L404 660.5L405 660.5L406 659.5L407 659.5L408 659.5L409 659.5L410 659.5L411 659.5L412 658.5L413 658.5L414 658.5L415 658.5L416 658.5L417 657.5L418 657.5L419 657.5L420 657.5L421 657.5L422 657.5L423 656.5L424 656.5L425 656.5L426 656.5L427 656.5L428 655.5L429 655.5L430 655.5L431 655.5L432 655.5L433 655.5L434 654.5L435 654.5L436 654.5L437 654.5L438 654.5L439 653.5L440 653.5L441 653.5L442 653.5L443 653.5L444 653.5L445 652.5L446 652.5L447 652.5L448 652.5L449 652.5L450 652.5L451 651.5L452 651.5L453 651.5L454 651.5L455 651.5L456 650.5L457 650.5L458 650.5L459 650.5L460 650.5L461 650.5L462 649.5L463 649.5L464 649.5L465 649.5L466 649.5L467 649.5L468 648.5L469 648.5L470 648.5L471 648.5L472 648.5L473 647.5L474 647.5L475 647.5L476 647.5L477 647.5L478 647.5L479 646.5L480 646.5L481 646.5L482 646.5L483 646.5L484 646.5L485 645.5L486 645.5L487 645.5L488 645.5L489 645.5L490 645.5L491 644.5L492 644.5L493 644.5L494 644.5L495 644.5L496 644.5L497 643.5L498 643.5L499 643.5L500 643.5L501 643.5L502 643.5L503 642.5L504 642.5L505 642.5L506 642.5L507 642.5L508 642.5L509 641.5L510 641.5L511 641.5L512 641.5L513 641.5L514 641.5L515 640.5L516 640.5L517 640.5L518 640.5L519 640.5L520 640.5L521 639.5L522 639.5L523 639.5L524 639.5L525 639.5L526 639.5L527 638.5L528 638.5L529 638.5L530 638.5L531 638.5L532 638.5L533 637.5L534 637.5L535 637.5L536 637.5L537 637.5L538 637.5L539 636.5L540 636.5L541 636.5L542 636.5L543 636.5L544 636.5L545 635.5L546 635.5L547 635.5L548 635.5L549 635.5L550 635.5L551 634.5L552 634.5L553 634.5L554 634.5L555 634.5L556 634.5L557 633.5L558 633.5L559 633.5L560 633.5L561 633.5L562 633.5L563 632.5L564 632.5L565 632.5L566 632.5L567 632.5L568 632.5L569 632.5L570 631.5L571 631.5L572 631.5L573 631.5L574 631.5L575 631.5L576 630.5L577 630.5L578 630.5L579 630.5L580 630.5L581 630.5L582 629.5L583 629.5L584 629.5L585 629.5L586 629.5L587 629.5L588 629.5L589 628.5L590 628.5L591 628.5L592 628.5L593 628.5L594 628.5L595 627.5L596 627.5L597 627.5L598 627.5L599 627.5L600 627.5L601 627.5L602 626.5L603 626.5L604 626.5L605 626.5L606 626.5L607 626.5L608 625.5L609 625.5L610 625.5L611 625.5L612 625.5L613 625.5L614 625.5L615 624.5L616 624.5L617 624.5L618 624.5L619 624.5L620 624.5L621 623.5L622 623.5L623 623.5L624 623.5L625 623.5L626 623.5L627 623.5L628 622.5L629 622.5L630 622.5L631 622.5L632 622.5L633 622.5L634 621.5L635 621.5L636 621.5L637 621.5L638 621.5L639 621.5L640 621.5L641 620.5L642 620.5L643 620.5L644 620.5L645 620.5L646 620.5L647 620.5L648 619.5L649 619.5L650 619.5L651 619.5L652 619.5L653 619.5L654 618.5L655 618.5L656 618.5L657 618.5L658 618.5L659 618.5L660 618.5L661 617.5L662 617.5L663 617.5L664 617.5L665 617.5L666 617.5L667 617.5L668 616.5L669 616.5L670 616.5L671 616.5L672 616.5L673 616.5L674 616.5L675 615.5L676 615.5L677 615.5L678 615.5L679 615.5L680 615.5L681 615.5L682 614.5L683 614.5L684 614.5L685 614.5L686 614.5L687 614.5L688 614.5L689 613.5L690 613.5L691 613.5L692 613.5L693 613.5L694 613.5L695 613.5L696 612.5L697 612.5L698 612.5L699 612.5L700 612.5L701 612.5L702 612.5L703 611.5L704 611.5L705 611.5L706 611.5L707 611.5L708 611.5L709 611.5L710 610.5L711 610.5L712 610.5L713 610.5L714 610.5L715 610.5L716 610.5L717 609.5L718 609.5L719 609.5L720 609.5L721 609.5L722 609.5L723 609.5L724 608.5L725 608.5L726 608.5L727 608.5L728 608.5L729 608.5L730 608.5L731 607.5L732 607.5L733 607.5L734 607.5L735 607.5L736 607.5L737 607.5L738 607.5L739 606.5L740 606.5L741 606.5L742 606.5L743 606.5L744 606.5L745 606.5L746 605.5L747 605.5L748 605.5L749 605.5L750 605.5L751 605.5L752 605.5L753 604.5L754 604.5L755 604.5L756 604.5L757 604.5L758 604.5L759 604.5L760 604.5L761 603.5L762 603.5L763 603.5L764 603.5L765 603.5L766 603.5L767 603.5L768 602.5L769 602.5L770 602.5L771 602.5L772 602.5L773 602.5L774 602.5L775 602.5L776 601.5L777 601.5L778 601.5L779 601.5L780 601.5L781 601.5L782 601.5L783 600.5L784 600.5L785 600.5L786 600.5L787 600.5L788 600.5L789 600.5L790 600.5L791 599.5L792 599.5L793 599.5L794 599.5L795 599.5L796 599.5L797 599.5L798 598.5L799 598.5L800 598.5L801 598.5L802 598.5L803 598.5L804 598.5L805 598.5L806 597.5L807 597.5L808 597.5L809 597.5L810 597.5L811 597.5L812 597.5L813 596.5L814 596.5L815 596.5L816 596.5L817 596.5L818 596.5L819 596.5L820 596.5L821 595.5L822 595.5L823 595.5L824 595.5L825 595.5L826 595.5L827 595.5L828 595.5L829 594.5L830 594.5L831 594.5L832 594.5L833 594.5L834 594.5L835 594.5L836 594.5L837 593.5L838 593.5L839 593.5L840 593.5L841 593.5L842 593.5L843 593.5L844 592.5L845 592.5L846 592.5L847 592.5L848 592.5L849 592.5L850 592.5L851 592.5L852 591.5L853 591.5L854 591.5L855 591.5L856 591.5L857 591.5L858 591.5L859 591.5L860 590.5L861 590.5L862 590.5L863 590.5L864 590.5L865 590.5L866 590.5L867 590.5L868 590.5L869 589.5L870 589.5L871 589.5L872 589.5L873 589.5L874 589.5L875 589.5L876 589.5L877 588.5L878 588.5L879 588.5L880 588.5L881 588.5L882 588.5L883 588.5L884 588.5L885 587.5L886 587.5L887 587.5L888 587.5L889 587.5L890 587.5L891 587.5L892 587.5L893 587.5L894 586.5L895 586.5L896 586.5L897 586.5L898 586.5L899 586.5L900 586.5L901 586.5L902 585.5L903 585.5L904 585.5L905 585.5L906 585.5L907 585.5L908 585.5L909 585.5L910 585.5L911 584.5L912 584.5L913 584.5L914 584.5L915 584.5L916 584.5L917 584.5L918 584.5L919 584.5L920 583.5L921 583.5L922 583.5L923 583.5L924 583.5L925 583.5L926 583.5L927 583.5L928 583.5L929 583.5L930 582.5L931 582.5L932 582.5L933 582.5L934 582.5L935 582.5L936 582.5L937 582.5L938 582.5L939 581.5L940 581.5L941 581.5L942 581.5L943 581.5L944 581.5L945 581.5L946 581.5L947 581.5L948 581.5L949 580.5L950 580.5L951 580.5L952 580.5L953 580.5L954 580.5L955 580.5L956 580.5L957 580.5L958 579.5L959 579.5L960 579.5L961 579.5L962 579.5L963 579.5L964 579.5L965 579.5L966 579.5L967 579.5L968 578.5L969 578.5L970 578.5L971 578.5L972 578.5L973 578.5L974 578.5L975 578.5L976 578.5L977 578.5L978 577.5L979 577.5L980 577.5L981 577.5L982 577.5L983 577.5L984 577.5L985 577.5L986 577.5L987 577.5L988 576.5L989 576.5L990 576.5L991 576.5L992 576.5L993 576.5L994 576.5L995 576.5L996 576.5L997 576.5L998 575.5L999 575.5L1000 575.5L1001 575.5L1002 575.5L1003 575.5L1004 575.5L1005 575.5L1006 575.5L1007 575.5L1008 574.5L1009 574.5L1010 574.5L1011 574.5L1012 574.5L1013 574.5L1014 574.5L1015 574.5L1016 574.5L1017 574.5L1018 574.5L1019 573.5L1020 573.5L1021 573.5L1022 573.5L1023 573.5L1024 573.5L1025 573.5L1026 573.5L1027 573.5L1028 573.5L1029 573.5L1030 572.5L1031 572.5L1032 572.5L1033 572.5L1034 572.5L1035 572.5L1036 572.5L1037 572.5L1038 572.5L1039 572.5L1040 572.5L1041 571.5L1042 571.5L1043 571.5L1044 571.5L1045 571.5L1046 571.5L1047 571.5L1048 571.5L1049 571.5L1050 571.5L1051 571.5L1052 570.5L1053 570.5L1054 570.5L1055 570.5L1056 570.5L1057 570.5L1058 570.5L1059 570.5L1060 570.5L1061 570.5L1062 570.5L1063 570.5L1064 569.5L1065 569.5L1066 569.5L1067 569.5L1068 569.5L1069 569.5L1070 569.5L1071 569.5L1072 569.5L1073 569.5L1074 569.5L1075 569.5L1076 568.5L1077 568.5L1078 568.5L1079 568.5L1080 568.5L1081 568.5L1082 568.5L1083 568.5L1084 568.5L1085 568.5L1086 568.5L1087 568.5L1088 567.5L1089 567.5L1090 567.5L1091 567.5L1092 567.5L1093 567.5L1094 567.5L1095 567.5L1096 567.5L1097 567.5L1098 567.5L1099 567.5L1100 567.5L1101 566.5L1102 566.5L1103 566.5L1104 566.5L1105 566.5L1106 566.5L1107 566.5L1108 566.5L1109 566.5L1110 566.5L1111 566.5L1112 566.5L1113 566.5L1114 566.5L1115 565.5L1116 565.5L1117 565.5L1118 565.5L1119 565.5L1120 565.5L1121 565.5L1122 565.5L1123 565.5L1124 565.5L1125 565.5L1126 565.5L1127 565.5L1128 565.5L1129 564.5L1130 564.5L1131 564.5L1132 564.5L1133 564.5L1134 564.5L1135 564.5L1136 564.5L1137 564.5L1138 564.5L1139 564.5L1140 564.5L1141 564.5L1142 564.5L1143 563.5L1144 563.5L1145 563.5L1146 563.5L1147 563.5L1148 563.5L1149 563.5L1150 563.5L1151 563.5L1152 563.5L1153 563.5L1154 563.5L1155 563.5L1156 563.5L1157 563.5L1158 562.5L1159 562.5L1160 562.5L1161 562.5L1162 562.5L1163 562.5L1164 562.5L1165 562.5L1166 562.5L1167 562.5L1168 562.5L1169 562.5L1170 562.5L1171 562.5L1172 561.5L1173 561.5L1174 561.5L1175 561.5L1176 561.5L1177 561.5L1178 561.5L1179 561.5L1180 561.5L1181 561.5L1182 561.5L1183 561.5L1184 561.5L1185 561.5L1186 561.5L1187 561.5L1188 560.5L1189 560.5L1190 560.5L1191 560.5L1192 560.5L1193 560.5L1194 560.5L1195 560.5L1196 560.5L1197 560.5L1198 560.5L1199 560.5L1200 560.5L1201 560.5L1202 560.5L1203 560.5L1204 559.5L1205 559.5L1206 559.5L1207 559.5L1208 559.5L1209 559.5L1210 559.5L1211 559.5L1212 559.5L1213 559.5L1214 559.5L1215 559.5L1216 559.5L1217 559.5L1218 559.5L1219 559.5L1220 559.5L1221 558.5L1222 558.5L1223 558.5L1224 558.5L1225 558.5L1226 558.5L1227 558.5L1228 558.5L1229 558.5L1230 558.5L1231 558.5L1232 558.5L1233 558.5L1234 558.5L1235 558.5L1236 558.5L1237 558.5L1238 558.5L1239 557.5L1240 557.5L1241 557.5L1242 557.5L1243 557.5L1244 557.5L1245 557.5L1246 557.5L1247 557.5L1248 557.5L1249 557.5L1250 557.5L1251 557.5L1252 557.5L1253 557.5L1254 557.5L1255 557.5L1256 557.5L1257 557.5L1258 557.5L1259 556.5L1260 556.5L1261 556.5L1262 556.5L1263 556.5L1264 556.5L1265 556.5L1266 556.5L1267 556.5L1268 556.5L1269 556.5L1270 556.5L1271 556.5L1272 556.5L1273 556.5L1274 556.5L1275 556.5L1276 556.5L1277 556.5L1278 556.5L1279 556.5L1280 556.5L1281 555.5L1282 555.5L1283 555.5L1284 555.5L1285 555.5L1286 555.5L1287 555.5L1288 555.5L1289 555.5L1290 555.5L1291 555.5L1292 555.5L1293 555.5L1294 555.5L1295 555.5L1296 555.5L1297 555.5L1298 555.5L1299 555.5L1300 555.5L1301 555.5L1302 555.5L1303 555.5L1304 554.5L1305 554.5L1306 554.5L1307 554.5L1308 554.5L1309 554.5L1310 554.5L1311 554.5L1312 554.5L1313 554.5L1314 554.5L1315 554.5L1316 554.5L1317 554.5L1318 554.5L1319 554.5L1320 554.5L1321 554.5L1322 554.5L1323 554.5L1324 554.5L1325 554.5L1326 554.5L1327 554.5L1328 553.5L1329 553.5L1330 553.5L1331 553.5L1332 553.5L1333 553.5L1334 553.5L1335 553.5L1336 553.5L1337 553.5L1338 553.5L1339 553.5L1340 553.5L1341 553.5L1342 553.5L1343 553.5L1344 553.5L1345 553.5L1346 553.5L1347 553.5L1348 553.5L1349 553.5L1350 553.5L1351 553.5L1352 553.5L1353 552.5L1354 552.5L1355 552.5L1356 552.5L1357 552.5L1358 552.5L1359 552.5L1360 552.5L1361 552.5L1362 552.5L1363 552.5L1364 552.5L1365 552.5L1366 552.5L1367 552.5L1368 552.5L1369 552.5L1370 552.5L1371 552.5L1372 552.5L1373 552.5L1374 552.5L1375 552.5L1376 552.5L1377 552.5L1378 552.5L1379 552.5L1380 552.5L1381 551.5L1382 551.5L1383 551.5L1384 551.5L1385 551.5L1386 551.5L1387 551.5L1388 551.5L1389 551.5L1390 551.5L1391 551.5L1392 551.5L1393 551.5L1394 551.5L1395 551.5L1396 551.5L1397 551.5L1398 551.5L1399 551.5L1400 551.5L1401 551.5L1402 551.5L1403 551.5L1404 551.5L1405 551.5L1406 551.5L1407 551.5L1408 551.5L1409 551.5L1410 551.5L1411 551.5L1412 551.5L1413 551.5L1414 550.5L1415 550.5L1416 550.5L1417 550.5L1418 550.5L1419 550.5L1420 550.5L1421 550.5L1422 550.5L1423 550.5L1424 550.5L1425 550.5L1426 550.5L1427 550.5L1428 550.5L1429 550.5L1430 550.5L1431 550.5L1432 550.5L1433 550.5L1434 550.5L1435 550.5L1436 550.5L1437 550.5L1438 550.5L1439 550.5L1440 550.5L1441 550.5L1442 550.5L1443 550.5L1444 550.5L1445 550.5L1446 550.5L1447 550.5L1448 550.5L1449 550.5L1450 550.5L1451 550.5L1452 550.5L1453 550.5L1454 550.5L1455 550.5L1456 550.5L1457 550.5L1458 550.5L1459 550.5L1460 550.5L1461 550.5L1462 550.5L1463 550.5L1464 550.5L1465 550.5L1466 550.5L1467 550.5L1468 550.5L1469 550.5L1470 550.5L1471 550.5L1472 549.5L1473 549.5L1474 549.5L1475 549.5L1476 549.5L1477 549.5L1478 549.5L1479 549.5L1480 549.5L1481 549.5L1482 549.5L1483 549.5L1484 549.5L1485 549.5L1486 549.5L1487 549.5L1488 549.5L1489 549.5L1490 549.5L1491 549.5L1492 549.5L1493 549.5L1494 549.5L1495 549.5L1496 549.5L1497 549.5L1498 549.5L1499 549.5L1500 549.5L1501 549.5L1502 549.5L1503 549.5L1504 549.5L1505 549.5L1506 549.5L1507 549.5L1508 549.5L1509 549.5L1510 549.5L1511 549.5L1512 549.5L1513 549.5L1514 549.5L1515 549.5L1516 549.5L1517 549.5L1518 549.5L1519 549.5L1520 549.5L1521 549.5L1522 549.5L1523 549.5L1524 549.5L1525 549.5L1526 549.5L1527 549.5L1528 549.5L1529 549.5L1530 549.5L1531 549.5L1532 549.5L1533 549.5L1534 549.5L1535 549.5L1536 549.5L1537 549.5L1538 549.5L1539 549.5L1540 549.5L1541 549.5L1542 549.5L1543 549.5L1544 549.5L1545 549.5L1546 549.5L1547 549.5L1548 549.5L1549 549.5L1550 549.5L1551 549.5L1552 549.5L1553 549.5L1554 549.5L1555 549.5L1556 549.5L1557 549.5L1558 549.5L1559 549.5L1560 549.5L1561 549.5L1562 549.5L1563 549.5L1564 549.5L1565 549.5L1566 549.5L1567 549.5L1568 549.5L1569 549.5L1570 549.5L1571 549.5L1572 549.5L1573 549.5L1574 549.5L1575 549.5L1576 549.5L1577 549.5L1578 549.5L1579 549.5L1580 549.5L1581 549.5L1582 549.5L1583 549.5L1584 549.5L1585 549.5L1586 549.5L1587 548.5L1588 548.5L1589 548.5L1590 548.5L1591 548.5L1592 548.5L1593 548.5L1594 548.5L1595 548.5L1596 548.5L1597 548.5L1598 548.5L1599 548.5L1600 548.5L1601 548.5L1602 548.5L1603 548.5L1604 548.5L1605 548.5L1606 548.5L1607 548.5L1608 548.5L1609 548.5L1610 548.5L1611 548.5L1612 548.5L1613 548.5L1614 548.5L1615 548.5L1616 548.5L1617 548.5L1618 548.5L1619 548.5L1620 548.5L1621 548.5L1622 548.5L1623 548.5L1624 548.5L1625 548.5L1626 548.5L1627 548.5L1628 548.5L1629 548.5L1630 548.5L1631 548.5L1632 548.5L1633 548.5L1634 548.5L1635 548.5L1636 548.5L1637 548.5L1638 548.5L1639 548.5L1640 548.5L1641 548.5L1642 548.5L1643 548.5L1644 548.5L1645 548.5L1646 548.5L1647 548.5L1648 548.5L1649 548.5L1650 548.5L1651 548.5L1652 548.5L1653 548.5L1654 548.5L1655 548.5L1656 548.5L1657 548.5L1658 548.5L1659 548.5L1660 548.5L1661 548.5L1662 548.5L1663 548.5L1664 548.5L1665 548.5L1666 548.5L1667 548.5L1668 548.5L1669 548.5L1670 548.5L1671 548.5L1672 548.5L1673 548.5L1674 548.5L1675 548.5L1676 548.5L1677 548.5L1678 548.5L1679 548.5L1680 548.5L1681 548.5L1682 548.5L1683 548.5L1684 548.5L1685 548.5L1686 548.5L1687 548.5L1688 548.5L1689 548.5L1690 548.5L1691 548.5L1692 548.5L1693 548.5L1694 548.5L1695 548.5L1696 548.5L1697 548.5L1698 548.5L1699 548.5L1700 548.5L1701 548.5L1702 548.5L1703 548.5L1704 548.5L1705 548.5L1706 548.5L1707 548.5L1708 548.5L1709 548.5L1710 548.5L1711 548.5L1712 548.5L1713 548.5L1714 548.5L1715 548.5L1716 548.5L1717 548.5L1718 548.5L1719 548.5L1720 548.5L1721 548.5L1722 548.5L1723 548.5L1724 548.5L1725 548.5L1726 548.5L1727 548.5L1728 548.5L1729 548.5L1730 548.5L1731 548.5L1732 548.5L1733 548.5L1734 548.5L1735 548.5L1736 548.5L1737 548.5L1738 548.5L1739 548.5L1740 548.5L1741 548.5L1742 548.5L1743 548.5L1744 548.5L1745 548.5L1746 548.5L1747 548.5L1748 548.5L1749 548.5L1750 548.5L1751 548.5" fill="none" stroke="#f28a22" stroke-width="1.2" stroke-linejoin="bevel"/><path d="M3 826.7L4 826.7L5 826.7L6 826.7L7 826.7L8 826.7L9 826.7L10 826.7L11 826.7L12 826.7L13 826.7L14 826.7L15 826.7L16 826.7L17 826.7L18 826.7L19 826.7L20 826.7L21 826.7L22 826.7L23 826.7L24 826.7L25 826.7L26 826.7L27 826.7L28 826.7L29 826.7L30 826.7L31 826.7L32 826.7L33 826.7L34 826.7L35 826.7L36 826.7L37 826.7L38 826.7L39 826.7L40 826.7L41 826.7L42 826.7L43 826.7L44 826.7L45 826.7L46 826.7L47 826.7L48 826.7L49 826.7L50 826.7L51 826.7L52 826.7L53 826.7L54 826.7L55 816.7L56 780.9L57 852.1L58 807.3L59 839.6L60 826.7L61 829.8L62 827.8L63 827L64 824.9L65 826.1L66 827.2L67 828.3L68 830.3L69 829.5L70 829.4L71 827.3L72 826.3L73 826.7L74 828.2L75 828L76 829.3L77 830.6L78 830.9L79 829.3L80 828L81 828.7L82 827L83 829.3L84 829L85 829.3L86 829.3L87 829.3L88 829.6L89 827.8L90 828.5L91 829L92 829L93 829.9L94 829.2L95 829.1L96 829L97 829.5L98 828.7L99 828.6L100 829.6L101 829.8L102 829.8L103 830.8L104 830.5L105 829.2L106 829.7L107 829.5L108 830.4L109 830.5L110 829.9L111 831.5L112 829.7L113 830.1L114 830.6L115 829.3L116 830L117 829.4L118 830.9L119 831.3L120 830.9L121 831.5L122 830.2L123 830.9L124 830.7L125 830.8L126 830.7L127 831.7L128 832L129 831.1L130 831.4L131 830.2L132 831.5L133 831.5L134 832.2L135 831.9L136 830.9L137 831.2L138 831.8L139 830.6L140 831.5L141 831L142 830.9L143 830.9L144 832.4L145 831.1L146 831.4L147 831.8L148 832.8L149 831.3L150 832.1L151 832.4L152 833.1L153 833L154 833.2L155 832.1L156 832.5L157 832.4L158 833.5L159 833.8L160 832.2L161 832.4L162 832.6L163 832.7L164 833.2L165 833.5L166 833L167 832.5L168 833.5L169 833.4L170 833.9L171 834.8L172 834.4L173 834.1L174 834.4L175 834.6L176 833.5L177 835.3L178 835.1L179 835.4L180 835.3L181 834.6L182 834.7L183 834.2L184 835.4L185 834.3L186 834.4L187 834.8L188 834.8L189 835.3L190 834.8L191 834.8L192 835.2L193 835.2L194 835.8L195 835.2L196 837L197 836.6L198 835.7L199 836L200 836.3L201 836.4L202 836L203 837.6L204 837.9L205 837L206 837.1L207 836.4L208 836.5L209 837.1L210 837L211 838.2L212 837L213 836.8L214 838.7L215 838L216 837.3L217 838.2L218 837.2L219 838.3L220 839.3L221 839.2L222 838.9L223 838.1L224 838.4L225 838.1L226 839.4L227 839L228 839.6L229 838.8L230 838.6L231 839.9L232 840.3L233 840.2L234 840.2L235 840.3L236 840.2L237 839.3L238 840L239 839.8L240 839.2L241 839.3L242 839.9L243 840L244 840.9L245 841.6L246 840.6L247 841.7L248 841.9L249 842L250 840.9L251 840.7L252 840.8L253 840.8L254 840.9L255 841.8L256 842.4L257 842.4L258 841.7L259 842.1L260 842.4L261 841.1L262 842.2L263 842.8L264 842.5L265 842.5L266 842L267 841.4L268 870L269 895L270 885L271 906L272 888L273 894.1L274 888.9L275 885.1L276 882.7L277 881.8L278 884.8L279 889.8L280 892.8L281 892.9L282 891.3L283 887.9L284 885.5L285 882.9L286 881.4L287 884.3L288 887.1L289 888.4L290 888.1L291 886.8L292 883L293 879.6L294 879.1L295 878L296 878.7L297 881L298 881.4L299 882.2L300 880.8L301 877.5L302 875.1L303 873.5L304 873L305 874.2L306 874.8L307 875.9L308 875.3L309 875.6L310 872.8L311 871.1L312 870L313 870.2L314 869.8L315 871.6L316 871.5L317 871.6L318 870.8L319 868.7L320 868.1L321 866.8L322 866.3L323 868.1L324 867.6L325 868.7L326 869.2L327 868.3L328 866.9L329 853.3L330 880.6L331 859.8L332 864.8L333 866L334 865.7L335 865.7L336 866.1L337 864.8L338 864.1L339 863.8L340 864.6L341 863.5L342 863.6L343 863.1L344 862.9L345 863L346 862.3L347 862.3L348 862L349 862.7L350 862.1L351 862.2L352 862.2L353 860.8L354 861.2L355 861.8L356 861.4L357 860L358 859.9L359 860.3L360 859.5L361 859.7L362 859.3L363 860.3L364 860.3L365 860.4L366 859L367 859.9L368 859.7L369 858.7L370 859.9L371 860L372 858.5L373 859.8L374 858.7L375 858.7L376 859.6L377 859.2L378 857.9L379 858.3L380 858.4L381 858L382 857.7L383 857.9L384 858.5L385 857.2L386 858.1L387 857.8L388 857L389 857.5L390 858L391 857.7L392 856.8L393 858.4L394 858.1L395 858.3L396 856.7L397 857L398 856.6L399 857.9L400 850L401 862.7L402 857.3L403 858.1L404 858L405 857L406 856.8L407 858.2L408 857.6L409 857.8L410 856.8L411 856.7L412 857.9L413 857.4L414 856.8L415 858.4L416 857.9L417 858.2L418 856.9L419 858.4L420 857L421 858.4L422 857.7L423 857.5L424 858L425 858.7L426 857.5L427 857.3L428 858.1L429 857.6L430 857.4L431 857.5L432 857.4L433 857.7L434 857.9L435 858L436 858.8L437 858L438 858.4L439 857.9L440 858.3L441 857.7L442 858.2L443 857.8L444 859.1L445 858.9L446 858.3L447 858.8L448 859.7L449 858.2L450 859.6L451 858.9L452 859.1L453 859.8L454 859L455 859.3L456 859.7L457 860.2L458 859.2L459 860.1L460 859.9L461 859.9L462 859.5L463 859.5L464 859L465 859.3L466 859.2L467 860.5L468 859.7L469 859.6L470 859.6L471 861L472 861.2L473 860.9L474 860.3L475 860.3L476 860.5L477 860.9L478 860.4L479 861L480 860.8L481 862.1L482 862.2L483 861.6L484 861.1L485 862.5L486 861.4L487 861.6L488 861.1L489 861.9L490 862.1L491 862.3L492 861.9L493 862.5L494 861.7L495 862.3L496 857.1L497 866.7L498 862.2L499 862.3L500 862.9L501 862.9L502 863.6L503 863.6L504 864.1L505 864.1L506 864.3L507 864.7L508 864L509 864L510 865.3L511 863.9L512 865.1L513 865.1L514 864.1L515 865.7L516 865.9L517 865.6L518 865.9L519 866.2L520 865.1L521 866L522 866.1L523 866.8L524 866.9L525 867.1L526 866.8L527 867.5L528 867.3L529 867.5L530 866.8L531 866.6L532 866.9L533 867.5L534 867.2L535 868.7L536 868.3L537 868.6L538 868.8L539 869L540 868.8L541 868.1L542 869.7L543 869.8L544 869.5L545 869.7L546 870.1L547 869.2L548 870.6L549 869.9L550 869.7L551 870.2L552 871.2L553 870.4L554 871.6L555 872.1L556 871.4L557 871.4L558 871.7L559 872.3L560 872.6L561 872.5L562 872.7L563 871.8L564 872.1L565 872.5L566 873.5L567 872.9L568 873.5L569 872.7L570 872.9L571 873.5L572 874.4L573 874.6L574 874.7L575 874.1L576 874.7L577 874.8L578 874.9L579 874.5L580 876L581 874.9L582 876.5L583 876.5L584 875L585 876L586 876.8L587 877.2L588 876.4L589 876.3L590 876.3L591 877.8L592 876.6L593 877.4L594 876.8L595 877.6L596 878.5L597 877.2L598 878.6L599 878.2L600 879L601 878.8L602 878.1L603 879.5L604 878.9L605 878.2L606 878.3L607 879.4L608 879.4L609 879.3L610 879.2L611 879.7L612 879.8L613 880.9L614 879.5L615 881L616 881.4L617 880.2L618 881.8L619 881.6L620 882.1L621 881.1L622 881.4L623 881.6L624 882.9L625 882.3L626 882L627 882.3L628 882.2L629 881.9L630 882.2L631 883.7L632 882.8L633 884.2L634 883.1L635 883.3L636 883.9L637 883.5L638 884L639 885.2L640 885.2L641 885.3L642 885.1L643 885.8L644 886L645 885.4L646 885.9L647 884.9L648 886.3L649 886L650 886.7L651 886.6L652 886.2L653 885.9L654 887.7L655 886.4L656 887.2L657 887.2L658 887.3L659 882.2L660 896.8L661 884.7L662 888.6L663 888.2L664 888.8L665 888.7L666 888.5L667 888.7L668 889L669 890.5L670 889.9L671 889.6L672 891.1L673 891.5L674 890.7L675 890.3L676 890.6L677 890.7L678 891.3L679 891.1L680 891.6L681 891.8L682 892.6L683 893.4L684 893.4L685 893L686 893.2L687 893.6L688 893.5L689 893.7L690 893.4L691 894L692 895.4L693 894.1L694 895L695 895.4L696 896.1L697 895.1L698 895.4L699 895.6L700 896L701 896.3L702 897.4L703 897.4L704 897.6L705 896.3L706 896.5L707 897.9L708 898.4L709 897.8L710 898.2L711 897.4L712 898.3L713 899.4L714 899.4L715 899.6L716 900L717 898.9L718 898.8L719 899.1L720 899.9L721 900.4L722 901.1L723 900.8L724 900.9L725 901.3L726 900.9L727 901.3L728 900.5L729 902L730 901.2L731 902.6L732 902.3L733 901.9L734 901.7L735 902.1L736 903L737 903.3L738 902.4L739 902.5L740 903.5L741 903.8L742 903.6L743 903.5L744 904.3L745 903.4L746 904.1L747 904.6L748 905.6L749 905.2L750 905.8L751 905.3L752 905L753 905.2L754 906.7L755 906.4L756 905.8L757 905.5L758 906.5L759 907L760 906.7L761 906.5L762 907.4L763 908.1L764 906.9L765 906.8L766 907.5L767 907.7L768 908.4L769 907.6L770 908.9L771 908.9L772 908.6L773 908.2L774 909.8L775 908.7L776 909.8L777 908.9L778 909L779 910.1L780 909.5L781 910.8L782 910.1L783 909.7L784 909.9L785 910.5L786 911.1L787 911.7L788 910.5L789 911.1L790 910.9L791 912.5L792 911.1L793 911.1L794 911.3L795 912.1L796 913.2L797 913.4L798 913.3L799 914L800 914.1L801 913.2L802 913.2L803 914.7L804 914.6L805 913.6L806 914.9L807 914.7L808 914.9L809 915.1L810 915L811 915L812 915.8L813 916.2L814 917.5L815 916.3L816 918.1L817 917L818 917.6L819 918.7L820 919L821 918.6L822 918.2L823 919.2L824 919.4L825 920.6L826 919.6L827 920.3L828 921.5L829 920.3L830 921.3L831 922.3L832 922.5L833 921.5L834 921.8L835 922.2L836 924L837 923.2L838 924.3L839 924.9L840 924.2L841 924.4L842 926L843 925.6L844 925.3L845 926.4L846 926L847 926.2L848 926L849 927.7L850 928.2L851 928L852 928.9L853 927.5L854 928.2L855 928.9L856 930.1L857 930.3L858 929.6L859 929.7L860 930.3L861 930.7L862 931.8L863 930.7L864 932.1L865 932.3L866 932.7L867 932.9L868 932.9L869 932.7L870 933L871 933.4L872 934.4L873 933.5L874 934L875 935.3L876 934.6L877 934.6L878 934.8L879 936.1L880 936L881 937.4L882 937.5L883 938L884 937L885 937L886 937.3L887 938.3L888 939L889 938.8L890 938.7L891 939.3L892 940L893 940.3L894 940.8L895 941.2L896 941.2L897 940.5L898 942.1L899 941.4L900 942.1L901 942L902 943L903 942.3L904 942.6L905 942.9L906 943L907 944.6L908 944.3L909 944.2L910 944.5L911 945.9L912 945.3L913 945.1L914 946.4L915 946.4L916 947.2L917 945.9L918 946.8L919 947.7L920 948L921 948.4L922 947.1L923 947.8L924 947.8L925 948.2L926 949.9L927 949.4L928 950.3L929 949.6L930 950.7L931 950.3L932 950.2L933 951.4L934 952L935 950.8L936 951.9L937 952.3L938 951.8L939 952.4L940 952.3L941 952.7L942 953.1L943 954L944 954.4L945 953.8L946 953.8L947 954.6L948 955.5L949 954.9L950 955.4L951 955.5L952 956.8L953 956.6L954 956L955 956.3L956 957L957 957.5L958 957.9L959 957.1L960 957.4L961 958.5L962 958.2L963 958.1L964 958.4L965 959.7L966 958.7L967 959.3L968 959.1L969 959.4L970 960.4L971 960.8L972 959.8L973 959.7L974 960.8L975 960L976 959.8L977 961.6L978 960.8L979 961.7L980 961.1L981 962.1L982 961.5L983 961.1L984 960.9L985 962L986 962.3L987 962.9L988 961.5L989 962.6L990 962.3L991 962.6L992 962.1L993 962.4L994 962.9L995 963.7L996 962.3L997 963.1L998 963.7L999 964.1L1000 962.8L1001 962.7L1002 964.2L1003 964.3L1004 963.5L1005 962.8L1006 964.4L1007 963.5L1008 964.4L1009 964L1010 964.4L1011 963.2L1012 964.4L1013 963.4L1014 963.8L1015 964.6L1016 964.6L1017 963.5L1018 963.6L1019 964L1020 964.2L1021 964L1022 963.6L1023 963.9L1024 964.8L1025 965.1L1026 963.6L1027 964.6L1028 964.9L1029 963.7L1030 965.1L1031 963.9L1032 964.8L1033 964.7L1034 964.9L1035 964.3L1036 964.6L1037 964.9L1038 964.6L1039 965.1L1040 964.7L1041 964.7L1042 964L1043 965.1L1044 964.9L1045 964.4L1046 965.4L1047 965.4L1048 964.9L1049 964.4L1050 965L1051 964.3L1052 964.4L1053 964.9L1054 964.3L1055 965L1056 965.1L1057 964.3L1058 965.4L1059 964.4L1060 965.6L1061 965.7L1062 965.2L1063 964.4L1064 965.2L1065 965L1066 966.1L1067 964.6L1068 965.9L1069 966.2L1070 965.7L1071 965.9L1072 964.8L1073 966.2L1074 965.3L1075 966.2L1076 966.1L1077 964.8L1078 965.9L1079 966.2L1080 964.6L1081 965.2L1082 965.9L1083 964.8L1084 966.2L1085 965.1L1086 966L1087 964.9L1088 965.5L1089 966.3L1090 965L1091 965.1L1092 965.6L1093 965.2L1094 964.7L1095 965L1096 965L1097 966.4L1098 965.9L1099 966.3L1100 965L1101 966.2L1102 965L1103 965.7L1104 965.9L1105 965.4L1106 966.4L1107 965.8L1108 965.9L1109 966.4L1110 965.1L1111 966.7L1112 966L1113 965.6L1114 966.4L1115 965.4L1116 966.8L1117 966L1118 965.7L1119 966.4L1120 965.8L1121 965.4L1122 966.4L1123 965.2L1124 966.6L1125 965.6L1126 966.3L1127 966.9L1128 966.2L1129 966.4L1130 965.8L1131 965.2L1132 965.3L1133 965.5L1134 966.4L1135 966.1L1136 966.2L1137 966.9L1138 965.6L1139 965.7L1140 966.5L1141 965.4L1142 965.4L1143 966L1144 965.6L1145 966L1146 965.8L1147 966.4L1148 966.5L1149 965.8L1150 966.5L1151 966.3L1152 965.6L1153 967.1L1154 965.8L1155 965.6L1156 965.5L1157 966.5L1158 966.9L1159 966.7L1160 966L1161 965.8L1162 965.3L1163 966.4L1164 966.3L1165 965.9L1166 966.4L1167 966L1168 966.9L1169 966.5L1170 965.6L1171 966.7L1172 965.1L1173 966L1174 965.7L1175 965.4L1176 965L1177 966.3L1178 964.9L1179 965.8L1180 966.5L1181 965L1182 965.1L1183 965.8L1184 965.5L1185 965.7L1186 966L1187 964.8L1188 965L1189 964.9L1190 964.5L1191 965.9L1192 965.7L1193 965.5L1194 964.2L1195 965.6L1196 965.4L1197 964.9L1198 965.3L1199 964.7L1200 964.3L1201 964L1202 964.2L1203 963.8L1204 964.2L1205 964.9L1206 964.8L1207 965L1208 964.7L1209 963.8L1210 964.3L1211 964L1212 964.6L1213 964.1L1214 963.5L1215 964.2L1216 964.7L1217 963.3L1218 964.4L1219 962.8L1220 963.2L1221 963.1L1222 963.9L1223 964.2L1224 963.8L1225 963L1226 963.9L1227 962.9L1228 962.7L1229 963.8L1230 963.2L1231 963.3L1232 963.2L1233 963.7L1234 962.7L1235 963.3L1236 963L1237 963.2L1238 962.4L1239 962.9L1240 962.5L1241 962L1242 961.8L1243 962.4L1244 961.4L1245 962.8L1246 961.4L1247 961.1L1248 961.2L1249 962.6L1250 961.5L1251 961.1L1252 960.9L1253 960.8L1254 961.9L1255 961.8L1256 961.8L1257 961.9L1258 960.6L1259 961.5L1260 961L1261 961.8L1262 961.7L1263 961.8L1264 960.3L1265 961.7L1266 961.7L1267 961.7L1268 960.2L1269 960.3L1270 960.1L1271 959.9L1272 961.3L1273 961.2L1274 960.9L1275 961.2L1276 960.8L1277 960.1L1278 959.8L1279 959.7L1280 960.9L1281 959.8L1282 960L1283 960.2L1284 959.4L1285 959.8L1286 959.8L1287 960.6L1288 959.9L1289 959.8L1290 960.9L1291 960L1292 960.6L1293 960.2L1294 959.1L1295 959.7L1296 959.8L1297 960.3L1298 959.5L1299 960.1L1300 959.8L1301 959.2L1302 960.3L1303 958.9L1304 960.2L1305 959L1306 958.7L1307 959L1308 960L1309 960.3L1310 958.5L1311 959.4L1312 959.4L1313 959.9L1314 958.7L1315 959.3L1316 959L1317 959.8L1318 958.8L1319 960L1320 958.7L1321 958.6L1322 959.4L1323 959L1324 958.3L1325 959.2L1326 958.2L1327 959.5L1328 959.3L1329 959.4L1330 959.1L1331 958.6L1332 958.6L1333 958.6L1334 959.4L1335 958L1336 959.4L1337 957.8L1338 958.1L1339 958.2L1340 959.3L1341 958.6L1342 958.3L1343 959.2L1344 958L1345 958.4L1346 958.5L1347 958.9L1348 958.8L1349 958.6L1350 958L1351 958L1352 957.6L1353 958.9L1354 958.5L1355 958.6L1356 957.6L1357 958L1358 958.6L1359 958.2L1360 957.4L1361 958L1362 958.7L1363 957.5L1364 957.4L1365 957.6L1366 958.3L1367 958.5L1368 957.2L1369 957.2L1370 957.3L1371 957.5L1372 957.8L1373 957.1L1374 957.4L1375 957.1L1376 958.5L1377 958L1378 956.9L1379 958.4L1380 956.8L1381 957.3L1382 958.4L1383 958L1384 957.9L1385 957.3L1386 956.8L1387 957.6L1388 956.6L1389 956.8L1390 957.1L1391 956.4L1392 957.1L1393 957.7L1394 957.5L1395 957.2L1396 957.4L1397 957.1L1398 956.5L1399 957.3L1400 956.9L1401 957.5L1402 957.7L1403 956.8L1404 957.1L1405 957.4L1406 956.8L1407 956.4L1408 957.2L1409 957.5L1410 957.3L1411 957.1L1412 957.4L1413 957L1414 956.9L1415 956.6L1416 956.3L1417 956.8L1418 955.9L1419 956.4L1420 957L1421 956.9L1422 956.7L1423 956L1424 956.3L1425 956.3L1426 956.6L1427 956.2L1428 956.6L1429 957.1L1430 955.7L1431 956.5L1432 956.7L1433 956L1434 956.2L1435 957L1436 955.3L1437 956.2L1438 955.5L1439 956.5L1440 956.8L1441 956L1442 955.2L1443 956.1L1444 956L1445 956.3L1446 955.9L1447 956.1L1448 956.4L1449 955.8L1450 955.6L1451 956.5L1452 955.2L1453 956L1454 955.4L1455 956.1L1456 954.9L1457 956.4L1458 955.3L1459 954.7L1460 955.1L1461 955.3L1462 954.5L1463 955.2L1464 955.2L1465 955.7L1466 955L1467 954.8L1468 954.7L1469 955.6L1470 956L1471 955.2L1472 954.6L1473 955.6L1474 954.9L1475 954.5L1476 954.4L1477 955.5L1478 955.5L1479 955.2L1480 954.9L1481 955L1482 954.4L1483 955.7L1484 954.5L1485 955L1486 955.3L1487 955.3L1488 954.6L1489 954.3L1490 954.7L1491 953.9L1492 955.2L1493 954.3L1494 955.2L1495 954.1L1496 954.3L1497 954L1498 954.3L1499 953.8L1500 953.5L1501 954.7L1502 953.9L1503 953.8L1504 953.9L1505 954.2L1506 954.1L1507 954.4L1508 954.4L1509 953.9L1510 954.9L1511 954.7L1512 953.3L1513 954.6L1514 954.7L1515 954.5L1516 953.3L1517 954.5L1518 954.1L1519 953L1520 953L1521 954.6L1522 954.1L1523 953.3L1524 953L1525 953.1L1526 953.2L1527 954.1L1528 953.3L1529 953L1530 954.3L1531 954.1L1532 952.9L1533 954.2L1534 953.6L1535 953.9L1536 953.7L1537 954.1L1538 953.9L1539 953.9L1540 952.7L1541 953.6L1542 953.3L1543 953.6L1544 953.1L1545 953.8L1546 953.2L1547 952.7L1548 952.6L1549 952.4L1550 953L1551 952.2L1552 952.9L1553 952.3L1554 952.9L1555 952.9L1556 952.9L1557 953.5L1558 951.9L1559 953.4L1560 952.7L1561 952.8L1562 953L1563 953.3L1564 952.4L1565 952.4L1566 953.4L1567 951.8L1568 952.7L1569 952.7L1570 951.6L1571 952.6L1572 952.7L1573 953.1L1574 952L1575 953.2L1576 952.3L1577 952.2L1578 952.9L1579 951.3L1580 952.5L1581 952.3L1582 951.8L1583 952.7L1584 951.8L1585 951.9L1586 952L1587 952.4L1588 951.4L1589 951.7L1590 951.7L1591 951.9L1592 952.4L1593 951.4L1594 952.3L1595 951.5L1596 951.7L1597 951.2L1598 951.6L1599 952.4L1600 951.8L1601 952L1602 951.2L1603 951.1L1604 951L1605 951.5L1606 951.6L1607 951.8L1608 950.4L1609 951.6L1610 951.9L1611 951.2L1612 950.3L1613 950.7L1614 950.2L1615 950.5L1616 951.7L1617 951.2L1618 951.2L1619 951.4L1620 951.6L1621 951L1622 951L1623 951L1624 951.1L1625 950.9L1626 951L1627 950.1L1628 950.9L1629 950.5L1630 951L1631 949.7L1632 949.9L1633 949.6L1634 950.8L1635 951.1L1636 950.6L1637 950L1638 950.8L1639 950.7L1640 950.2L1641 949.7L1642 949.7L1643 949.9L1644 949.6L1645 949.8L1646 950.1L1647 950.6L1648 949L1649 949.9L1650 948.9L1651 949L1652 950.2L1653 949.7L1654 950.3L1655 949.4L1656 948.6L1657 949.2L1658 949.5L1659 950.1L1660 950.2L1661 949.2L1662 949.1L1663 948.4L1664 949.4L1665 948.6L1666 948.4L1667 948.1L1668 948.1L1669 949.2L1670 948.2L1671 949.6L1672 948L1673 949.4L1674 948L1675 947.8L1676 949L1677 948.1L1678 948.9L1679 947.9L1680 947.6L1681 948.8L1682 948.7L1683 948.9L1684 948.6L1685 947.4L1686 948.3L1687 948.4L1688 947.9L1689 948.7L1690 947.5L1691 948.7L1692 948.2L1693 946.9L1694 946.9L1695 947.9L1696 948.2L1697 946.8L1698 947.2L1699 947.9L1700 946.8L1701 948L1702 947.3L1703 946.5L1704 947L1705 947.3L1706 947L1707 947.4L1708 946.4L1709 947.5L1710 946.7L1711 947.2L1712 947.1L1713 946.7L1714 946.6L1715 947.2L1716 947.5L1717 947.1L1718 946.7L1719 946.1L1720 945.7L1721 947.3L1722 946.7L1723 946.9L1724 946L1725 946.4L1726 947L1727 946.7L1728 946.3L1729 945.7L1730 945.9L1731 946.6L1732 945.7L1733 946.2L1734 946L1735 946.5L1736 946.3L1737 945.3L1738 944.7L1739 945.1L1740 945.4L1741 945.6L1742 946L1743 946.1L1744 944.5L1745 945.9L1746 945.8L1747 945.8L1748 945.3L1749 944.7L1750 945.7L1751 945.6" fill="none" stroke="#7e38a8" stroke-width="1.25" stroke-linejoin="bevel"/><path d="M3 264.5L4 264.5L5 264.5L6 264.5L7 264.5L8 264.5L9 264.5L10 264.5L11 264.5L12 264.5L13 264.5L14 264.5L15 264.5L16 264.5L17 264.5L18 264.5L19 264.5L20 264.5L21 264.5L22 264.5L23 264.5L24 264.5L25 264.5L26 264.5L27 264.5L28 264.5L29 264.5L30 264.5L31 264.5L32 264.5L33 264.5L34 264.5L35 264.5L36 264.5L37 264.5L38 264.5L39 264.5L40 264.5L41 264.5L42 264.5L43 264.5L44 264.5L45 264.5L46 264.5L47 264.5L48 264.5L49 264.5L50 264.5L51 264.5L52 264.5L53 264.5L54 264.5L55 261.5L56 270.5L57 260.5L58 267.5L59 262.5L60 265.5L61 263.5L62 263.5L63 265.5L64 265.5L65 265.5L66 264.5L67 264.5L68 264.5L69 264.5L70 264.5L71 265.5L72 265.5L73 265.5L74 265.5L75 264.5L76 264.5L77 264.5L78 264.5L79 264.5L80 264.5L81 265.5L82 265.5L83 265.5L84 265.5L85 265.5L86 264.5L87 264.5L88 264.5L89 264.5L90 264.5L91 264.5L92 265.5L93 265.5L94 265.5L95 265.5L96 265.5L97 264.5L98 264.5L99 264.5L100 264.5L101 264.5L102 264.5L103 265.5L104 265.5L105 265.5L106 265.5L107 265.5L108 264.5L109 264.5L110 264.5L111 264.5L112 264.5L113 265.5L114 265.5L115 265.5L116 265.5L117 264.5L118 264.5L119 264.5L120 264.5L121 264.5L122 264.5L123 264.5L124 264.5L125 264.5L126 264.5L127 264.5L128 264.5L129 264.5L130 264.5L131 264.5L132 264.5L133 264.5L134 264.5L135 264.5L136 264.5L137 264.5L138 264.5L139 264.5L140 264.5L141 264.5L142 264.5L143 264.5L144 264.5L145 264.5L146 264.5L147 264.5L148 264.5L149 264.5L150 264.5L151 264.5L152 264.5L153 264.5L154 264.5L155 264.5L156 264.5L157 264.5L158 264.5L159 264.5L160 264.5L161 264.5L162 264.5L163 264.5L164 264.5L165 264.5L166 264.5L167 264.5L168 264.5L169 264.5L170 264.5L171 264.5L172 264.5L173 264.5L174 264.5L175 264.5L176 264.5L177 264.5L178 264.5L179 264.5L180 264.5L181 264.5L182 264.5L183 264.5L184 264.5L185 264.5L186 264.5L187 264.5L188 264.5L189 264.5L190 264.5L191 264.5L192 264.5L193 264.5L194 264.5L195 264.5L196 264.5L197 264.5L198 264.5L199 264.5L200 264.5L201 264.5L202 264.5L203 264.5L204 264.5L205 264.5L206 264.5L207 264.5L208 264.5L209 264.5L210 264.5L211 264.5L212 264.5L213 264.5L214 264.5L215 264.5L216 264.5L217 264.5L218 264.5L219 264.5L220 264.5L221 264.5L222 264.5L223 264.5L224 264.5L225 264.5L226 264.5L227 264.5L228 264.5L229 264.5L230 264.5L231 264.5L232 264.5L233 264.5L234 264.5L235 264.5L236 264.5L237 264.5L238 264.5L239 264.5L240 264.5L241 264.5L242 264.5L243 264.5L244 264.5L245 264.5L246 264.5L247 264.5L248 264.5L249 264.5L250 264.5L251 264.5L252 264.5L253 264.5L254 264.5L255 264.5L256 264.5L257 264.5L258 264.5L259 264.5L260 264.5L261 264.5L262 264.5L263 264.5L264 264.5L265 264.5L266 264.5L267 264.5L268 264.5L269 257.5L270 254.5L271 252.5L272 251.5L273 250.5L274 248.5L275 247.5L276 246.5L277 246.5L278 245.5L279 244.5L280 243.5L281 243.5L282 242.5L283 241.5L284 240.5L285 239.5L286 238.5L287 237.5L288 236.5L289 235.5L290 234.5L291 234.5L292 233.5L293 232.5L294 231.5L295 230.5L296 230.5L297 229.5L298 228.5L299 228.5L300 227.5L301 227.5L302 226.5L303 225.5L304 225.5L305 224.5L306 224.5L307 223.5L308 223.5L309 222.5L310 222.5L311 221.5L312 221.5L313 220.5L314 221.5L315 220.5L316 220.5L317 219.5L318 219.5L319 218.5L320 217.5L321 217.5L322 216.5L323 216.5L324 215.5L325 215.5L326 214.5L327 214.5L328 214.5L329 213.5L330 213.5L331 212.5L332 212.5L333 212.5L334 211.5L335 211.5L336 211.5L337 210.5L338 210.5L339 209.5L340 209.5L341 209.5L342 208.5L343 208.5L344 208.5L345 207.5L346 207.5L347 207.5L348 206.5L349 206.5L350 206.5L351 205.5L352 205.5L353 205.5L354 205.5L355 204.5L356 204.5L357 204.5L358 203.5L359 203.5L360 203.5L361 203.5L362 203.5L363 203.5L364 203.5L365 203.5L366 203.5L367 202.5L368 201.5L369 201.5L370 201.5L371 200.5L372 200.5L373 200.5L374 200.5L375 200.5L376 200.5L377 199.5L378 199.5L379 199.5L380 199.5L381 199.5L382 198.5L383 198.5L384 198.5L385 198.5L386 198.5L387 197.5L388 197.5L389 197.5L390 197.5L391 197.5L392 197.5L393 196.5L394 196.5L395 196.5L396 196.5L397 196.5L398 196.5L399 195.5L400 195.5L401 195.5L402 195.5L403 195.5L404 195.5L405 195.5L406 195.5L407 194.5L408 194.5L409 194.5L410 195.5L411 195.5L412 194.5L413 194.5L414 194.5L415 193.5L416 193.5L417 193.5L418 193.5L419 193.5L420 193.5L421 193.5L422 193.5L423 192.5L424 192.5L425 192.5L426 192.5L427 192.5L428 192.5L429 192.5L430 192.5L431 192.5L432 192.5L433 191.5L434 191.5L435 191.5L436 191.5L437 191.5L438 191.5L439 191.5L440 191.5L441 191.5L442 191.5L443 191.5L444 191.5L445 190.5L446 190.5L447 190.5L448 190.5L449 190.5L450 190.5L451 190.5L452 190.5L453 190.5L454 190.5L455 190.5L456 190.5L457 190.5L458 190.5L459 190.5L460 190.5L461 190.5L462 190.5L463 189.5L464 189.5L465 189.5L466 189.5L467 189.5L468 189.5L469 189.5L470 189.5L471 189.5L472 189.5L473 190.5L474 190.5L475 190.5L476 189.5L477 189.5L478 189.5L479 189.5L480 189.5L481 189.5L482 189.5L483 189.5L484 189.5L485 189.5L486 189.5L487 188.5L488 188.5L489 188.5L490 188.5L491 188.5L492 188.5L493 188.5L494 188.5L495 188.5L496 188.5L497 188.5L498 188.5L499 188.5L500 188.5L501 188.5L502 188.5L503 189.5L504 189.5L505 189.5L506 189.5L507 189.5L508 189.5L509 188.5L510 188.5L511 188.5L512 188.5L513 188.5L514 188.5L515 188.5L516 188.5L517 188.5L518 188.5L519 188.5L520 188.5L521 188.5L522 188.5L523 188.5L524 188.5L525 188.5L526 188.5L527 188.5L528 188.5L529 188.5L530 188.5L531 188.5L532 188.5L533 188.5L534 188.5L535 188.5L536 188.5L537 188.5L538 188.5L539 188.5L540 188.5L541 188.5L542 188.5L543 188.5L544 188.5L545 188.5L546 188.5L547 188.5L548 188.5L549 188.5L550 188.5L551 188.5L552 188.5L553 188.5L554 188.5L555 188.5L556 188.5L557 188.5L558 188.5L559 188.5L560 188.5L561 188.5L562 188.5L563 188.5L564 188.5L565 188.5L566 188.5L567 188.5L568 188.5L569 188.5L570 188.5L571 188.5L572 188.5L573 188.5L574 188.5L575 188.5L576 188.5L577 188.5L578 188.5L579 188.5L580 188.5L581 188.5L582 188.5L583 188.5L584 188.5L585 187.5L586 187.5L587 187.5L588 187.5L589 187.5L590 187.5L591 188.5L592 188.5L593 188.5L594 188.5L595 188.5L596 188.5L597 188.5L598 188.5L599 188.5L600 188.5L601 188.5L602 188.5L603 188.5L604 188.5L605 188.5L606 188.5L607 188.5L608 188.5L609 188.5L610 188.5L611 188.5L612 188.5L613 188.5L614 188.5L615 188.5L616 188.5L617 188.5L618 188.5L619 188.5L620 188.5L621 188.5L622 189.5L623 189.5L624 189.5L625 189.5L626 189.5L627 189.5L628 189.5L629 189.5L630 190.5L631 190.5L632 190.5L633 190.5L634 190.5L635 190.5L636 189.5L637 189.5L638 189.5L639 189.5L640 189.5L641 190.5L642 190.5L643 190.5L644 190.5L645 190.5L646 190.5L647 190.5L648 190.5L649 190.5L650 190.5L651 190.5L652 190.5L653 190.5L654 190.5L655 190.5L656 190.5L657 190.5L658 190.5L659 190.5L660 191.5L661 191.5L662 191.5L663 192.5L664 192.5L665 191.5L666 191.5L667 191.5L668 191.5L669 191.5L670 191.5L671 191.5L672 191.5L673 191.5L674 191.5L675 191.5L676 192.5L677 192.5L678 192.5L679 192.5L680 192.5L681 192.5L682 192.5L683 192.5L684 192.5L685 192.5L686 192.5L687 192.5L688 192.5L689 192.5L690 193.5L691 193.5L692 193.5L693 193.5L694 193.5L695 193.5L696 193.5L697 193.5L698 193.5L699 193.5L700 193.5L701 193.5L702 193.5L703 193.5L704 194.5L705 194.5L706 194.5L707 194.5L708 194.5L709 194.5L710 194.5L711 194.5L712 193.5L713 193.5L714 193.5L715 194.5L716 194.5L717 194.5L718 194.5L719 195.5L720 195.5L721 195.5L722 195.5L723 195.5L724 195.5L725 195.5L726 195.5L727 195.5L728 195.5L729 195.5L730 195.5L731 195.5L732 195.5L733 196.5L734 196.5L735 196.5L736 196.5L737 196.5L738 196.5L739 196.5L740 197.5L741 197.5L742 197.5L743 197.5L744 197.5L745 196.5L746 197.5L747 197.5L748 197.5L749 197.5L750 197.5L751 197.5L752 197.5L753 197.5L754 197.5L755 197.5L756 197.5L757 197.5L758 198.5L759 198.5L760 198.5L761 198.5L762 198.5L763 198.5L764 198.5L765 198.5L766 198.5L767 198.5L768 199.5L769 199.5L770 199.5L771 199.5L772 199.5L773 199.5L774 199.5L775 199.5L776 199.5L777 199.5L778 200.5L779 200.5L780 200.5L781 200.5L782 200.5L783 200.5L784 200.5L785 200.5L786 200.5L787 201.5L788 201.5L789 201.5L790 201.5L791 201.5L792 201.5L793 201.5L794 201.5L795 202.5L796 202.5L797 202.5L798 202.5L799 202.5L800 202.5L801 202.5L802 203.5L803 203.5L804 203.5L805 203.5L806 203.5L807 203.5L808 203.5L809 204.5L810 204.5L811 204.5L812 204.5L813 204.5L814 204.5L815 205.5L816 205.5L817 205.5L818 205.5L819 205.5L820 205.5L821 207.5L822 207.5L823 207.5L824 207.5L825 207.5L826 208.5L827 207.5L828 207.5L829 207.5L830 208.5L831 208.5L832 208.5L833 208.5L834 208.5L835 209.5L836 209.5L837 209.5L838 209.5L839 210.5L840 210.5L841 210.5L842 210.5L843 210.5L844 211.5L845 211.5L846 211.5L847 211.5L848 212.5L849 212.5L850 212.5L851 212.5L852 213.5L853 213.5L854 213.5L855 213.5L856 213.5L857 214.5L858 214.5L859 214.5L860 214.5L861 215.5L862 215.5L863 215.5L864 215.5L865 215.5L866 216.5L867 216.5L868 216.5L869 216.5L870 216.5L871 217.5L872 217.5L873 217.5L874 217.5L875 219.5L876 219.5L877 219.5L878 219.5L879 219.5L880 219.5L881 219.5L882 219.5L883 219.5L884 220.5L885 220.5L886 220.5L887 220.5L888 221.5L889 221.5L890 221.5L891 221.5L892 222.5L893 222.5L894 222.5L895 223.5L896 223.5L897 223.5L898 223.5L899 224.5L900 225.5L901 225.5L902 225.5L903 225.5L904 225.5L905 225.5L906 226.5L907 226.5L908 226.5L909 227.5L910 227.5L911 227.5L912 227.5L913 228.5L914 228.5L915 228.5L916 229.5L917 229.5L918 229.5L919 229.5L920 230.5L921 230.5L922 230.5L923 230.5L924 231.5L925 231.5L926 231.5L927 231.5L928 232.5L929 232.5L930 232.5L931 232.5L932 233.5L933 233.5L934 233.5L935 233.5L936 233.5L937 234.5L938 234.5L939 234.5L940 234.5L941 234.5L942 235.5L943 235.5L944 235.5L945 235.5L946 235.5L947 236.5L948 236.5L949 236.5L950 236.5L951 236.5L952 236.5L953 237.5L954 237.5L955 237.5L956 237.5L957 237.5L958 237.5L959 238.5L960 237.5L961 237.5L962 237.5L963 237.5L964 237.5L965 239.5L966 239.5L967 239.5L968 239.5L969 239.5L970 239.5L971 239.5L972 240.5L973 240.5L974 240.5L975 240.5L976 240.5L977 240.5L978 241.5L979 241.5L980 241.5L981 241.5L982 241.5L983 241.5L984 241.5L985 242.5L986 242.5L987 242.5L988 242.5L989 242.5L990 242.5L991 242.5L992 242.5L993 243.5L994 243.5L995 244.5L996 244.5L997 244.5L998 244.5L999 243.5L1000 243.5L1001 244.5L1002 244.5L1003 244.5L1004 244.5L1005 244.5L1006 244.5L1007 244.5L1008 244.5L1009 244.5L1010 244.5L1011 245.5L1012 245.5L1013 245.5L1014 245.5L1015 245.5L1016 245.5L1017 245.5L1018 245.5L1019 245.5L1020 245.5L1021 245.5L1022 245.5L1023 245.5L1024 245.5L1025 246.5L1026 246.5L1027 246.5L1028 246.5L1029 246.5L1030 246.5L1031 246.5L1032 246.5L1033 246.5L1034 246.5L1035 246.5L1036 246.5L1037 246.5L1038 246.5L1039 246.5L1040 246.5L1041 246.5L1042 246.5L1043 246.5L1044 247.5L1045 247.5L1046 247.5L1047 247.5L1048 247.5L1049 248.5L1050 248.5L1051 248.5L1052 248.5L1053 248.5L1054 248.5L1055 247.5L1056 247.5L1057 247.5L1058 247.5L1059 247.5L1060 247.5L1061 247.5L1062 247.5L1063 247.5L1064 247.5L1065 247.5L1066 247.5L1067 248.5L1068 248.5L1069 248.5L1070 248.5L1071 248.5L1072 248.5L1073 248.5L1074 248.5L1075 248.5L1076 248.5L1077 247.5L1078 247.5L1079 248.5L1080 248.5L1081 248.5L1082 248.5L1083 248.5L1084 248.5L1085 248.5L1086 248.5L1087 249.5L1088 249.5L1089 249.5L1090 249.5L1091 249.5L1092 249.5L1093 249.5L1094 249.5L1095 249.5L1096 249.5L1097 249.5L1098 249.5L1099 249.5L1100 249.5L1101 249.5L1102 249.5L1103 249.5L1104 249.5L1105 249.5L1106 249.5L1107 249.5L1108 249.5L1109 249.5L1110 249.5L1111 249.5L1112 249.5L1113 250.5L1114 250.5L1115 251.5L1116 251.5L1117 251.5L1118 251.5L1119 251.5L1120 250.5L1121 250.5L1122 250.5L1123 250.5L1124 250.5L1125 250.5L1126 250.5L1127 250.5L1128 250.5L1129 250.5L1130 250.5L1131 250.5L1132 250.5L1133 250.5L1134 250.5L1135 250.5L1136 250.5L1137 250.5L1138 250.5L1139 250.5L1140 250.5L1141 250.5L1142 250.5L1143 250.5L1144 250.5L1145 250.5L1146 250.5L1147 251.5L1148 251.5L1149 251.5L1150 251.5L1151 251.5L1152 251.5L1153 251.5L1154 251.5L1155 251.5L1156 251.5L1157 251.5L1158 251.5L1159 251.5L1160 251.5L1161 251.5L1162 251.5L1163 251.5L1164 251.5L1165 251.5L1166 251.5L1167 251.5L1168 251.5L1169 251.5L1170 251.5L1171 251.5L1172 251.5L1173 251.5L1174 251.5L1175 251.5L1176 251.5L1177 252.5L1178 252.5L1179 252.5L1180 252.5L1181 252.5L1182 251.5L1183 251.5L1184 251.5L1185 251.5L1186 251.5L1187 251.5L1188 251.5L1189 252.5L1190 252.5L1191 252.5L1192 252.5L1193 252.5L1194 252.5L1195 252.5L1196 252.5L1197 252.5L1198 252.5L1199 252.5L1200 252.5L1201 252.5L1202 252.5L1203 252.5L1204 253.5L1205 253.5L1206 252.5L1207 252.5L1208 252.5L1209 252.5L1210 252.5L1211 252.5L1212 252.5L1213 252.5L1214 252.5L1215 252.5L1216 252.5L1217 252.5L1218 252.5L1219 252.5L1220 252.5L1221 252.5L1222 252.5L1223 252.5L1224 252.5L1225 252.5L1226 252.5L1227 252.5L1228 252.5L1229 252.5L1230 252.5L1231 252.5L1232 252.5L1233 252.5L1234 252.5L1235 252.5L1236 252.5L1237 252.5L1238 252.5L1239 253.5L1240 253.5L1241 253.5L1242 253.5L1243 253.5L1244 253.5L1245 253.5L1246 253.5L1247 253.5L1248 253.5L1249 253.5L1250 253.5L1251 253.5L1252 253.5L1253 253.5L1254 253.5L1255 254.5L1256 254.5L1257 253.5L1258 253.5L1259 253.5L1260 253.5L1261 253.5L1262 253.5L1263 253.5L1264 253.5L1265 253.5L1266 253.5L1267 253.5L1268 253.5L1269 253.5L1270 253.5L1271 253.5L1272 253.5L1273 253.5L1274 253.5L1275 253.5L1276 253.5L1277 253.5L1278 253.5L1279 253.5L1280 253.5L1281 253.5L1282 253.5L1283 253.5L1284 253.5L1285 253.5L1286 253.5L1287 253.5L1288 253.5L1289 253.5L1290 253.5L1291 253.5L1292 253.5L1293 253.5L1294 253.5L1295 253.5L1296 253.5L1297 254.5L1298 254.5L1299 254.5L1300 254.5L1301 254.5L1302 254.5L1303 254.5L1304 254.5L1305 254.5L1306 254.5L1307 254.5L1308 254.5L1309 254.5L1310 254.5L1311 254.5L1312 254.5L1313 254.5L1314 254.5L1315 254.5L1316 254.5L1317 254.5L1318 254.5L1319 254.5L1320 254.5L1321 254.5L1322 254.5L1323 254.5L1324 254.5L1325 254.5L1326 254.5L1327 254.5L1328 255.5L1329 255.5L1330 255.5L1331 255.5L1332 255.5L1333 254.5L1334 254.5L1335 254.5L1336 254.5L1337 254.5L1338 254.5L1339 254.5L1340 254.5L1341 254.5L1342 254.5L1343 254.5L1344 254.5L1345 254.5L1346 254.5L1347 254.5L1348 254.5L1349 254.5L1350 254.5L1351 254.5L1352 254.5L1353 254.5L1354 254.5L1355 254.5L1356 254.5L1357 254.5L1358 254.5L1359 254.5L1360 254.5L1361 254.5L1362 253.5L1363 253.5L1364 253.5L1365 254.5L1366 254.5L1367 254.5L1368 255.5L1369 255.5L1370 255.5L1371 255.5L1372 255.5L1373 255.5L1374 255.5L1375 255.5L1376 255.5L1377 255.5L1378 255.5L1379 255.5L1380 255.5L1381 255.5L1382 255.5L1383 255.5L1384 255.5L1385 255.5L1386 255.5L1387 255.5L1388 255.5L1389 255.5L1390 255.5L1391 255.5L1392 255.5L1393 255.5L1394 255.5L1395 255.5L1396 255.5L1397 255.5L1398 255.5L1399 255.5L1400 255.5L1401 255.5L1402 255.5L1403 255.5L1404 255.5L1405 255.5L1406 255.5L1407 255.5L1408 255.5L1409 255.5L1410 255.5L1411 255.5L1412 256.5L1413 256.5L1414 256.5L1415 256.5L1416 255.5L1417 255.5L1418 255.5L1419 255.5L1420 255.5L1421 255.5L1422 255.5L1423 255.5L1424 255.5L1425 255.5L1426 255.5L1427 255.5L1428 255.5L1429 255.5L1430 255.5L1431 255.5L1432 255.5L1433 255.5L1434 255.5L1435 255.5L1436 255.5L1437 255.5L1438 255.5L1439 255.5L1440 255.5L1441 255.5L1442 255.5L1443 255.5L1444 255.5L1445 255.5L1446 256.5L1447 256.5L1448 257.5L1449 257.5L1450 257.5L1451 257.5L1452 256.5L1453 256.5L1454 256.5L1455 256.5L1456 256.5L1457 256.5L1458 256.5L1459 256.5L1460 256.5L1461 256.5L1462 256.5L1463 256.5L1464 256.5L1465 256.5L1466 256.5L1467 256.5L1468 256.5L1469 256.5L1470 256.5L1471 256.5L1472 256.5L1473 256.5L1474 257.5L1475 257.5L1476 257.5L1477 257.5L1478 257.5L1479 256.5L1480 256.5L1481 256.5L1482 256.5L1483 256.5L1484 256.5L1485 256.5L1486 256.5L1487 256.5L1488 256.5L1489 256.5L1490 256.5L1491 256.5L1492 256.5L1493 256.5L1494 256.5L1495 256.5L1496 256.5L1497 256.5L1498 256.5L1499 256.5L1500 256.5L1501 256.5L1502 256.5L1503 256.5L1504 256.5L1505 256.5L1506 256.5L1507 256.5L1508 256.5L1509 256.5L1510 256.5L1511 256.5L1512 256.5L1513 256.5L1514 256.5L1515 256.5L1516 255.5L1517 255.5L1518 255.5L1519 256.5L1520 256.5L1521 256.5L1522 256.5L1523 256.5L1524 256.5L1525 256.5L1526 256.5L1527 256.5L1528 256.5L1529 256.5L1530 256.5L1531 256.5L1532 256.5L1533 256.5L1534 256.5L1535 256.5L1536 256.5L1537 256.5L1538 256.5L1539 256.5L1540 256.5L1541 256.5L1542 256.5L1543 256.5L1544 256.5L1545 256.5L1546 256.5L1547 256.5L1548 257.5L1549 257.5L1550 257.5L1551 257.5L1552 257.5L1553 258.5L1554 258.5L1555 257.5L1556 257.5L1557 257.5L1558 257.5L1559 257.5L1560 257.5L1561 257.5L1562 257.5L1563 257.5L1564 257.5L1565 257.5L1566 257.5L1567 257.5L1568 257.5L1569 257.5L1570 257.5L1571 257.5L1572 257.5L1573 257.5L1574 257.5L1575 257.5L1576 257.5L1577 257.5L1578 257.5L1579 257.5L1580 257.5L1581 257.5L1582 257.5L1583 257.5L1584 257.5L1585 257.5L1586 257.5L1587 257.5L1588 257.5L1589 257.5L1590 257.5L1591 257.5L1592 257.5L1593 257.5L1594 257.5L1595 257.5L1596 257.5L1597 257.5L1598 257.5L1599 257.5L1600 257.5L1601 257.5L1602 257.5L1603 257.5L1604 257.5L1605 257.5L1606 257.5L1607 257.5L1608 257.5L1609 257.5L1610 257.5L1611 257.5L1612 257.5L1613 257.5L1614 257.5L1615 257.5L1616 257.5L1617 257.5L1618 257.5L1619 257.5L1620 257.5L1621 257.5L1622 257.5L1623 257.5L1624 257.5L1625 257.5L1626 257.5L1627 257.5L1628 257.5L1629 257.5L1630 257.5L1631 257.5L1632 257.5L1633 257.5L1634 257.5L1635 257.5L1636 257.5L1637 258.5L1638 258.5L1639 258.5L1640 258.5L1641 258.5L1642 257.5L1643 257.5L1644 257.5L1645 257.5L1646 258.5L1647 258.5L1648 258.5L1649 258.5L1650 258.5L1651 258.5L1652 258.5L1653 258.5L1654 258.5L1655 258.5L1656 258.5L1657 258.5L1658 258.5L1659 258.5L1660 258.5L1661 258.5L1662 258.5L1663 258.5L1664 258.5L1665 258.5L1666 258.5L1667 258.5L1668 258.5L1669 258.5L1670 258.5L1671 258.5L1672 258.5L1673 258.5L1674 258.5L1675 258.5L1676 258.5L1677 258.5L1678 258.5L1679 258.5L1680 258.5L1681 258.5L1682 258.5L1683 258.5L1684 258.5L1685 258.5L1686 257.5L1687 257.5L1688 257.5L1689 257.5L1690 257.5L1691 258.5L1692 258.5L1693 258.5L1694 258.5L1695 258.5L1696 258.5L1697 258.5L1698 258.5L1699 258.5L1700 258.5L1701 258.5L1702 258.5L1703 258.5L1704 258.5L1705 258.5L1706 258.5L1707 258.5L1708 258.5L1709 258.5L1710 258.5L1711 258.5L1712 258.5L1713 258.5L1714 258.5L1715 258.5L1716 258.5L1717 259.5L1718 259.5L1719 259.5L1720 259.5L1721 259.5L1722 259.5L1723 259.5L1724 259.5L1725 259.5L1726 259.5L1727 259.5L1728 259.5L1729 259.5L1730 259.5L1731 259.5L1732 259.5L1733 259.5L1734 259.5L1735 260.5L1736 260.5L1737 260.5L1738 259.5L1739 259.5L1740 259.5L1741 259.5L1742 259.5L1743 259.5L1744 259.5L1745 259.5L1746 259.5L1747 259.5L1748 259.5L1749 259.5L1750 259.5L1751 259.5" fill="none" stroke="#f7f000" stroke-width="1.3" stroke-linejoin="bevel"/><g font-size="12.2" text-anchor="end" letter-spacing="0.85"><rect x="1714.9" y="75" width="32.6" height="11" fill="#000"/><text x="1747.3" y="85" fill="#e3da2a">40 V</text><rect x="1714.9" y="98" width="32.6" height="11" fill="#000"/><text x="1747.3" y="108" fill="#e3da2a">35 V</text><rect x="1714.9" y="122" width="32.6" height="11" fill="#000"/><text x="1747.3" y="132" fill="#e3da2a">30 V</text><rect x="1714.9" y="145" width="32.6" height="11" fill="#000"/><text x="1747.3" y="155" fill="#e3da2a">25 V</text><rect x="1714.9" y="168" width="32.6" height="11" fill="#000"/><text x="1747.3" y="178" fill="#e3da2a">20 V</text><rect x="1714.9" y="191" width="32.6" height="11" fill="#000"/><text x="1747.3" y="201" fill="#e3da2a">15 V</text><rect x="1714.9" y="214" width="32.6" height="11" fill="#000"/><text x="1747.3" y="224" fill="#e3da2a">10 V</text><rect x="1722.5" y="238" width="25.0" height="11" fill="#000"/><text x="1747.3" y="248" fill="#e3da2a">5 V</text><rect x="1722.5" y="261" width="25.0" height="11" fill="#000"/><text x="1747.3" y="271" fill="#e3da2a">0 V</text><rect x="1722.5" y="309" width="25.0" height="11" fill="#000"/><text x="1747.3" y="319" fill="#8ac83a">1 V</text><rect x="1696.2" y="332" width="51.3" height="11" fill="#000"/><text x="1747.3" y="342" fill="#8ac83a">800 mV</text><rect x="1696.2" y="356" width="51.3" height="11" fill="#000"/><text x="1747.3" y="366" fill="#8ac83a">600 mV</text><rect x="1696.2" y="379" width="51.3" height="11" fill="#000"/><text x="1747.3" y="389" fill="#8ac83a">400 mV</text><rect x="1696.2" y="402" width="51.3" height="11" fill="#000"/><text x="1747.3" y="412" fill="#8ac83a">200 mV</text><rect x="1722.5" y="425" width="25.0" height="11" fill="#000"/><text x="1747.3" y="435" fill="#8ac83a">0 V</text><rect x="1691.3" y="448" width="56.2" height="11" fill="#000"/><text x="1747.3" y="458" fill="#8ac83a">-200 mV</text><rect x="1691.3" y="472" width="56.2" height="11" fill="#000"/><text x="1747.3" y="482" fill="#8ac83a">-400 mV</text><rect x="1691.3" y="495" width="56.2" height="11" fill="#000"/><text x="1747.3" y="505" fill="#8ac83a">-600 mV</text><rect x="1669.7" y="543" width="77.8" height="11" fill="#000"/><text x="1747.3" y="553" fill="#ee8a2a">533.703 mT</text><rect x="1669.7" y="566" width="77.8" height="11" fill="#000"/><text x="1747.3" y="576" fill="#ee8a2a">466.991 mT</text><rect x="1669.7" y="590" width="77.8" height="11" fill="#000"/><text x="1747.3" y="600" fill="#ee8a2a">400.278 mT</text><rect x="1669.7" y="613" width="77.8" height="11" fill="#000"/><text x="1747.3" y="623" fill="#ee8a2a">333.565 mT</text><rect x="1669.7" y="636" width="77.8" height="11" fill="#000"/><text x="1747.3" y="646" fill="#ee8a2a">266.852 mT</text><rect x="1669.7" y="659" width="77.8" height="11" fill="#000"/><text x="1747.3" y="669" fill="#ee8a2a">200.139 mT</text><rect x="1669.7" y="682" width="77.8" height="11" fill="#000"/><text x="1747.3" y="692" fill="#ee8a2a">133.426 mT</text><rect x="1677.4" y="706" width="70.1" height="11" fill="#000"/><text x="1747.3" y="716" fill="#ee8a2a">66.713 mT</text><rect x="1723.4" y="729" width="24.1" height="11" fill="#000"/><text x="1747.3" y="739" fill="#ee8a2a">0 T</text><rect x="1680.7" y="769" width="66.8" height="11" fill="#000"/><text x="1747.3" y="779" fill="#7e3ca8">132.382 A</text><rect x="1688.4" y="792" width="59.1" height="11" fill="#000"/><text x="1747.3" y="802" fill="#7e3ca8">66.191 A</text><rect x="1723.2" y="816" width="24.3" height="11" fill="#000"/><text x="1747.3" y="826" fill="#7e3ca8">0 A</text><rect x="1683.5" y="839" width="64.0" height="11" fill="#000"/><text x="1747.3" y="849" fill="#7e3ca8">-66.191 A</text><rect x="1675.8" y="862" width="71.7" height="11" fill="#000"/><text x="1747.3" y="872" fill="#7e3ca8">-132.382 A</text><rect x="1675.8" y="885" width="71.7" height="11" fill="#000"/><text x="1747.3" y="895" fill="#7e3ca8">-198.573 A</text><rect x="1675.8" y="909" width="71.7" height="11" fill="#000"/><text x="1747.3" y="919" fill="#7e3ca8">-264.765 A</text><rect x="1675.8" y="932" width="71.7" height="11" fill="#000"/><text x="1747.3" y="942" fill="#7e3ca8">-330.956 A</text><rect x="1675.8" y="955" width="71.7" height="11" fill="#000"/><text x="1747.3" y="965" fill="#7e3ca8">-397.147 A</text><rect x="1675.8" y="979" width="71.7" height="11" fill="#000"/><text x="1747.3" y="989" fill="#7e3ca8">-463.338 A</text></g><g font-size="12.5" text-anchor="middle" fill="#c8c8c8" letter-spacing="0.3"><text x="55.5" y="986">0 s</text><text x="230.5" y="986">3 ms</text><text x="405.5" y="986">6 ms</text><text x="580.5" y="986">9 ms</text><text x="755.5" y="986">12 ms</text><text x="929.5" y="986">15 ms</text><text x="1104.5" y="986">18 ms</text><text x="1279.5" y="986">21 ms</text><text x="1454.5" y="986">24 ms</text><text x="1629.5" y="986">27 ms</text></g><path d="M9 160.5H30L42 173.25L30 186.0H9Q6.5 186.0 6.5 183.5V163.0Q6.5 160.5 9 160.5Z" fill="#221f0a" stroke="#e8e030" stroke-width="1.2"/><text x="24.2" y="177.25" font-size="11" fill="#e8e030" text-anchor="middle" letter-spacing="0.6" font-family="Liberation Sans">C 1</text><text x="54" y="178" font-size="19.5" fill="#f0e830">U_loop,coil</text><path d="M9 394.5H30L42 407.25L30 420.0H9Q6.5 420.0 6.5 417.5V397.0Q6.5 394.5 9 394.5Z" fill="#141a0c" stroke="#8ad03a" stroke-width="1.2"/><text x="24.2" y="411.25" font-size="11" fill="#8ad03a" text-anchor="middle" letter-spacing="0.6" font-family="Liberation Sans">C 4</text><text x="54" y="412.3" font-size="19.5" fill="#8ad03a">U_Photod</text><path d="M3 733.5H8" stroke="#f28a22" stroke-width="1.3"/><path d="M9 721.5H30L42 734.25L30 747.0H9Q6.5 747.0 6.5 744.5V724.0Q6.5 721.5 9 721.5Z" fill="#1f1409" stroke="#f08c28" stroke-width="1.2"/><text x="24.2" y="738.25" font-size="11" fill="#f08c28" text-anchor="middle" letter-spacing="0.6" font-family="Liberation Sans">M 1</text><text x="54" y="738.5" font-size="19.5" fill="#f08c28">B_t</text><path d="M9.5 808.5H30L40.5 820.5L30 832.5H9.5Q7 832.5 7 830.0V811.0Q7 808.5 9.5 808.5Z" fill="#7a30a8" stroke="#7a30a8" stroke-width="1"/><text x="23.2" y="825" font-size="12" fill="#fff" text-anchor="middle" letter-spacing="0.4">M 2</text><text x="52" y="826" font-size="19.5" fill="#7d3aa8">I_p</text><polygon points="45,57 65,57 55,67" fill="#f28c1e"/><path d="M46 67.8h18v19.5h-6l-3 6.2l-3-6.2h-6z" fill="#000" stroke="#f28c1e" stroke-width="2"/><text x="55.2" y="83" font-size="14" font-weight="bold" fill="#f28c1e" text-anchor="middle">T</text><path d="M1710 63.5H1741Q1744 63.5 1744 66.5V97.5Z" fill="#555"/><circle cx="1736" cy="71" r="4.5" fill="none" stroke="#a8a8a8" stroke-width="1.6"/><line x1="1732.8" y1="74.2" x2="1727.5" y2="79.5" stroke="#a8a8a8" stroke-width="2"/></svg></div><div id="rp"></div><div class="a" style="left:1806px;top:30px;font-size:15px;font-weight:bold;color:#e6e6e6">Add New...</div><div class="btn" style="left:1777px;top:54px"><span style="top:8px">Cursors</span></div><div class="btn" style="left:1849px;top:54px"><span style="top:8px">Callout</span></div><div class="btn" style="left:1777px;top:100px"><span style="top:8px">Measure</span></div><div class="btn" style="left:1849px;top:100px"><span style="top:8px">Search</span></div><div class="btn" style="left:1777px;top:146px"><span style="top:1px;line-height:16px">Results<br>Table</span></div><div class="btn" style="left:1849px;top:146px"><span style="top:8px">Plot</span></div><div class="btn" style="left:1777px;top:196px"></div><div class="btn" style="left:1849px;top:196px"><span style="top:8px">More...</span></div><div class="sep" style="left:1773px;top:189px;width:144px"></div><div class="sep" style="left:1773px;top:241px;width:144px"></div><svg class="a" style="left:1790px;top:196px" width="40" height="36" viewBox="1790 196 40 36"><g fill="#c4c4c4"><rect x="1796.3" y="202.3" width="2.7" height="1.8"/><rect x="1796.3" y="202.3" width="1.8" height="2.7"/><rect x="1802.3" y="202.3" width="4" height="1.8"/><rect x="1809.5" y="202.3" width="4" height="1.8"/><rect x="1816.5" y="202.3" width="2.8" height="1.8"/><rect x="1817.5" y="202.3" width="1.8" height="2.7"/><rect x="1796.3" y="220.6" width="2.7" height="1.8"/><rect x="1796.3" y="219.7" width="1.8" height="2.7"/><rect x="1802.3" y="220.6" width="4" height="1.8"/><rect x="1809.5" y="220.6" width="4" height="1.8"/><rect x="1796.6" y="207.5" width="1.8" height="3.2"/><rect x="1796.6" y="213.7" width="1.8" height="3.1"/><rect x="1817.4" y="207.5" width="1.8" height="3.2"/><rect x="1817.4" y="213.7" width="1.8" height="3.1"/><path d="M1814.3 217.3L1822.3 221.7L1819.6 222.6L1821.6 225.2L1820.2 226.4L1818.1 223.8L1816.4 225.9z"/></g><circle cx="1810" cy="210.7" r="4" fill="none" stroke="#c4c4c4" stroke-width="2"/><line x1="1806.8" y1="213.6" x2="1802" y2="217.2" stroke="#c4c4c4" stroke-width="2.8" stroke-linecap="round"/></svg><div class="a" style="left:1760px;top:501px;width:4px;height:4px;border-radius:2px;background:#bdbdbd"></div><div class="a" style="left:1760px;top:510px;width:4px;height:4px;border-radius:2px;background:#bdbdbd"></div><div class="a" style="left:1760px;top:518px;width:4px;height:4px;border-radius:2px;background:#bdbdbd"></div><div class="bb" style="left:3px;width:90px;background:#d3d3d3"><div class="h" style="background:#4a4522;color:#f4ec3c">Ch 1</div><div class="b" style="background:#d3d3d3"></div><span class="l" style="top:22px">5 V/div</span><span class="l" style="top:41.5px">1 M&#937;</span><span class="l" style="top:60px">200 kHz</span><span class="bw" style="left:74px;top:61px">B</span><span class="bw" style="left:80px;top:65px">w</span></div><div class="bb" style="left:98px;width:90px;background:#8c8c8c"><div class="h" style="background:#24848a;color:#17393b">Ch 2</div><div class="b" style="background:#8c8c8c"></div><span class="l" style="top:22px">250 mV/div</span><span class="l" style="top:41.5px">1 M&#937;</span><span class="l" style="top:60px">200 kHz</span><span class="bw" style="left:74px;top:61px">B</span><span class="bw" style="left:80px;top:65px">w</span></div><div class="bb" style="left:193px;width:90px;background:#8c8c8c"><div class="h" style="background:#8a3a48;color:#c9a6ad">Ch 3</div><div class="b" style="background:#8c8c8c"></div><span class="l" style="top:22px">450 mV/div</span><span class="l" style="top:41.5px">1 M&#937;</span><span class="l" style="top:60px">200 kHz</span><span class="bw" style="left:74px;top:61px">B</span><span class="bw" style="left:80px;top:65px">w</span></div><div class="bb" style="left:288px;width:90px;background:#d3d3d3"><div class="h" style="background:#364420;color:#9ae03c">Ch 4</div><div class="b" style="background:#d3d3d3"></div><span class="l" style="top:22px">200 mV/div</span><span class="l" style="top:41.5px">1 M&#937;</span><span class="l" style="top:60px">200 kHz</span><span class="bw" style="left:74px;top:61px">B</span><span class="bw" style="left:80px;top:65px">w</span></div><div class="bb" style="left:383px;width:90px;background:#d3d3d3"><div class="h" style="background:#4b3521;color:#f39a2c">Math 1</div><div class="b" style="background:#d3d3d3"></div><span class="l" style="top:22px">66.7129 ...</span><span class="l" style="top:41.5px">Intg(ch2)...</span></div><div class="bb" style="left:478px;width:90px;background:#d3d3d3"><div class="h" style="background:#702e8e;color:#f4f4f4">Math 2</div><div class="b" style="background:#d3d3d3"></div><span class="l" style="top:22px">66.1911 ...</span><span class="l" style="top:41.5px">-intg(ch3...</span></div><div class="kb" style="left:1022px"><i style="background:#f39a28"></i><span style="top:30px;font-size:22px">5</span></div><div class="kb" style="left:1067px"><i style="background:#2a2ad8"></i><span style="top:30px;font-size:22px">6</span></div><div class="kb" style="left:1128px"><i style="background:#b02424"></i><span style="top:20px;font-size:16px;line-height:16px">Add<br>New<br>Math</span></div><div class="kb" style="left:1173px"><i style="background:#c2c6da"></i><span style="top:20px;font-size:16px;line-height:16px">Add<br>New<br>Ref</span></div><div class="kb" style="left:1218px"><i style="background:#c455f0"></i><span style="top:20px;font-size:16px;line-height:16px">Add<br>New<br>Bus</span></div><div class="vsep" style="left:1117px;top:999px;height:78px"></div><div class="vsep" style="left:1268px;top:999px;height:78px"></div><div class="vsep" style="left:1811px;top:999px;height:78px"></div><div class="ib" style="left:1280px;width:198px"><div class="h">Horizontal</div><span class="l" style="left:6px;top:22px">3 ms/div</span><span class="l" style="left:112px;top:22px">30 ms</span><span class="l" style="left:6px;top:41px">SR: 1 MS/s</span><span class="l" style="left:112px;top:41px">1 &#956;s/pt</span><span class="l" style="left:6px;top:60px">RL: 30 kpts</span><span class="l" style="left:126px;top:60px">3%</span><svg class="a" style="left:112px;top:62px" width="12" height="14" viewBox="0 0 12 14"><path d="M1 1h8.5v8h-2.5l-1.75 3l-1.75-3h-2.5z" fill="#000" stroke="#f28c1e" stroke-width="1.6"/><text x="5.25" y="8.2" font-family="Liberation Sans" font-weight="bold" font-size="7.5" fill="#fff" text-anchor="middle">T</text></svg></div><div class="ib" style="left:1485px;width:158px"><div class="h">Trigger</div><div class="a" style="left:6px;top:24px;width:30px;height:16px;border-radius:5px;background:#2323c0;border:1px solid #111;color:#fff;font-size:14px;text-align:center;line-height:14px">6</div><svg class="a" style="left:45px;top:24px" width="18" height="16" viewBox="0 0 18 16"><path d="M1 14.5h3l7-10.5h5" fill="none" stroke="#4040b0" stroke-width="1.3"/></svg><span class="l" style="left:72px;top:22px">3 V</span></div><div class="ib" style="left:1650px;width:148px"><div class="h">Acquisition</div><span class="l" style="left:6px;top:22px">Manual,</span><span class="l" style="left:87px;top:22px">Analyze</span><span class="l" style="left:6px;top:41px">High Res: 16 bits</span><span class="l" style="left:6px;top:60px">Single: 0 /1</span></div><div class="a" style="left:1822px;top:998px;width:90px;height:36px;border-radius:6px;background:#ff1f27;border:1px solid #7a5050;color:#fff;font-weight:bold;font-size:14px;text-align:center;line-height:33px">Preview</div><div class="a" style="left:1822px;top:1042px;width:90px;height:37px;border-radius:6px;background:#c9c9c9;color:#111;font-size:15px;text-align:center;line-height:18px;padding-top:1px">09 Dec 2024<br>7:52:32 PM</div></div></body></html>
